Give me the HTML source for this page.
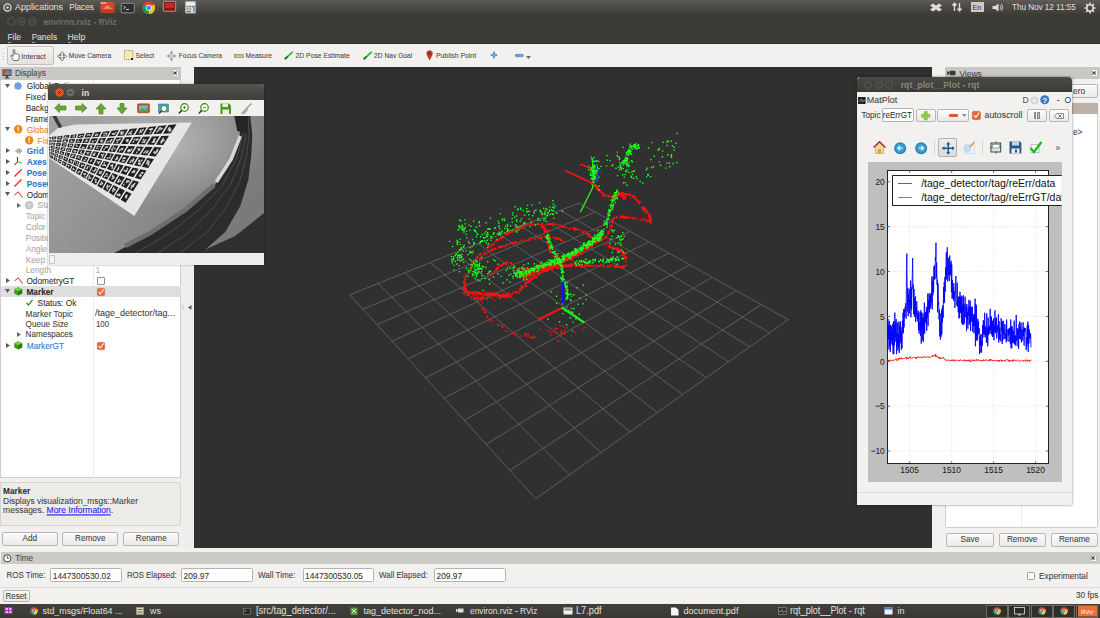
<!DOCTYPE html>
<html><head><meta charset="utf-8">
<style>
*{box-sizing:border-box;margin:0;padding:0}
html,body{width:1100px;height:618px;overflow:hidden;background:#f2f1f0;font-family:"Liberation Sans",sans-serif;color:#3c3c3c;position:relative}
.a{position:absolute}
.t{position:absolute;white-space:nowrap;line-height:1;transform:scaleY(1.1);transform-origin:0 50%;-webkit-text-stroke:0.08px currentColor}
svg{overflow:visible}
.btn{position:absolute;border:1px solid #b9b7b3;border-radius:2px;background:linear-gradient(#fbfbfa,#eceae8)}
</style></head><body>

<div class="a" style="left:0.00px;top:0.00px;width:1100.00px;height:14.00px;background:linear-gradient(#5d5b53,#4a4944 55%,#3e3d39)"></div>
<svg class="a" style="left:2.50px;top:2.50px;" width="9.00" height="9.00" viewBox="0 0 9.00 9.00"><circle cx="4.5" cy="4.5" r="3.6" fill="none" stroke="#dcd9d2" stroke-width="1.3"/><circle cx="4.5" cy="4.5" r="1.3" fill="#dcd9d2"/></svg>
<div class="t" style="left:15.10px;top:3.35px;font-size:8.9px;color:#dfdbd2;">Applications</div>
<div class="t" style="left:69.30px;top:3.72px;font-size:8.16px;color:#dfdbd2;">Places</div>
<svg class="a" style="left:100.00px;top:1.00px;" width="15.00" height="12.00" viewBox="0 0 15.00 12.00"><rect x="0.5" y="1" width="14" height="11" rx="1" fill="#d2482c"/><rect x="0.5" y="1" width="6" height="2" fill="#e8a070"/><path d="M3 8 L7.5 4 L12 8 Z" fill="#f08a5a"/><rect x="1" y="9" width="13" height="2.5" fill="#b83a22"/></svg>
<svg class="a" style="left:121.00px;top:2.50px;" width="13.50" height="10.00" viewBox="0 0 13.50 10.00"><rect x="0.3" y="0.3" width="13" height="9.5" rx="1" fill="#2d2d2d" stroke="#c8c8c8" stroke-width="0.6"/><path d="M2.5 3 L4.5 4.5 L2.5 6" stroke="#eee" stroke-width="0.8" fill="none"/><rect x="5" y="6" width="3" height="0.8" fill="#eee"/></svg>
<svg class="a" style="left:141.50px;top:0.70px;" width="13.50" height="13.50" viewBox="0 0 13.50 13.50"><circle cx="6.75" cy="6.75" r="6.3" fill="#db4437"/><path d="M6.75 6.75 L12.2 3.6 A6.3 6.3 0 0 1 6.75 13.05 Z" fill="#f4c20d"/><path d="M6.75 6.75 L6.75 13.05 A6.3 6.3 0 0 1 1.3 3.6 Z" fill="#0f9d58"/><circle cx="6.75" cy="6.75" r="3" fill="#fff"/><circle cx="6.75" cy="6.75" r="2.3" fill="#4285f4"/></svg>
<svg class="a" style="left:162.50px;top:1.30px;" width="13.00" height="10.50" viewBox="0 0 13.00 10.50"><rect x="0.3" y="0.3" width="12.4" height="10" rx="1" fill="#8a1a1a" stroke="#ddd" stroke-width="0.6"/><rect x="2" y="2" width="9" height="5" fill="#c62828"/></svg>
<svg class="a" style="left:184.50px;top:1.00px;" width="11.00" height="12.50" viewBox="0 0 11.00 12.50"><rect x="0.3" y="0.3" width="10.4" height="12" rx="0.8" fill="#d8d8d8" stroke="#999" stroke-width="0.5"/><rect x="1.5" y="1.5" width="8" height="2.5" fill="#eee"/><g fill="#666"><rect x="1.8" y="5" width="1.5" height="1.2"/><rect x="4.3" y="5" width="1.5" height="1.2"/><rect x="6.8" y="5" width="1.5" height="1.2"/><rect x="1.8" y="7.5" width="1.5" height="1.2"/><rect x="4.3" y="7.5" width="1.5" height="1.2"/><rect x="1.8" y="10" width="4" height="1.2"/></g><rect x="8.3" y="5" width="1.5" height="6" fill="#5a8ac8"/></svg>
<svg class="a" style="left:930.00px;top:2.50px;" width="12.00" height="9.00" viewBox="0 0 12.00 9.00"><path d="M0 2.5 L3 0.5 L6 2.5 L9 0.5 L12 2.5 L9 4.5 L12 6.5 L9 8.5 L6 6.5 L3 8.5 L0 6.5 L3 4.5 Z" fill="#dfdbd2"/></svg>
<svg class="a" style="left:952.00px;top:2.00px;" width="10.00" height="10.00" viewBox="0 0 10.00 10.00"><path d="M2.5 9 V1.5 M0.5 3.5 L2.5 1 L4.5 3.5 M7.5 1 V8.5 M5.5 6.5 L7.5 9 L9.5 6.5" stroke="#dfdbd2" stroke-width="1.4" fill="none"/></svg>
<div class="a" style="left:971.00px;top:2.00px;width:12.60px;height:10.00px;background:#cfcbc3"></div>
<div class="t" style="left:972.50px;top:4.10px;font-size:7.2px;color:#3c3b37;">En</div>
<svg class="a" style="left:992.00px;top:2.50px;" width="12.00" height="9.00" viewBox="0 0 12.00 9.00"><path d="M0.5 3 H3 L6.5 0.5 V8.5 L3 6 H0.5 Z" fill="#dfdbd2"/><path d="M8 2.5 Q9.5 4.5 8 6.5 M9.5 1 Q12 4.5 9.5 8" stroke="#dfdbd2" stroke-width="0.9" fill="none"/></svg>
<div class="t" style="left:1012.00px;top:3.75px;font-size:8.1px;color:#dfdbd2;">Thu Nov 12 11:55</div>
<svg class="a" style="left:1084.00px;top:1.50px;" width="12.00" height="12.00" viewBox="0 0 12.00 12.00"><circle cx="6" cy="6" r="3.2" fill="none" stroke="#dfdbd2" stroke-width="1.6"/><g stroke="#dfdbd2" stroke-width="1.6"><path d="M6 0.5 V2.5 M6 9.5 V11.5 M0.5 6 H2.5 M9.5 6 H11.5 M2.1 2.1 L3.5 3.5 M8.5 8.5 L9.9 9.9 M2.1 9.9 L3.5 8.5 M8.5 3.5 L9.9 2.1"/></g></svg>
<div class="a" style="left:0.00px;top:14.00px;width:1100.00px;height:29.50px;background:#3c3b37"></div>
<div class="a" style="left:0.00px;top:43.00px;width:1100.00px;height:1.00px;background:#2e2d2a"></div>
<svg class="a" style="left:6.80px;top:17.20px;" width="8.60" height="8.60" viewBox="0 0 8.60 8.60"><circle cx="4.3" cy="4.3" r="3.9" fill="#42413c" stroke="#5c5b55" stroke-width="0.7"/></svg>
<svg class="a" style="left:16.90px;top:17.20px;" width="8.60" height="8.60" viewBox="0 0 8.60 8.60"><circle cx="4.3" cy="4.3" r="3.9" fill="#42413c" stroke="#5c5b55" stroke-width="0.7"/></svg>
<svg class="a" style="left:27.70px;top:17.20px;" width="8.60" height="8.60" viewBox="0 0 8.60 8.60"><circle cx="4.3" cy="4.3" r="3.9" fill="#42413c" stroke="#5c5b55" stroke-width="0.7"/></svg>
<svg class="a" style="left:8.60px;top:19.40px;" width="5.00" height="5.00" viewBox="0 0 5.00 5.00"><path d="M1 1 L4 4 M4 1 L1 4" stroke="#2a2a27" stroke-width="0.9"/></svg>
<svg class="a" style="left:19.00px;top:21.20px;" width="4.40" height="1.00" viewBox="0 0 4.40 1.00"><rect x="0" y="0" width="4.4" height="1" fill="#55544e"/></svg>
<svg class="a" style="left:29.70px;top:19.60px;" width="4.60" height="4.60" viewBox="0 0 4.60 4.60"><rect x="0.5" y="0.5" width="3.6" height="3.6" fill="none" stroke="#55544e" stroke-width="0.7"/></svg>
<div class="t" style="left:43.60px;top:17.97px;font-size:8.46px;color:#6f6d67;font-weight:bold;">environ.rviz - RViz</div>
<div class="t" style="left:7.40px;top:32.85px;font-size:8.5px;color:#dfdbd2;">File</div>
<div class="t" style="left:31.70px;top:32.95px;font-size:8.3px;color:#dfdbd2;">Panels</div>
<div class="t" style="left:67.40px;top:32.75px;font-size:8.7px;color:#dfdbd2;">Help</div>
<div class="a" style="left:7.60px;top:41.60px;width:3.00px;height:0.80px;background:#a8a59e"></div>
<div class="a" style="left:32.00px;top:41.60px;width:3.00px;height:0.80px;background:#a8a59e"></div>
<div class="a" style="left:67.60px;top:41.60px;width:3.00px;height:0.80px;background:#a8a59e"></div>
<div class="a" style="left:0.00px;top:44.00px;width:1100.00px;height:23.00px;background:#f2f1f0"></div>
<div class="a" style="left:2.50px;top:52.50px;width:1.00px;height:1.00px;background:#b0aeaa"></div>
<div class="a" style="left:2.50px;top:55.50px;width:1.00px;height:1.00px;background:#b0aeaa"></div>
<div class="a" style="left:2.50px;top:58.50px;width:1.00px;height:1.00px;background:#b0aeaa"></div>
<div class="btn" style="left:7.2px;top:46px;width:46.5px;height:19px;border-color:#c4c2be;background:linear-gradient(#f4f3f2,#e4e2df)"></div>
<svg class="a" style="left:10.00px;top:49.00px;" width="10.00" height="12.00" viewBox="0 0 10.00 12.00"><path d="M3.5 11.5 L1.2 7.5 Q0.6 6.3 1.8 6.2 L3.2 7.4 V1.4 Q3.2 0.5 4 0.5 Q4.8 0.5 4.8 1.4 V5 Q5.6 4.4 6.4 5 Q7.2 4.6 7.9 5.3 Q8.7 5.1 9.2 5.9 V9 L8.2 11.5 Z" fill="#fff" stroke="#333" stroke-width="0.7"/></svg>
<div class="t" style="left:21.30px;top:52.52px;font-size:7.37px;color:#4a4a48;">Interact</div>
<div class="t" style="left:68.80px;top:52.82px;font-size:6.77px;color:#4a4a48;">Move Camera</div>
<div class="t" style="left:135.40px;top:52.82px;font-size:6.76px;color:#4a4a48;">Select</div>
<div class="t" style="left:178.70px;top:52.89px;font-size:6.62px;color:#4a4a48;">Focus Camera</div>
<div class="t" style="left:245.50px;top:52.80px;font-size:6.81px;color:#4a4a48;">Measure</div>
<div class="t" style="left:295.60px;top:52.82px;font-size:6.77px;color:#4a4a48;">2D Pose Estimate</div>
<div class="t" style="left:374.10px;top:52.87px;font-size:6.67px;color:#4a4a48;">2D Nav Goal</div>
<div class="t" style="left:435.90px;top:52.75px;font-size:6.9px;color:#4a4a48;">Publish Point</div>
<svg class="a" style="left:57.00px;top:50.50px;" width="10.00" height="10.50" viewBox="0 0 10.00 10.50"><path d="M5 0.5 L7 3 H6 V4.5 H7.5 V3.5 L9.7 5.25 L7.5 7 V6 H6 V7.5 H7 L5 10 L3 7.5 H4 V6 H2.5 V7 L0.3 5.25 L2.5 3.5 V4.5 H4 V3 H3 Z" fill="#f8f8f8" stroke="#555" stroke-width="0.7" stroke-linejoin="round"/></svg>
<svg class="a" style="left:123.60px;top:50.00px;" width="9.50" height="10.00" viewBox="0 0 9.50 10.00"><rect x="0.5" y="0.5" width="8.5" height="9" fill="#fbe9a6" stroke="#555" stroke-width="0.6" stroke-dasharray="1 0.8"/><rect x="7" y="8" width="2" height="2" fill="#222"/></svg>
<svg class="a" style="left:166.00px;top:49.50px;" width="11.00" height="12.00" viewBox="0 0 11.00 12.00"><path d="M5.5 0.5 L7 3 H4 Z M5.5 11.5 L7 9 H4 Z M0.5 6 L3 4.5 V7.5 Z M10.5 6 L8 4.5 V7.5 Z" fill="#9a9a9a"/><circle cx="5.5" cy="6" r="2.5" fill="none" stroke="#999" stroke-width="0.7"/><path d="M5.5 2 V10 M1.5 6 H9.5" stroke="#999" stroke-width="0.5"/></svg>
<svg class="a" style="left:233.50px;top:53.50px;" width="9.50" height="4.00" viewBox="0 0 9.50 4.00"><rect x="0.3" y="0.3" width="9" height="3.4" fill="#d6c9a0" stroke="#8b7d5a" stroke-width="0.6"/><path d="M2 0.5 V2 M4 0.5 V2 M6 0.5 V2 M8 0.5 V2" stroke="#8b7d5a" stroke-width="0.4"/></svg>
<svg class="a" style="left:283.80px;top:51.00px;" width="9.50" height="9.00" viewBox="0 0 9.50 9.00"><path d="M0.8 8.2 L8.7 0.8" stroke="#1fc41f" stroke-width="1.8"/><path d="M0.8 8.2 L3.5 5.7" stroke="#0e7d0e" stroke-width="1.8"/></svg>
<svg class="a" style="left:362.80px;top:51.00px;" width="9.50" height="9.00" viewBox="0 0 9.50 9.00"><path d="M0.8 8.2 L8.7 0.8" stroke="#1fc41f" stroke-width="1.8"/><path d="M0.8 8.2 L3.5 5.7" stroke="#0e7d0e" stroke-width="1.8"/></svg>
<svg class="a" style="left:425.60px;top:50.00px;" width="7.20" height="11.00" viewBox="0 0 7.20 11.00"><path d="M3.6 10.8 L0.8 5 A3.2 3.2 0 1 1 6.4 5 Z" fill="#c0392b"/><circle cx="3.6" cy="3.6" r="1.2" fill="#7a1e12"/></svg>
<svg class="a" style="left:490.00px;top:51.00px;" width="8.00" height="8.00" viewBox="0 0 8.00 8.00"><path d="M4 0.8 V7.2 M0.8 4 H7.2" stroke="#4a7fc8" stroke-width="2.2"/><path d="M4 0.8 V7.2 M0.8 4 H7.2" stroke="#9ec0ea" stroke-width="0.7"/></svg>
<svg class="a" style="left:515.00px;top:54.00px;" width="8.50" height="3.00" viewBox="0 0 8.50 3.00"><rect x="0.3" y="0.3" width="8" height="2.4" rx="1" fill="#6c9ad6" stroke="#3f6fb0" stroke-width="0.5"/></svg>
<svg class="a" style="left:526.00px;top:56.20px;" width="5.00" height="3.00" viewBox="0 0 5.00 3.00"><path d="M0 0 H5 L2.5 3 Z" fill="#666"/></svg>
<div class="a" style="left:0.00px;top:67.20px;width:180.60px;height:12.40px;background:#c8c7c3"></div>
<svg class="a" style="left:2.00px;top:68.50px;" width="10.00" height="10.00" viewBox="0 0 10.00 10.00"><rect x="0.5" y="0.5" width="9" height="6.5" fill="#333"/><rect x="1.3" y="1.3" width="2.5" height="5" fill="#e05050"/><rect x="3.8" y="1.3" width="2.5" height="5" fill="#50b050"/><rect x="6.3" y="1.3" width="2.5" height="5" fill="#8080e0"/><rect x="4" y="7" width="2" height="1.5" fill="#333"/><rect x="2.5" y="8.5" width="5" height="1" fill="#333"/></svg>
<div class="t" style="left:14.90px;top:69.90px;font-size:8.2px;color:#4a4a48;">Displays</div>
<div class="a" style="left:172.00px;top:69.40px;width:6.80px;height:7.80px;background:#fafafa;border-radius:1.5px;border:0.5px solid #bbb"></div>
<svg class="a" style="left:173.30px;top:71.20px;" width="4.20" height="4.20" viewBox="0 0 4.20 4.20"><path d="M0.5 0.5 L3.7 3.7 M3.7 0.5 L0.5 3.7" stroke="#444" stroke-width="1.1"/></svg>
<div class="a" style="left:0.00px;top:79.60px;width:180.60px;height:398.80px;background:#fff;border:1px solid #cfcecb;border-top:none"></div>
<div class="a" style="left:93.20px;top:79.60px;width:0.80px;height:398.60px;background:#ececec"></div>
<div class="a" style="left:1.00px;top:286.18px;width:179.60px;height:10.80px;background:#dedede"></div>
<svg class="a" style="left:5.40px;top:83.80px;" width="5.00" height="4.00" viewBox="0 0 5.00 4.00"><path d="M0 0 H5 L2.5 4 Z" fill="#5a5a5a"/></svg>
<svg class="a" style="left:14.00px;top:82.00px;" width="8.00" height="8.00" viewBox="0 0 8.00 8.00"><circle cx="4" cy="4" r="3.4" fill="#6fa3e0"/><circle cx="4" cy="4" r="1.2" fill="#9fc3ef"/><g stroke="#6fa3e0" stroke-width="1.4"><path d="M4 0 V8 M0 4 H8 M1.2 1.2 L6.8 6.8 M1.2 6.8 L6.8 1.2"/></g></svg>
<div class="t" style="left:26.70px;top:82.45px;font-size:8.3px;color:#333333;">Global Options</div>
<div class="t" style="left:25.70px;top:93.27px;font-size:8.3px;color:#333333;">Fixed Frame</div>
<div class="t" style="left:25.70px;top:104.09px;font-size:8.3px;color:#333333;">Background Color</div>
<div class="t" style="left:25.70px;top:114.91px;font-size:8.3px;color:#333333;">Frame Rate</div>
<svg class="a" style="left:5.40px;top:127.08px;" width="5.00" height="4.00" viewBox="0 0 5.00 4.00"><path d="M0 0 H5 L2.5 4 Z" fill="#5a5a5a"/></svg>
<svg class="a" style="left:13.80px;top:125.08px;" width="8.40" height="8.40" viewBox="0 0 8.40 8.40"><circle cx="4.2" cy="4.2" r="4.2" fill="#e8891c"/><rect x="3.6" y="1.5" width="1.2" height="3.6" fill="#fff" opacity="0.85"/><rect x="3.6" y="5.8" width="1.2" height="1.1" fill="#fff" opacity="0.85"/></svg>
<div class="t" style="left:26.70px;top:125.73px;font-size:8.3px;color:#e5891c;">Global Status: Warn</div>
<svg class="a" style="left:25.00px;top:135.90px;" width="8.40" height="8.40" viewBox="0 0 8.40 8.40"><circle cx="4.2" cy="4.2" r="4.2" fill="#e8891c"/><rect x="3.6" y="1.5" width="1.2" height="3.6" fill="#fff" opacity="0.85"/><rect x="3.6" y="5.8" width="1.2" height="1.1" fill="#fff" opacity="0.85"/></svg>
<div class="t" style="left:37.60px;top:136.55px;font-size:8.3px;color:#e5891c;">Fixed Frame</div>
<svg class="a" style="left:5.80px;top:148.42px;" width="4.00" height="5.00" viewBox="0 0 4.00 5.00"><path d="M0 0 V5 L4 2.5 Z" fill="#5a5a5a"/></svg>
<svg class="a" style="left:14.50px;top:147.92px;" width="7.50" height="6.00" viewBox="0 0 7.50 6.00"><path d="M0.5 3 L3.75 0.5 L7 3 L3.75 5.5 Z M2.1 1.8 L5.4 4.2 M5.4 1.8 L2.1 4.2" fill="none" stroke="#777" stroke-width="0.8"/></svg>
<div class="t" style="left:26.70px;top:147.37px;font-size:8.3px;color:#2b78cc;font-weight:bold;">Grid</div>
<svg class="a" style="left:5.80px;top:159.24px;" width="4.00" height="5.00" viewBox="0 0 4.00 5.00"><path d="M0 0 V5 L4 2.5 Z" fill="#5a5a5a"/></svg>
<svg class="a" style="left:13.80px;top:157.24px;" width="9.00" height="9.00" viewBox="0 0 9.00 9.00"><path d="M3.5 4.8 V0" stroke="#1a2cf0" stroke-width="1.1"/><path d="M3.5 4.8 L0.5 7.8" stroke="#e81c1c" stroke-width="1.1"/><path d="M3.5 4.8 L8 6" stroke="#1ccc1c" stroke-width="1.1"/></svg>
<div class="t" style="left:26.70px;top:158.19px;font-size:8.3px;color:#2b78cc;font-weight:bold;">Axes</div>
<svg class="a" style="left:5.80px;top:170.06px;" width="4.00" height="5.00" viewBox="0 0 4.00 5.00"><path d="M0 0 V5 L4 2.5 Z" fill="#5a5a5a"/></svg>
<svg class="a" style="left:14.00px;top:168.56px;" width="8.00" height="8.00" viewBox="0 0 8.00 8.00"><path d="M0.5 7.5 L7.5 0.5" stroke="#ee2020" stroke-width="1.2"/></svg>
<div class="t" style="left:26.70px;top:169.01px;font-size:8.3px;color:#2b78cc;font-weight:bold;">Pose</div>
<svg class="a" style="left:5.80px;top:180.88px;" width="4.00" height="5.00" viewBox="0 0 4.00 5.00"><path d="M0 0 V5 L4 2.5 Z" fill="#5a5a5a"/></svg>
<svg class="a" style="left:14.00px;top:179.38px;" width="8.00" height="8.00" viewBox="0 0 8.00 8.00"><path d="M0.5 7.5 L7.5 0.5" stroke="#ee2020" stroke-width="1.2"/></svg>
<div class="t" style="left:26.70px;top:179.83px;font-size:8.3px;color:#2b78cc;font-weight:bold;">PoseGT</div>
<svg class="a" style="left:5.40px;top:192.00px;" width="5.00" height="4.00" viewBox="0 0 5.00 4.00"><path d="M0 0 H5 L2.5 4 Z" fill="#5a5a5a"/></svg>
<svg class="a" style="left:13.50px;top:190.70px;" width="10.00" height="7.00" viewBox="0 0 10.00 7.00"><path d="M0.5 4 L4.3 0.8 L8.5 6.5" fill="none" stroke="#e82020" stroke-width="1"/></svg>
<div class="t" style="left:26.70px;top:190.65px;font-size:8.3px;color:#333333;">Odometry</div>
<svg class="a" style="left:17.20px;top:202.52px;" width="4.00" height="5.00" viewBox="0 0 4.00 5.00"><path d="M0 0 V5 L4 2.5 Z" fill="#6a6a6a"/></svg>
<svg class="a" style="left:25.00px;top:200.82px;" width="8.40" height="8.40" viewBox="0 0 8.40 8.40"><circle cx="4.2" cy="4.2" r="4.2" fill="#c4c4c4"/><rect x="3.7" y="1.8" width="1" height="4.8" fill="#eee"/></svg>
<div class="t" style="left:37.60px;top:201.47px;font-size:8.3px;color:#aaaaaa;">Status: Warn</div>
<div class="t" style="left:25.70px;top:212.29px;font-size:8.3px;color:#aaaaaa;">Topic</div>
<div class="t" style="left:25.70px;top:223.11px;font-size:8.3px;color:#aaaaaa;">Color</div>
<div class="t" style="left:25.70px;top:233.93px;font-size:8.3px;color:#aaaaaa;">Position Tolerance</div>
<div class="t" style="left:25.70px;top:244.75px;font-size:8.3px;color:#aaaaaa;">Angle Tolerance</div>
<div class="t" style="left:25.70px;top:255.57px;font-size:8.3px;color:#aaaaaa;">Keep</div>
<div class="t" style="left:25.70px;top:266.39px;font-size:8.3px;color:#aaaaaa;">Length</div>
<div class="t" style="left:95.50px;top:266.39px;font-size:8.3px;color:#b4b4b4;">1</div>
<svg class="a" style="left:5.80px;top:278.26px;" width="4.00" height="5.00" viewBox="0 0 4.00 5.00"><path d="M0 0 V5 L4 2.5 Z" fill="#5a5a5a"/></svg>
<svg class="a" style="left:13.50px;top:277.26px;" width="10.00" height="7.00" viewBox="0 0 10.00 7.00"><path d="M0.5 4 L4.3 0.8 L8.5 6.5" fill="none" stroke="#e82020" stroke-width="1"/></svg>
<div class="t" style="left:26.40px;top:277.21px;font-size:8.3px;color:#333333;">OdometryGT</div>
<div class="a" style="left:97.00px;top:276.96px;width:7.60px;height:7.60px;background:#fff;border:0.8px solid #8e8e8e;border-radius:1px"></div>
<svg class="a" style="left:5.40px;top:289.38px;" width="5.00" height="4.00" viewBox="0 0 5.00 4.00"><path d="M0 0 H5 L2.5 4 Z" fill="#5a5a5a"/></svg>
<svg class="a" style="left:13.80px;top:287.18px;" width="8.60" height="8.80" viewBox="0 0 8.60 8.80"><path d="M4.2 0.3 L8.2 2.2 V6.6 L4.2 8.6 L0.2 6.6 V2.2 Z" fill="#3e9a1e"/><path d="M4.2 0.3 L8.2 2.2 L4.2 4.2 L0.2 2.2 Z" fill="#7ad04a"/><path d="M4.2 4.2 L8.2 2.2 V6.6 L4.2 8.6 Z" fill="#2d7a12"/></svg>
<div class="t" style="left:26.40px;top:288.03px;font-size:8.3px;color:#2a2a2a;font-weight:bold;">Marker</div>
<svg class="a" style="left:97.00px;top:287.58px;" width="8.00" height="8.00" viewBox="0 0 8.00 8.00"><rect x="0.4" y="0.4" width="7.2" height="7.2" rx="1" fill="#e8653a" stroke="#c85a30" stroke-width="0.6"/><path d="M1.6 3.8 L3.4 5.8 L6.6 1.4" fill="none" stroke="#fff3ee" stroke-width="1.1"/></svg>
<svg class="a" style="left:25.50px;top:298.90px;" width="7.00" height="7.00" viewBox="0 0 7.00 7.00"><path d="M0.5 3.8 L2.5 6 L6.5 0.8" fill="none" stroke="#1e8a1e" stroke-width="1.2"/></svg>
<div class="t" style="left:37.60px;top:298.85px;font-size:8.3px;color:#333333;">Status: Ok</div>
<div class="t" style="left:25.60px;top:309.67px;font-size:8.3px;color:#444;">Marker Topic</div>
<div class="t" style="left:95.00px;top:309.32px;font-size:9.0px;color:#444;">/tage_detector/tag...</div>
<div class="t" style="left:25.60px;top:320.54px;font-size:8.2px;color:#444;">Queue Size</div>
<div class="t" style="left:95.90px;top:320.69px;font-size:7.9px;color:#444;">100</div>
<svg class="a" style="left:17.20px;top:332.36px;" width="4.00" height="5.00" viewBox="0 0 4.00 5.00"><path d="M0 0 V5 L4 2.5 Z" fill="#666"/></svg>
<div class="t" style="left:25.60px;top:331.41px;font-size:8.1px;color:#444;">Namespaces</div>
<svg class="a" style="left:5.80px;top:343.18px;" width="4.00" height="5.00" viewBox="0 0 4.00 5.00"><path d="M0 0 V5 L4 2.5 Z" fill="#5a5a5a"/></svg>
<svg class="a" style="left:13.80px;top:341.28px;" width="8.60" height="8.80" viewBox="0 0 8.60 8.80"><path d="M4.2 0.3 L8.2 2.2 V6.6 L4.2 8.6 L0.2 6.6 V2.2 Z" fill="#3e9a1e"/><path d="M4.2 0.3 L8.2 2.2 L4.2 4.2 L0.2 2.2 Z" fill="#7ad04a"/><path d="M4.2 4.2 L8.2 2.2 V6.6 L4.2 8.6 Z" fill="#2d7a12"/></svg>
<div class="t" style="left:26.80px;top:342.13px;font-size:8.3px;color:#2b78cc;">MarkerGT</div>
<svg class="a" style="left:97.00px;top:341.68px;" width="8.00" height="8.00" viewBox="0 0 8.00 8.00"><rect x="0.4" y="0.4" width="7.2" height="7.2" rx="1" fill="#e8653a" stroke="#c85a30" stroke-width="0.6"/><path d="M1.6 3.8 L3.4 5.8 L6.6 1.4" fill="none" stroke="#fff3ee" stroke-width="1.1"/></svg>
<div class="a" style="left:0.00px;top:482.40px;width:180.60px;height:44.00px;background:#edebe7;border:1px solid #d6d4cf"></div>
<div class="t" style="left:3.10px;top:486.65px;font-size:8.3px;color:#333;font-weight:bold;">Marker</div>
<div class="t" style="left:3.10px;top:496.50px;font-size:8.4px;color:#444;">Displays visualization_msgs::Marker</div>
<div class="t" style="left:3.10px;top:506.25px;font-size:8.5px;color:#444;">messages. <span style="color:#1a1aee;text-decoration:underline">More Information</span>.</div>
<div class="btn" style="left:2px;top:531.6px;width:55.5px;height:14.3px"></div>
<div class="btn" style="left:62.2px;top:531.6px;width:56.2px;height:14.3px"></div>
<div class="btn" style="left:123.3px;top:531.6px;width:56px;height:14.3px"></div>
<div class="t" style="left:22.45px;top:535.10px;font-size:8.2px;color:#444;">Add</div>
<div class="t" style="left:75.03px;top:535.10px;font-size:8.2px;color:#444;">Remove</div>
<div class="t" style="left:135.80px;top:535.10px;font-size:8.2px;color:#444;">Rename</div>
<div class="a" style="left:180.60px;top:79.60px;width:13.40px;height:468.00px;background:#efeeec"></div>
<svg class="a" style="left:187.70px;top:305.40px;" width="3.50" height="4.80" viewBox="0 0 3.50 4.80"><path d="M3.5 0 V4.8 L0 2.4 Z" fill="#555"/></svg>
<div class="a" style="left:181.50px;top:304.50px;width:2.20px;height:0.50px;background:#c8c8c8"></div>
<div class="a" style="left:181.50px;top:306.80px;width:2.20px;height:0.50px;background:#c8c8c8"></div>
<div class="a" style="left:181.50px;top:309.10px;width:2.20px;height:0.50px;background:#c8c8c8"></div>
<div class="a" style="left:194.00px;top:67.20px;width:738.00px;height:481.20px;background:#303030"></div>
<svg class="a" style="left:194.00px;top:67.20px;overflow:hidden" width="738.00" height="481.20" viewBox="0 0 738.00 481.20"><path d="M385.00 136.00L155.80 227.80M385.00 136.00L594.20 252.60M401.15 145.00L168.98 242.25M366.52 143.40L575.51 265.86M418.13 154.47L183.05 257.67M347.23 151.13L555.71 279.91M436.02 164.44L198.09 274.16M327.08 159.20L534.69 294.82M454.90 174.96L214.20 291.82M305.99 167.65L512.36 310.68M474.84 186.07L231.52 310.80M283.91 176.49L488.56 327.56M495.94 197.83L250.17 331.25M260.76 185.76L463.16 345.58M518.30 210.30L270.32 353.34M236.47 195.49L436.00 364.86M542.04 223.53L292.15 377.27M210.94 205.71L406.87 385.53M567.29 237.60L315.89 403.30M184.09 216.47L375.55 407.75M594.20 252.60L341.80 431.70M155.80 227.80L341.80 431.70" stroke="#6c6c6e" stroke-width="0.75" fill="none"/><path d="M264.9 160.7h1.4v1.4h-1.4zM270.5 156.2h1.4v1.4h-1.4zM264.7 158.5h1.4v1.4h-1.4zM269.2 164.3h1.4v1.4h-1.4zM265.0 152.3h1.4v1.4h-1.4zM269.8 161.2h1.4v1.4h-1.4zM271.8 163.7h1.4v1.4h-1.4zM267.7 157.4h1.4v1.4h-1.4zM274.4 157.4h1.4v1.4h-1.4zM266.0 153.1h1.4v1.4h-1.4zM268.2 159.5h1.4v1.4h-1.4zM267.1 158.5h1.4v1.4h-1.4zM268.7 162.3h1.4v1.4h-1.4zM270.7 159.8h1.4v1.4h-1.4zM263.5 162.3h1.4v1.4h-1.4zM264.5 157.9h1.4v1.4h-1.4zM264.3 158.8h1.4v1.4h-1.4zM266.1 159.9h1.4v1.4h-1.4zM276.3 158.6h1.4v1.4h-1.4zM270.1 152.2h1.4v1.4h-1.4zM267.3 162.1h1.4v1.4h-1.4zM267.8 160.7h1.4v1.4h-1.4z" fill="#1cff1c"/><path d="M262.4 172.7h1.4v1.4h-1.4zM264.3 174.7h1.4v1.4h-1.4zM269.5 177.7h1.4v1.4h-1.4zM264.7 182.8h1.4v1.4h-1.4zM265.8 176.8h1.4v1.4h-1.4zM266.0 181.6h1.4v1.4h-1.4zM267.1 189.0h1.4v1.4h-1.4zM262.6 175.0h1.4v1.4h-1.4zM265.1 187.5h1.4v1.4h-1.4zM268.6 179.0h1.4v1.4h-1.4zM264.2 187.9h1.4v1.4h-1.4zM263.1 184.9h1.4v1.4h-1.4zM262.7 176.8h1.4v1.4h-1.4zM257.9 178.8h1.4v1.4h-1.4zM264.4 197.9h1.4v1.4h-1.4zM265.9 193.3h1.4v1.4h-1.4zM265.1 189.8h1.4v1.4h-1.4zM262.7 190.5h1.4v1.4h-1.4zM269.1 179.5h1.4v1.4h-1.4zM259.2 202.4h1.4v1.4h-1.4zM263.0 192.5h1.4v1.4h-1.4zM265.5 171.4h1.4v1.4h-1.4zM271.7 200.6h1.4v1.4h-1.4zM262.7 190.3h1.4v1.4h-1.4zM262.5 174.0h1.4v1.4h-1.4zM261.6 186.5h1.4v1.4h-1.4zM266.5 189.9h1.4v1.4h-1.4zM262.2 196.3h1.4v1.4h-1.4zM259.0 190.7h1.4v1.4h-1.4zM266.4 179.9h1.4v1.4h-1.4zM254.8 173.7h1.4v1.4h-1.4zM262.9 188.1h1.4v1.4h-1.4z" fill="#1cff1c"/><path d="M299.9 160.8h1.4v1.4h-1.4zM286.0 169.0h1.4v1.4h-1.4zM284.6 154.0h1.4v1.4h-1.4zM293.3 177.4h1.4v1.4h-1.4zM295.0 161.2h1.4v1.4h-1.4zM282.3 166.9h1.4v1.4h-1.4zM308.4 168.9h1.4v1.4h-1.4zM287.0 173.6h1.4v1.4h-1.4zM285.3 175.1h1.4v1.4h-1.4zM279.8 163.4h1.4v1.4h-1.4zM292.5 172.9h1.4v1.4h-1.4zM291.9 167.3h1.4v1.4h-1.4zM269.6 162.2h1.4v1.4h-1.4zM280.5 163.1h1.4v1.4h-1.4zM291.3 164.1h1.4v1.4h-1.4zM293.1 166.2h1.4v1.4h-1.4zM283.0 166.4h1.4v1.4h-1.4zM289.9 170.1h1.4v1.4h-1.4zM281.7 164.6h1.4v1.4h-1.4zM273.7 173.8h1.4v1.4h-1.4zM299.1 164.9h1.4v1.4h-1.4zM281.7 159.6h1.4v1.4h-1.4zM287.5 166.8h1.4v1.4h-1.4zM305.6 167.0h1.4v1.4h-1.4zM279.0 153.6h1.4v1.4h-1.4zM298.7 166.7h1.4v1.4h-1.4zM271.5 166.7h1.4v1.4h-1.4zM271.5 183.2h1.4v1.4h-1.4zM296.1 168.7h1.4v1.4h-1.4zM284.4 155.1h1.4v1.4h-1.4zM284.9 158.0h1.4v1.4h-1.4zM291.4 155.1h1.4v1.4h-1.4zM277.8 171.9h1.4v1.4h-1.4zM300.8 159.9h1.4v1.4h-1.4zM272.2 170.2h1.4v1.4h-1.4zM293.7 160.9h1.4v1.4h-1.4zM279.8 162.3h1.4v1.4h-1.4zM275.3 162.4h1.4v1.4h-1.4zM297.3 169.2h1.4v1.4h-1.4zM304.5 165.4h1.4v1.4h-1.4z" fill="#1cff1c"/><path d="M309.8 152.9h1.4v1.4h-1.4zM309.9 151.2h1.4v1.4h-1.4zM295.0 161.3h1.4v1.4h-1.4zM324.0 162.0h1.4v1.4h-1.4zM323.0 159.1h1.4v1.4h-1.4zM304.5 158.2h1.4v1.4h-1.4zM307.6 152.2h1.4v1.4h-1.4zM295.8 150.4h1.4v1.4h-1.4zM311.0 158.6h1.4v1.4h-1.4zM306.7 164.9h1.4v1.4h-1.4zM312.6 160.7h1.4v1.4h-1.4zM322.0 153.7h1.4v1.4h-1.4zM293.3 161.6h1.4v1.4h-1.4zM304.8 164.4h1.4v1.4h-1.4zM314.0 162.8h1.4v1.4h-1.4zM317.9 147.4h1.4v1.4h-1.4zM317.5 154.4h1.4v1.4h-1.4zM304.2 155.6h1.4v1.4h-1.4zM317.9 162.2h1.4v1.4h-1.4zM320.1 149.5h1.4v1.4h-1.4zM305.7 145.9h1.4v1.4h-1.4zM310.1 160.8h1.4v1.4h-1.4zM304.1 159.0h1.4v1.4h-1.4zM313.1 162.8h1.4v1.4h-1.4zM303.6 153.7h1.4v1.4h-1.4zM304.1 166.6h1.4v1.4h-1.4zM320.8 157.2h1.4v1.4h-1.4zM313.0 158.4h1.4v1.4h-1.4zM312.8 156.8h1.4v1.4h-1.4zM308.0 151.5h1.4v1.4h-1.4zM305.2 166.1h1.4v1.4h-1.4zM315.8 158.1h1.4v1.4h-1.4z" fill="#1cff1c"/><path d="M333.9 147.1h1.4v1.4h-1.4zM339.5 143.6h1.4v1.4h-1.4zM338.0 148.0h1.4v1.4h-1.4zM328.5 142.9h1.4v1.4h-1.4zM326.0 141.5h1.4v1.4h-1.4zM344.9 135.0h1.4v1.4h-1.4zM333.3 143.7h1.4v1.4h-1.4zM329.8 147.3h1.4v1.4h-1.4zM347.3 147.2h1.4v1.4h-1.4zM334.6 143.7h1.4v1.4h-1.4zM334.7 151.4h1.4v1.4h-1.4zM332.1 141.1h1.4v1.4h-1.4zM323.4 141.3h1.4v1.4h-1.4zM322.1 152.3h1.4v1.4h-1.4zM339.6 145.6h1.4v1.4h-1.4zM350.6 143.5h1.4v1.4h-1.4zM343.5 150.8h1.4v1.4h-1.4zM320.5 139.0h1.4v1.4h-1.4zM326.7 151.3h1.4v1.4h-1.4zM349.0 140.7h1.4v1.4h-1.4zM346.5 144.9h1.4v1.4h-1.4zM332.1 144.0h1.4v1.4h-1.4zM332.8 137.7h1.4v1.4h-1.4zM326.0 140.6h1.4v1.4h-1.4zM340.9 157.2h1.4v1.4h-1.4z" fill="#1cff1c"/><path d="M367.7 143.5h1.4v1.4h-1.4zM345.4 143.2h1.4v1.4h-1.4zM349.3 152.7h1.4v1.4h-1.4zM356.9 141.9h1.4v1.4h-1.4zM358.7 146.9h1.4v1.4h-1.4zM345.9 142.7h1.4v1.4h-1.4zM352.8 144.9h1.4v1.4h-1.4zM354.7 143.4h1.4v1.4h-1.4zM354.9 142.5h1.4v1.4h-1.4zM349.5 150.9h1.4v1.4h-1.4zM355.8 146.6h1.4v1.4h-1.4zM346.0 144.1h1.4v1.4h-1.4zM358.1 139.6h1.4v1.4h-1.4zM359.5 143.2h1.4v1.4h-1.4z" fill="#1cff1c"/><path d="M358.2 133.0h1.4v1.4h-1.4zM318.2 145.3h1.4v1.4h-1.4zM322.0 148.3h1.4v1.4h-1.4zM341.1 142.5h1.4v1.4h-1.4zM352.4 141.8h1.4v1.4h-1.4zM323.1 142.2h1.4v1.4h-1.4zM352.5 147.5h1.4v1.4h-1.4zM317.5 150.9h1.4v1.4h-1.4zM359.3 140.3h1.4v1.4h-1.4zM337.5 137.4h1.4v1.4h-1.4z" fill="#1cff1c"/><path d="M312.3 163.9h1.4v1.4h-1.4zM302.2 171.7h1.4v1.4h-1.4zM313.3 162.5h1.4v1.4h-1.4zM316.2 163.6h1.4v1.4h-1.4zM275.5 185.3h1.4v1.4h-1.4zM302.8 166.1h1.4v1.4h-1.4zM296.4 172.7h1.4v1.4h-1.4zM264.7 191.9h1.4v1.4h-1.4zM360.3 138.6h1.4v1.4h-1.4zM268.3 191.5h1.4v1.4h-1.4zM357.6 143.0h1.4v1.4h-1.4zM260.6 193.8h1.4v1.4h-1.4zM256.9 191.4h1.4v1.4h-1.4zM291.5 175.0h1.4v1.4h-1.4zM307.4 163.6h1.4v1.4h-1.4zM305.3 161.2h1.4v1.4h-1.4zM330.5 155.3h1.4v1.4h-1.4zM289.8 165.8h1.4v1.4h-1.4zM322.6 162.3h1.4v1.4h-1.4zM321.2 159.3h1.4v1.4h-1.4zM279.3 176.8h1.4v1.4h-1.4zM359.2 150.7h1.4v1.4h-1.4zM325.5 153.5h1.4v1.4h-1.4zM281.8 169.2h1.4v1.4h-1.4zM276.6 193.2h1.4v1.4h-1.4zM362.0 145.6h1.4v1.4h-1.4zM268.3 183.4h1.4v1.4h-1.4zM258.7 191.1h1.4v1.4h-1.4zM313.3 161.8h1.4v1.4h-1.4zM292.9 165.0h1.4v1.4h-1.4zM267.1 192.7h1.4v1.4h-1.4zM358.7 136.5h1.4v1.4h-1.4zM329.1 155.6h1.4v1.4h-1.4zM314.1 165.0h1.4v1.4h-1.4zM350.9 150.3h1.4v1.4h-1.4zM260.6 187.8h1.4v1.4h-1.4zM355.4 139.4h1.4v1.4h-1.4zM275.1 183.7h1.4v1.4h-1.4zM278.4 183.7h1.4v1.4h-1.4zM264.2 187.2h1.4v1.4h-1.4zM325.4 158.4h1.4v1.4h-1.4zM286.1 174.6h1.4v1.4h-1.4zM287.5 173.1h1.4v1.4h-1.4zM257.4 193.3h1.4v1.4h-1.4zM276.6 184.6h1.4v1.4h-1.4zM335.5 158.9h1.4v1.4h-1.4zM321.9 164.3h1.4v1.4h-1.4zM257.4 195.2h1.4v1.4h-1.4zM351.3 141.0h1.4v1.4h-1.4zM327.3 158.2h1.4v1.4h-1.4zM264.9 181.9h1.4v1.4h-1.4zM350.2 146.8h1.4v1.4h-1.4zM267.1 181.3h1.4v1.4h-1.4zM352.4 148.2h1.4v1.4h-1.4zM292.7 168.9h1.4v1.4h-1.4zM343.0 152.7h1.4v1.4h-1.4zM275.3 179.9h1.4v1.4h-1.4zM289.7 173.2h1.4v1.4h-1.4zM353.6 145.3h1.4v1.4h-1.4zM324.8 160.9h1.4v1.4h-1.4zM327.6 160.1h1.4v1.4h-1.4zM293.2 167.4h1.4v1.4h-1.4zM291.4 169.4h1.4v1.4h-1.4zM274.6 175.5h1.4v1.4h-1.4zM321.0 162.8h1.4v1.4h-1.4zM340.7 157.1h1.4v1.4h-1.4zM310.5 165.6h1.4v1.4h-1.4zM296.3 170.4h1.4v1.4h-1.4zM285.9 173.8h1.4v1.4h-1.4zM305.6 166.7h1.4v1.4h-1.4zM358.1 146.5h1.4v1.4h-1.4zM347.9 146.0h1.4v1.4h-1.4zM328.9 156.8h1.4v1.4h-1.4zM264.7 189.7h1.4v1.4h-1.4zM350.2 145.4h1.4v1.4h-1.4zM258.6 192.4h1.4v1.4h-1.4zM279.1 174.8h1.4v1.4h-1.4zM289.0 170.1h1.4v1.4h-1.4zM279.7 175.4h1.4v1.4h-1.4zM336.5 154.3h1.4v1.4h-1.4zM345.4 152.6h1.4v1.4h-1.4zM267.0 186.8h1.4v1.4h-1.4zM265.9 187.9h1.4v1.4h-1.4zM256.8 188.9h1.4v1.4h-1.4zM293.9 176.1h1.4v1.4h-1.4zM299.0 165.8h1.4v1.4h-1.4zM343.1 156.5h1.4v1.4h-1.4zM349.8 145.6h1.4v1.4h-1.4zM351.3 153.7h1.4v1.4h-1.4zM258.8 188.9h1.4v1.4h-1.4zM277.4 178.8h1.4v1.4h-1.4zM273.2 186.8h1.4v1.4h-1.4zM324.5 160.1h1.4v1.4h-1.4zM321.5 157.7h1.4v1.4h-1.4z" fill="#1cff1c"/><path d="M448.7 150.9h1.4v1.4h-1.4zM298.6 176.3h1.4v1.4h-1.4zM320.5 162.4h1.4v1.4h-1.4zM338.1 155.9h1.4v1.4h-1.4zM352.7 157.2h1.4v1.4h-1.4zM430.7 149.3h1.4v1.4h-1.4zM415.6 161.3h1.4v1.4h-1.4zM322.7 161.3h1.4v1.4h-1.4zM311.0 167.1h1.4v1.4h-1.4zM283.2 189.4h1.4v1.4h-1.4zM275.8 200.0h1.4v1.4h-1.4zM397.9 171.3h1.4v1.4h-1.4zM419.5 150.0h1.4v1.4h-1.4zM356.4 156.6h1.4v1.4h-1.4zM347.4 157.1h1.4v1.4h-1.4zM285.5 186.0h1.4v1.4h-1.4zM414.7 163.5h1.4v1.4h-1.4zM374.5 160.7h1.4v1.4h-1.4zM456.7 154.3h1.4v1.4h-1.4zM408.8 171.6h1.4v1.4h-1.4zM439.2 150.0h1.4v1.4h-1.4zM417.7 155.0h1.4v1.4h-1.4zM343.3 156.4h1.4v1.4h-1.4zM400.9 173.5h1.4v1.4h-1.4zM379.7 162.4h1.4v1.4h-1.4zM284.8 187.9h1.4v1.4h-1.4zM411.1 169.7h1.4v1.4h-1.4zM431.5 149.1h1.4v1.4h-1.4zM299.1 176.4h1.4v1.4h-1.4zM344.3 156.5h1.4v1.4h-1.4zM427.3 149.6h1.4v1.4h-1.4zM422.0 148.7h1.4v1.4h-1.4zM455.5 153.6h1.4v1.4h-1.4zM315.8 165.0h1.4v1.4h-1.4zM392.3 166.7h1.4v1.4h-1.4zM355.8 156.6h1.4v1.4h-1.4zM406.5 172.8h1.4v1.4h-1.4zM401.5 174.4h1.4v1.4h-1.4zM301.9 172.8h1.4v1.4h-1.4zM306.9 170.3h1.4v1.4h-1.4zM332.0 157.8h1.4v1.4h-1.4zM281.3 190.1h1.4v1.4h-1.4zM274.7 200.6h1.4v1.4h-1.4zM282.7 188.7h1.4v1.4h-1.4zM399.0 171.3h1.4v1.4h-1.4zM435.7 150.3h1.4v1.4h-1.4zM275.8 199.9h1.4v1.4h-1.4zM438.5 149.7h1.4v1.4h-1.4zM428.7 150.3h1.4v1.4h-1.4zM393.1 167.3h1.4v1.4h-1.4zM349.9 157.7h1.4v1.4h-1.4zM419.3 150.9h1.4v1.4h-1.4zM455.3 152.9h1.4v1.4h-1.4zM278.9 194.2h1.4v1.4h-1.4zM418.4 151.6h1.4v1.4h-1.4zM358.6 155.5h1.4v1.4h-1.4zM397.6 169.7h1.4v1.4h-1.4zM428.3 149.3h1.4v1.4h-1.4zM369.2 159.2h1.4v1.4h-1.4zM303.8 172.1h1.4v1.4h-1.4zM303.8 172.0h1.4v1.4h-1.4zM394.1 168.9h1.4v1.4h-1.4zM281.4 190.0h1.4v1.4h-1.4zM336.1 156.1h1.4v1.4h-1.4zM307.6 169.2h1.4v1.4h-1.4zM273.2 202.6h1.4v1.4h-1.4zM277.7 197.2h1.4v1.4h-1.4zM352.9 156.8h1.4v1.4h-1.4zM429.0 149.6h1.4v1.4h-1.4zM374.5 160.8h1.4v1.4h-1.4zM306.6 169.8h1.4v1.4h-1.4zM413.4 163.4h1.4v1.4h-1.4zM384.2 162.0h1.4v1.4h-1.4zM364.9 157.2h1.4v1.4h-1.4zM399.1 171.4h1.4v1.4h-1.4zM316.6 164.4h1.4v1.4h-1.4zM297.0 176.7h1.4v1.4h-1.4zM394.8 166.3h1.4v1.4h-1.4zM451.8 152.5h1.4v1.4h-1.4zM321.7 161.7h1.4v1.4h-1.4zM356.0 156.6h1.4v1.4h-1.4zM368.6 159.2h1.4v1.4h-1.4zM302.0 172.8h1.4v1.4h-1.4zM455.6 154.0h1.4v1.4h-1.4zM413.4 166.4h1.4v1.4h-1.4zM300.3 174.0h1.4v1.4h-1.4zM313.2 165.2h1.4v1.4h-1.4zM296.0 178.5h1.4v1.4h-1.4zM428.1 149.2h1.4v1.4h-1.4zM422.3 149.3h1.4v1.4h-1.4zM406.5 172.1h1.4v1.4h-1.4zM274.8 202.1h1.4v1.4h-1.4zM421.5 149.7h1.4v1.4h-1.4zM314.3 165.9h1.4v1.4h-1.4zM388.1 164.9h1.4v1.4h-1.4zM338.5 157.1h1.4v1.4h-1.4zM400.1 173.8h1.4v1.4h-1.4zM429.5 149.5h1.4v1.4h-1.4zM298.6 176.6h1.4v1.4h-1.4zM379.5 160.3h1.4v1.4h-1.4zM294.3 179.2h1.4v1.4h-1.4zM357.8 155.9h1.4v1.4h-1.4zM333.9 157.2h1.4v1.4h-1.4zM274.2 204.0h1.4v1.4h-1.4zM430.4 150.3h1.4v1.4h-1.4zM332.7 156.7h1.4v1.4h-1.4zM439.6 151.0h1.4v1.4h-1.4zM360.8 156.7h1.4v1.4h-1.4zM309.3 169.2h1.4v1.4h-1.4zM345.0 156.7h1.4v1.4h-1.4zM381.4 161.3h1.4v1.4h-1.4zM359.2 156.8h1.4v1.4h-1.4zM289.5 184.1h1.4v1.4h-1.4zM307.0 170.2h1.4v1.4h-1.4zM379.8 161.3h1.4v1.4h-1.4zM320.1 163.9h1.4v1.4h-1.4zM372.2 160.2h1.4v1.4h-1.4zM370.8 159.6h1.4v1.4h-1.4zM313.3 164.9h1.4v1.4h-1.4zM358.4 156.9h1.4v1.4h-1.4zM414.4 165.1h1.4v1.4h-1.4zM425.6 150.1h1.4v1.4h-1.4zM322.2 161.0h1.4v1.4h-1.4zM274.7 203.1h1.4v1.4h-1.4zM337.4 156.5h1.4v1.4h-1.4zM358.1 157.1h1.4v1.4h-1.4zM334.9 156.7h1.4v1.4h-1.4zM302.3 173.6h1.4v1.4h-1.4zM334.9 157.0h1.4v1.4h-1.4zM388.0 164.5h1.4v1.4h-1.4zM312.0 166.9h1.4v1.4h-1.4zM428.9 148.1h1.4v1.4h-1.4zM403.8 173.7h1.4v1.4h-1.4zM311.4 166.7h1.4v1.4h-1.4zM382.5 162.0h1.4v1.4h-1.4zM346.2 156.9h1.4v1.4h-1.4zM327.7 159.7h1.4v1.4h-1.4zM433.1 150.7h1.4v1.4h-1.4zM398.2 170.7h1.4v1.4h-1.4zM328.0 160.6h1.4v1.4h-1.4zM346.9 156.1h1.4v1.4h-1.4zM272.3 207.9h1.4v1.4h-1.4zM321.7 161.5h1.4v1.4h-1.4zM304.0 172.5h1.4v1.4h-1.4zM285.0 186.5h1.4v1.4h-1.4zM451.0 152.1h1.4v1.4h-1.4zM418.7 154.3h1.4v1.4h-1.4zM436.0 149.5h1.4v1.4h-1.4zM416.5 158.6h1.4v1.4h-1.4zM311.6 166.8h1.4v1.4h-1.4zM393.9 167.8h1.4v1.4h-1.4zM305.3 170.8h1.4v1.4h-1.4zM321.7 161.7h1.4v1.4h-1.4zM417.0 157.1h1.4v1.4h-1.4zM451.9 153.8h1.4v1.4h-1.4zM410.3 170.6h1.4v1.4h-1.4zM414.8 164.0h1.4v1.4h-1.4zM365.2 157.3h1.4v1.4h-1.4zM380.6 160.5h1.4v1.4h-1.4zM365.7 158.0h1.4v1.4h-1.4zM293.4 180.1h1.4v1.4h-1.4zM393.2 166.8h1.4v1.4h-1.4zM275.6 201.0h1.4v1.4h-1.4zM430.9 149.2h1.4v1.4h-1.4zM356.6 156.0h1.4v1.4h-1.4zM338.0 156.0h1.4v1.4h-1.4zM323.1 162.2h1.4v1.4h-1.4zM390.4 163.6h1.4v1.4h-1.4zM382.6 161.6h1.4v1.4h-1.4zM320.4 162.1h1.4v1.4h-1.4zM321.9 161.1h1.4v1.4h-1.4zM433.9 149.6h1.4v1.4h-1.4zM397.8 171.7h1.4v1.4h-1.4zM316.6 163.7h1.4v1.4h-1.4zM294.6 179.1h1.4v1.4h-1.4zM452.6 153.7h1.4v1.4h-1.4zM404.9 173.5h1.4v1.4h-1.4zM322.2 161.8h1.4v1.4h-1.4zM306.6 171.1h1.4v1.4h-1.4zM394.7 168.0h1.4v1.4h-1.4zM406.9 173.0h1.4v1.4h-1.4zM377.9 160.6h1.4v1.4h-1.4zM389.0 165.1h1.4v1.4h-1.4zM447.9 152.0h1.4v1.4h-1.4zM335.6 156.6h1.4v1.4h-1.4zM282.8 190.9h1.4v1.4h-1.4zM351.9 156.3h1.4v1.4h-1.4zM417.4 158.8h1.4v1.4h-1.4zM311.8 166.4h1.4v1.4h-1.4zM280.3 192.0h1.4v1.4h-1.4zM339.9 156.4h1.4v1.4h-1.4zM368.8 159.1h1.4v1.4h-1.4zM425.5 148.8h1.4v1.4h-1.4zM367.3 159.2h1.4v1.4h-1.4zM338.2 157.4h1.4v1.4h-1.4zM328.6 159.8h1.4v1.4h-1.4zM418.2 152.5h1.4v1.4h-1.4zM454.2 152.6h1.4v1.4h-1.4zM406.3 171.6h1.4v1.4h-1.4zM307.0 169.0h1.4v1.4h-1.4zM416.2 158.1h1.4v1.4h-1.4zM284.9 186.6h1.4v1.4h-1.4zM395.2 167.7h1.4v1.4h-1.4zM407.1 172.7h1.4v1.4h-1.4zM454.5 153.5h1.4v1.4h-1.4zM442.1 151.1h1.4v1.4h-1.4zM433.4 149.7h1.4v1.4h-1.4zM300.8 174.1h1.4v1.4h-1.4zM380.2 160.9h1.4v1.4h-1.4zM273.2 206.3h1.4v1.4h-1.4zM308.2 169.8h1.4v1.4h-1.4zM353.0 157.0h1.4v1.4h-1.4zM276.4 198.1h1.4v1.4h-1.4zM415.4 160.2h1.4v1.4h-1.4zM396.3 169.0h1.4v1.4h-1.4zM304.2 172.2h1.4v1.4h-1.4zM417.6 151.5h1.4v1.4h-1.4zM450.3 151.5h1.4v1.4h-1.4zM325.6 160.4h1.4v1.4h-1.4zM405.7 172.7h1.4v1.4h-1.4zM311.5 166.0h1.4v1.4h-1.4zM403.4 174.1h1.4v1.4h-1.4zM343.8 156.4h1.4v1.4h-1.4zM388.2 163.5h1.4v1.4h-1.4zM430.9 150.6h1.4v1.4h-1.4zM285.2 187.3h1.4v1.4h-1.4zM415.5 158.4h1.4v1.4h-1.4zM320.6 162.4h1.4v1.4h-1.4zM370.6 159.8h1.4v1.4h-1.4zM413.7 164.0h1.4v1.4h-1.4zM445.6 151.2h1.4v1.4h-1.4zM391.2 165.9h1.4v1.4h-1.4zM301.5 172.8h1.4v1.4h-1.4zM409.2 170.7h1.4v1.4h-1.4zM365.1 158.7h1.4v1.4h-1.4zM427.0 149.2h1.4v1.4h-1.4zM386.1 162.6h1.4v1.4h-1.4zM297.3 177.8h1.4v1.4h-1.4zM438.3 150.3h1.4v1.4h-1.4zM365.9 158.1h1.4v1.4h-1.4zM361.2 156.7h1.4v1.4h-1.4zM286.5 186.1h1.4v1.4h-1.4zM429.8 148.5h1.4v1.4h-1.4zM318.8 163.6h1.4v1.4h-1.4zM321.5 162.2h1.4v1.4h-1.4zM318.0 164.0h1.4v1.4h-1.4zM411.9 168.5h1.4v1.4h-1.4zM406.7 172.4h1.4v1.4h-1.4zM347.7 155.8h1.4v1.4h-1.4zM408.3 171.6h1.4v1.4h-1.4zM362.2 156.7h1.4v1.4h-1.4zM358.0 156.2h1.4v1.4h-1.4zM349.8 157.4h1.4v1.4h-1.4zM455.1 154.0h1.4v1.4h-1.4zM314.2 164.5h1.4v1.4h-1.4zM380.2 162.6h1.4v1.4h-1.4zM419.9 149.9h1.4v1.4h-1.4zM397.5 170.0h1.4v1.4h-1.4zM422.2 150.4h1.4v1.4h-1.4zM413.9 165.7h1.4v1.4h-1.4zM326.2 159.9h1.4v1.4h-1.4zM417.5 155.3h1.4v1.4h-1.4zM354.2 156.7h1.4v1.4h-1.4zM447.7 152.7h1.4v1.4h-1.4zM431.2 149.3h1.4v1.4h-1.4zM342.7 155.7h1.4v1.4h-1.4zM358.4 157.6h1.4v1.4h-1.4zM392.4 165.9h1.4v1.4h-1.4zM411.4 168.8h1.4v1.4h-1.4zM300.3 174.1h1.4v1.4h-1.4zM313.4 166.4h1.4v1.4h-1.4zM398.2 170.1h1.4v1.4h-1.4zM399.0 172.6h1.4v1.4h-1.4zM417.5 152.4h1.4v1.4h-1.4zM330.7 158.3h1.4v1.4h-1.4zM296.4 177.7h1.4v1.4h-1.4zM318.4 164.1h1.4v1.4h-1.4zM411.8 168.4h1.4v1.4h-1.4zM275.7 200.1h1.4v1.4h-1.4zM274.1 203.4h1.4v1.4h-1.4zM335.3 157.0h1.4v1.4h-1.4zM315.0 164.7h1.4v1.4h-1.4zM295.6 178.9h1.4v1.4h-1.4zM320.4 162.3h1.4v1.4h-1.4zM452.9 153.5h1.4v1.4h-1.4zM281.0 189.9h1.4v1.4h-1.4zM331.8 158.1h1.4v1.4h-1.4zM302.7 172.6h1.4v1.4h-1.4zM447.0 152.3h1.4v1.4h-1.4zM320.2 162.2h1.4v1.4h-1.4zM369.9 159.0h1.4v1.4h-1.4zM325.3 159.8h1.4v1.4h-1.4zM427.1 148.5h1.4v1.4h-1.4zM293.9 179.8h1.4v1.4h-1.4zM364.7 158.3h1.4v1.4h-1.4zM406.5 173.4h1.4v1.4h-1.4zM324.7 161.0h1.4v1.4h-1.4zM343.6 155.8h1.4v1.4h-1.4zM327.5 158.8h1.4v1.4h-1.4zM415.9 158.2h1.4v1.4h-1.4zM354.8 156.6h1.4v1.4h-1.4zM315.7 164.0h1.4v1.4h-1.4zM412.7 165.4h1.4v1.4h-1.4zM282.9 190.0h1.4v1.4h-1.4zM375.5 161.6h1.4v1.4h-1.4zM278.6 195.3h1.4v1.4h-1.4zM329.2 159.6h1.4v1.4h-1.4zM275.2 202.4h1.4v1.4h-1.4zM318.4 164.0h1.4v1.4h-1.4zM393.8 166.5h1.4v1.4h-1.4zM362.6 156.9h1.4v1.4h-1.4zM417.6 155.6h1.4v1.4h-1.4zM402.0 173.2h1.4v1.4h-1.4zM452.3 153.5h1.4v1.4h-1.4zM274.3 203.6h1.4v1.4h-1.4z" fill="#ff1010"/><path d="M360.0 170.3h1.4v1.4h-1.4zM298.2 181.6h1.4v1.4h-1.4zM351.3 168.2h1.4v1.4h-1.4zM308.9 178.3h1.4v1.4h-1.4zM365.5 171.3h1.4v1.4h-1.4zM354.7 169.9h1.4v1.4h-1.4zM297.2 182.2h1.4v1.4h-1.4zM286.6 190.5h1.4v1.4h-1.4zM360.7 171.5h1.4v1.4h-1.4zM336.6 170.4h1.4v1.4h-1.4zM293.9 183.2h1.4v1.4h-1.4zM332.7 172.3h1.4v1.4h-1.4zM335.4 170.4h1.4v1.4h-1.4zM304.5 178.9h1.4v1.4h-1.4zM362.2 170.2h1.4v1.4h-1.4zM367.4 173.4h1.4v1.4h-1.4zM290.4 185.7h1.4v1.4h-1.4zM362.0 171.1h1.4v1.4h-1.4zM306.5 178.5h1.4v1.4h-1.4zM318.4 174.8h1.4v1.4h-1.4zM355.2 169.4h1.4v1.4h-1.4zM345.9 168.7h1.4v1.4h-1.4zM291.3 186.3h1.4v1.4h-1.4zM304.1 178.9h1.4v1.4h-1.4zM358.5 169.6h1.4v1.4h-1.4zM363.4 170.5h1.4v1.4h-1.4zM297.7 183.0h1.4v1.4h-1.4zM288.8 187.6h1.4v1.4h-1.4zM340.5 170.3h1.4v1.4h-1.4zM285.2 191.5h1.4v1.4h-1.4zM355.1 170.0h1.4v1.4h-1.4zM350.9 169.6h1.4v1.4h-1.4zM344.4 170.7h1.4v1.4h-1.4zM340.5 171.9h1.4v1.4h-1.4zM327.0 173.6h1.4v1.4h-1.4zM305.2 178.9h1.4v1.4h-1.4zM293.0 184.7h1.4v1.4h-1.4zM343.0 170.0h1.4v1.4h-1.4zM321.3 175.1h1.4v1.4h-1.4zM332.4 172.9h1.4v1.4h-1.4zM343.2 170.4h1.4v1.4h-1.4zM367.0 172.8h1.4v1.4h-1.4zM296.4 182.9h1.4v1.4h-1.4zM299.6 181.5h1.4v1.4h-1.4zM281.3 193.8h1.4v1.4h-1.4zM320.5 174.5h1.4v1.4h-1.4zM350.1 168.7h1.4v1.4h-1.4zM307.4 179.1h1.4v1.4h-1.4zM304.9 179.5h1.4v1.4h-1.4zM364.6 171.4h1.4v1.4h-1.4zM294.3 183.0h1.4v1.4h-1.4zM306.0 179.6h1.4v1.4h-1.4zM311.6 177.7h1.4v1.4h-1.4zM300.4 181.4h1.4v1.4h-1.4zM366.7 172.6h1.4v1.4h-1.4zM364.1 171.5h1.4v1.4h-1.4zM339.8 169.7h1.4v1.4h-1.4zM369.4 173.8h1.4v1.4h-1.4zM321.8 174.0h1.4v1.4h-1.4zM352.6 169.5h1.4v1.4h-1.4zM301.5 181.3h1.4v1.4h-1.4zM334.7 170.4h1.4v1.4h-1.4zM317.1 174.9h1.4v1.4h-1.4zM310.6 178.8h1.4v1.4h-1.4zM311.8 176.6h1.4v1.4h-1.4zM300.2 180.5h1.4v1.4h-1.4zM365.9 172.3h1.4v1.4h-1.4zM299.5 181.7h1.4v1.4h-1.4zM291.9 185.5h1.4v1.4h-1.4zM282.1 194.2h1.4v1.4h-1.4zM323.3 175.4h1.4v1.4h-1.4zM367.5 173.9h1.4v1.4h-1.4zM313.1 177.3h1.4v1.4h-1.4zM346.5 169.9h1.4v1.4h-1.4zM299.9 180.7h1.4v1.4h-1.4zM296.3 182.5h1.4v1.4h-1.4zM320.7 174.7h1.4v1.4h-1.4zM296.8 181.7h1.4v1.4h-1.4zM280.8 195.8h1.4v1.4h-1.4zM319.0 175.1h1.4v1.4h-1.4zM349.6 168.5h1.4v1.4h-1.4zM361.4 169.9h1.4v1.4h-1.4zM344.4 170.0h1.4v1.4h-1.4zM364.8 171.0h1.4v1.4h-1.4zM355.7 169.7h1.4v1.4h-1.4zM335.0 172.5h1.4v1.4h-1.4zM346.2 170.5h1.4v1.4h-1.4zM338.1 170.3h1.4v1.4h-1.4zM347.6 169.8h1.4v1.4h-1.4zM313.2 177.4h1.4v1.4h-1.4zM305.0 178.7h1.4v1.4h-1.4zM363.8 171.7h1.4v1.4h-1.4zM284.7 191.1h1.4v1.4h-1.4zM333.6 172.1h1.4v1.4h-1.4zM355.3 169.0h1.4v1.4h-1.4zM289.9 186.2h1.4v1.4h-1.4zM306.8 179.7h1.4v1.4h-1.4zM361.5 171.2h1.4v1.4h-1.4zM314.9 176.2h1.4v1.4h-1.4zM324.9 174.3h1.4v1.4h-1.4zM354.3 169.7h1.4v1.4h-1.4zM326.5 172.6h1.4v1.4h-1.4zM304.0 180.2h1.4v1.4h-1.4zM284.8 190.2h1.4v1.4h-1.4zM285.5 190.2h1.4v1.4h-1.4zM317.9 176.1h1.4v1.4h-1.4zM315.7 176.0h1.4v1.4h-1.4zM308.8 178.4h1.4v1.4h-1.4zM321.1 175.1h1.4v1.4h-1.4zM330.2 172.4h1.4v1.4h-1.4z" fill="#ff1010"/><path d="M315.5 195.5h1.4v1.4h-1.4zM313.1 194.6h1.4v1.4h-1.4zM335.2 201.4h1.4v1.4h-1.4zM327.9 199.7h1.4v1.4h-1.4zM316.3 195.3h1.4v1.4h-1.4zM307.9 197.7h1.4v1.4h-1.4zM299.1 204.4h1.4v1.4h-1.4zM330.5 201.0h1.4v1.4h-1.4zM315.4 195.5h1.4v1.4h-1.4zM316.0 195.0h1.4v1.4h-1.4zM326.5 200.5h1.4v1.4h-1.4zM301.5 200.6h1.4v1.4h-1.4zM338.2 200.9h1.4v1.4h-1.4zM307.7 196.9h1.4v1.4h-1.4zM339.2 201.2h1.4v1.4h-1.4zM324.2 201.4h1.4v1.4h-1.4zM302.5 199.7h1.4v1.4h-1.4zM344.9 198.6h1.4v1.4h-1.4zM317.4 196.5h1.4v1.4h-1.4zM339.1 201.0h1.4v1.4h-1.4zM321.2 200.9h1.4v1.4h-1.4zM320.0 198.4h1.4v1.4h-1.4zM319.5 199.3h1.4v1.4h-1.4zM305.8 197.2h1.4v1.4h-1.4zM304.9 198.4h1.4v1.4h-1.4zM317.0 196.1h1.4v1.4h-1.4zM335.0 201.5h1.4v1.4h-1.4zM332.3 201.3h1.4v1.4h-1.4zM296.9 205.4h1.4v1.4h-1.4zM301.5 201.8h1.4v1.4h-1.4zM326.0 201.2h1.4v1.4h-1.4zM302.7 201.9h1.4v1.4h-1.4zM336.5 201.1h1.4v1.4h-1.4zM306.2 197.9h1.4v1.4h-1.4zM343.5 197.5h1.4v1.4h-1.4zM316.3 196.0h1.4v1.4h-1.4zM347.4 197.2h1.4v1.4h-1.4zM338.0 201.6h1.4v1.4h-1.4zM296.0 208.2h1.4v1.4h-1.4zM319.0 197.4h1.4v1.4h-1.4zM345.5 197.7h1.4v1.4h-1.4zM345.0 198.9h1.4v1.4h-1.4zM334.7 200.9h1.4v1.4h-1.4zM298.0 205.9h1.4v1.4h-1.4zM306.0 197.6h1.4v1.4h-1.4zM307.6 197.4h1.4v1.4h-1.4zM303.1 199.7h1.4v1.4h-1.4zM332.1 200.9h1.4v1.4h-1.4zM336.6 200.9h1.4v1.4h-1.4zM343.1 199.3h1.4v1.4h-1.4zM308.9 196.1h1.4v1.4h-1.4zM310.9 196.5h1.4v1.4h-1.4zM311.8 195.9h1.4v1.4h-1.4zM306.6 197.5h1.4v1.4h-1.4zM310.4 195.4h1.4v1.4h-1.4zM335.1 202.0h1.4v1.4h-1.4zM297.1 205.6h1.4v1.4h-1.4zM298.8 204.2h1.4v1.4h-1.4zM316.8 196.2h1.4v1.4h-1.4zM339.2 200.9h1.4v1.4h-1.4zM308.0 196.0h1.4v1.4h-1.4zM304.0 199.4h1.4v1.4h-1.4zM320.7 199.8h1.4v1.4h-1.4zM345.0 198.5h1.4v1.4h-1.4zM329.3 201.4h1.4v1.4h-1.4zM301.2 202.9h1.4v1.4h-1.4zM327.6 201.5h1.4v1.4h-1.4zM304.8 198.6h1.4v1.4h-1.4zM332.4 201.5h1.4v1.4h-1.4zM346.5 196.8h1.4v1.4h-1.4zM306.2 198.5h1.4v1.4h-1.4zM319.0 199.4h1.4v1.4h-1.4zM334.0 201.0h1.4v1.4h-1.4zM300.1 203.4h1.4v1.4h-1.4zM331.3 201.5h1.4v1.4h-1.4zM318.9 198.3h1.4v1.4h-1.4zM339.5 199.5h1.4v1.4h-1.4zM303.4 200.8h1.4v1.4h-1.4zM302.9 200.4h1.4v1.4h-1.4zM319.6 199.5h1.4v1.4h-1.4zM310.6 194.8h1.4v1.4h-1.4zM301.2 202.7h1.4v1.4h-1.4zM336.3 200.3h1.4v1.4h-1.4zM330.4 201.3h1.4v1.4h-1.4zM316.8 195.9h1.4v1.4h-1.4zM344.9 198.4h1.4v1.4h-1.4zM302.6 201.1h1.4v1.4h-1.4zM308.2 196.9h1.4v1.4h-1.4zM341.4 198.9h1.4v1.4h-1.4zM302.9 199.7h1.4v1.4h-1.4zM332.0 200.7h1.4v1.4h-1.4zM305.8 197.2h1.4v1.4h-1.4zM306.8 197.4h1.4v1.4h-1.4zM339.0 200.6h1.4v1.4h-1.4zM307.4 197.6h1.4v1.4h-1.4zM339.0 200.7h1.4v1.4h-1.4zM334.9 202.4h1.4v1.4h-1.4zM346.3 197.1h1.4v1.4h-1.4zM335.2 201.0h1.4v1.4h-1.4zM311.8 194.9h1.4v1.4h-1.4zM296.2 206.8h1.4v1.4h-1.4zM330.6 202.3h1.4v1.4h-1.4z" fill="#ff1010"/><path d="M361.3 190.3h1.4v1.4h-1.4zM369.5 191.0h1.4v1.4h-1.4zM349.8 163.8h1.4v1.4h-1.4zM354.8 173.5h1.4v1.4h-1.4zM359.3 189.4h1.4v1.4h-1.4zM359.0 186.6h1.4v1.4h-1.4zM369.1 189.9h1.4v1.4h-1.4zM364.1 191.8h1.4v1.4h-1.4zM347.0 159.5h1.4v1.4h-1.4zM354.9 184.3h1.4v1.4h-1.4zM354.6 168.9h1.4v1.4h-1.4zM361.1 190.9h1.4v1.4h-1.4zM348.5 159.0h1.4v1.4h-1.4zM351.8 163.9h1.4v1.4h-1.4zM350.2 164.5h1.4v1.4h-1.4zM354.0 174.3h1.4v1.4h-1.4zM369.1 192.5h1.4v1.4h-1.4zM356.0 183.7h1.4v1.4h-1.4zM352.6 163.1h1.4v1.4h-1.4zM353.5 174.9h1.4v1.4h-1.4zM367.7 189.9h1.4v1.4h-1.4zM372.8 188.8h1.4v1.4h-1.4zM350.8 162.3h1.4v1.4h-1.4zM356.9 183.6h1.4v1.4h-1.4zM354.2 171.4h1.4v1.4h-1.4zM355.0 182.2h1.4v1.4h-1.4zM368.1 191.6h1.4v1.4h-1.4zM354.6 177.9h1.4v1.4h-1.4zM372.0 191.0h1.4v1.4h-1.4zM368.6 189.7h1.4v1.4h-1.4zM360.5 188.0h1.4v1.4h-1.4zM359.7 188.7h1.4v1.4h-1.4zM366.4 191.6h1.4v1.4h-1.4zM352.9 168.0h1.4v1.4h-1.4zM353.6 172.3h1.4v1.4h-1.4zM355.0 184.2h1.4v1.4h-1.4zM355.0 168.3h1.4v1.4h-1.4zM358.4 185.7h1.4v1.4h-1.4zM349.3 160.6h1.4v1.4h-1.4zM357.5 185.7h1.4v1.4h-1.4zM353.2 177.1h1.4v1.4h-1.4zM349.9 159.6h1.4v1.4h-1.4zM353.0 163.7h1.4v1.4h-1.4zM364.2 189.3h1.4v1.4h-1.4zM354.8 183.4h1.4v1.4h-1.4zM362.0 190.4h1.4v1.4h-1.4zM352.5 173.5h1.4v1.4h-1.4zM363.6 190.3h1.4v1.4h-1.4zM354.2 166.1h1.4v1.4h-1.4zM358.3 184.8h1.4v1.4h-1.4zM350.4 161.7h1.4v1.4h-1.4zM354.1 174.1h1.4v1.4h-1.4zM354.2 163.5h1.4v1.4h-1.4zM353.4 162.4h1.4v1.4h-1.4zM346.0 157.6h1.4v1.4h-1.4zM360.5 188.9h1.4v1.4h-1.4zM354.4 172.5h1.4v1.4h-1.4zM356.6 185.1h1.4v1.4h-1.4zM351.8 162.9h1.4v1.4h-1.4zM347.0 159.0h1.4v1.4h-1.4zM352.8 164.3h1.4v1.4h-1.4zM357.7 185.2h1.4v1.4h-1.4zM349.9 160.9h1.4v1.4h-1.4zM368.4 191.4h1.4v1.4h-1.4zM353.5 168.2h1.4v1.4h-1.4zM352.5 175.3h1.4v1.4h-1.4zM354.1 169.4h1.4v1.4h-1.4zM355.6 183.1h1.4v1.4h-1.4zM353.3 174.8h1.4v1.4h-1.4zM354.0 178.7h1.4v1.4h-1.4zM353.7 169.5h1.4v1.4h-1.4zM354.4 174.5h1.4v1.4h-1.4zM358.7 188.6h1.4v1.4h-1.4zM354.1 169.2h1.4v1.4h-1.4zM354.2 172.9h1.4v1.4h-1.4zM353.9 172.9h1.4v1.4h-1.4zM348.0 158.1h1.4v1.4h-1.4zM349.2 160.0h1.4v1.4h-1.4zM354.2 180.4h1.4v1.4h-1.4zM351.2 163.7h1.4v1.4h-1.4zM350.1 160.5h1.4v1.4h-1.4zM350.7 163.7h1.4v1.4h-1.4zM353.4 169.0h1.4v1.4h-1.4zM354.6 175.5h1.4v1.4h-1.4zM367.0 191.2h1.4v1.4h-1.4zM347.0 158.2h1.4v1.4h-1.4zM348.6 160.5h1.4v1.4h-1.4zM349.5 161.9h1.4v1.4h-1.4zM354.7 167.1h1.4v1.4h-1.4zM352.5 164.1h1.4v1.4h-1.4zM348.2 159.8h1.4v1.4h-1.4zM361.8 191.0h1.4v1.4h-1.4zM360.5 189.5h1.4v1.4h-1.4zM351.5 162.3h1.4v1.4h-1.4zM350.6 160.5h1.4v1.4h-1.4zM362.3 189.7h1.4v1.4h-1.4z" fill="#ff1010"/><path d="M418.1 128.6h1.4v1.4h-1.4zM443.4 134.4h1.4v1.4h-1.4zM444.6 135.4h1.4v1.4h-1.4zM454.7 148.0h1.4v1.4h-1.4zM431.6 130.1h1.4v1.4h-1.4zM455.2 150.3h1.4v1.4h-1.4zM428.0 129.1h1.4v1.4h-1.4zM440.7 128.8h1.4v1.4h-1.4zM436.1 130.5h1.4v1.4h-1.4zM440.6 131.5h1.4v1.4h-1.4zM439.1 129.5h1.4v1.4h-1.4zM449.4 141.7h1.4v1.4h-1.4zM416.9 129.3h1.4v1.4h-1.4zM422.2 127.9h1.4v1.4h-1.4zM433.6 126.1h1.4v1.4h-1.4zM454.8 147.8h1.4v1.4h-1.4zM427.6 128.3h1.4v1.4h-1.4zM403.2 122.6h1.4v1.4h-1.4zM447.2 139.7h1.4v1.4h-1.4zM452.5 144.5h1.4v1.4h-1.4zM414.7 128.3h1.4v1.4h-1.4zM431.5 127.1h1.4v1.4h-1.4zM425.8 126.8h1.4v1.4h-1.4zM423.8 126.1h1.4v1.4h-1.4zM455.3 148.8h1.4v1.4h-1.4zM429.1 126.3h1.4v1.4h-1.4zM429.9 131.4h1.4v1.4h-1.4zM415.6 128.5h1.4v1.4h-1.4zM454.5 147.0h1.4v1.4h-1.4zM426.3 127.9h1.4v1.4h-1.4zM442.8 132.9h1.4v1.4h-1.4zM454.5 148.5h1.4v1.4h-1.4zM449.2 139.7h1.4v1.4h-1.4zM406.0 123.6h1.4v1.4h-1.4zM440.6 130.8h1.4v1.4h-1.4zM402.6 120.6h1.4v1.4h-1.4zM407.6 125.9h1.4v1.4h-1.4zM450.2 140.4h1.4v1.4h-1.4zM426.9 126.4h1.4v1.4h-1.4zM408.9 127.6h1.4v1.4h-1.4zM405.8 124.7h1.4v1.4h-1.4zM428.7 129.3h1.4v1.4h-1.4zM442.0 133.0h1.4v1.4h-1.4zM422.3 127.1h1.4v1.4h-1.4zM431.1 129.0h1.4v1.4h-1.4zM455.9 152.3h1.4v1.4h-1.4zM428.7 125.5h1.4v1.4h-1.4zM418.7 129.5h1.4v1.4h-1.4zM456.6 155.7h1.4v1.4h-1.4zM403.4 119.2h1.4v1.4h-1.4zM439.2 128.6h1.4v1.4h-1.4zM431.2 125.9h1.4v1.4h-1.4zM406.4 123.9h1.4v1.4h-1.4zM428.4 125.3h1.4v1.4h-1.4zM430.0 131.3h1.4v1.4h-1.4zM427.9 125.4h1.4v1.4h-1.4zM412.3 127.4h1.4v1.4h-1.4zM435.5 126.4h1.4v1.4h-1.4zM399.4 116.8h1.4v1.4h-1.4zM454.1 146.1h1.4v1.4h-1.4zM456.5 154.3h1.4v1.4h-1.4zM414.3 129.1h1.4v1.4h-1.4zM423.6 125.9h1.4v1.4h-1.4zM456.5 152.6h1.4v1.4h-1.4zM438.4 129.6h1.4v1.4h-1.4zM454.0 148.2h1.4v1.4h-1.4zM408.9 128.6h1.4v1.4h-1.4zM402.3 121.5h1.4v1.4h-1.4zM452.0 145.3h1.4v1.4h-1.4zM405.0 123.6h1.4v1.4h-1.4zM444.5 134.6h1.4v1.4h-1.4zM409.3 126.0h1.4v1.4h-1.4zM439.4 129.0h1.4v1.4h-1.4zM429.2 128.8h1.4v1.4h-1.4zM424.3 126.7h1.4v1.4h-1.4zM428.0 128.8h1.4v1.4h-1.4zM445.5 134.0h1.4v1.4h-1.4zM444.7 136.3h1.4v1.4h-1.4zM425.0 125.2h1.4v1.4h-1.4zM407.8 125.9h1.4v1.4h-1.4zM455.0 151.6h1.4v1.4h-1.4zM454.6 146.3h1.4v1.4h-1.4zM425.5 125.2h1.4v1.4h-1.4zM401.4 118.7h1.4v1.4h-1.4zM404.9 122.8h1.4v1.4h-1.4zM428.2 125.4h1.4v1.4h-1.4zM429.2 131.5h1.4v1.4h-1.4zM403.7 120.7h1.4v1.4h-1.4zM436.0 126.9h1.4v1.4h-1.4zM421.4 128.2h1.4v1.4h-1.4zM405.2 123.1h1.4v1.4h-1.4zM437.8 128.2h1.4v1.4h-1.4zM413.1 128.4h1.4v1.4h-1.4zM424.5 126.7h1.4v1.4h-1.4zM456.2 150.2h1.4v1.4h-1.4zM407.8 125.6h1.4v1.4h-1.4zM404.6 122.8h1.4v1.4h-1.4zM429.0 126.4h1.4v1.4h-1.4zM438.2 128.9h1.4v1.4h-1.4zM425.8 125.5h1.4v1.4h-1.4zM451.0 140.7h1.4v1.4h-1.4zM454.1 146.8h1.4v1.4h-1.4zM423.6 126.7h1.4v1.4h-1.4zM448.4 141.2h1.4v1.4h-1.4zM419.9 129.8h1.4v1.4h-1.4zM456.4 154.2h1.4v1.4h-1.4zM454.3 148.8h1.4v1.4h-1.4zM429.8 130.7h1.4v1.4h-1.4zM429.5 129.3h1.4v1.4h-1.4zM438.8 129.2h1.4v1.4h-1.4zM453.8 149.2h1.4v1.4h-1.4zM430.5 126.2h1.4v1.4h-1.4zM423.6 128.3h1.4v1.4h-1.4zM450.2 142.0h1.4v1.4h-1.4zM434.9 127.9h1.4v1.4h-1.4zM450.9 142.0h1.4v1.4h-1.4zM426.3 128.0h1.4v1.4h-1.4zM431.9 127.3h1.4v1.4h-1.4zM408.0 126.0h1.4v1.4h-1.4zM429.3 127.9h1.4v1.4h-1.4zM435.6 127.6h1.4v1.4h-1.4zM422.9 127.2h1.4v1.4h-1.4zM451.3 142.1h1.4v1.4h-1.4zM427.4 127.7h1.4v1.4h-1.4zM426.0 126.7h1.4v1.4h-1.4zM429.3 125.9h1.4v1.4h-1.4zM413.2 127.8h1.4v1.4h-1.4zM443.6 133.2h1.4v1.4h-1.4zM447.4 141.5h1.4v1.4h-1.4zM429.1 130.5h1.4v1.4h-1.4zM441.2 131.3h1.4v1.4h-1.4zM432.7 126.5h1.4v1.4h-1.4zM403.8 122.5h1.4v1.4h-1.4zM433.6 126.7h1.4v1.4h-1.4zM425.8 127.3h1.4v1.4h-1.4zM401.2 119.3h1.4v1.4h-1.4zM455.6 151.9h1.4v1.4h-1.4zM456.2 153.9h1.4v1.4h-1.4zM444.8 136.3h1.4v1.4h-1.4zM429.6 125.9h1.4v1.4h-1.4zM429.1 129.4h1.4v1.4h-1.4zM451.6 144.3h1.4v1.4h-1.4zM412.3 127.6h1.4v1.4h-1.4zM402.7 119.3h1.4v1.4h-1.4zM441.9 131.7h1.4v1.4h-1.4zM455.7 147.7h1.4v1.4h-1.4zM421.6 127.5h1.4v1.4h-1.4zM428.3 131.2h1.4v1.4h-1.4zM423.2 126.9h1.4v1.4h-1.4zM401.8 120.7h1.4v1.4h-1.4zM448.2 140.8h1.4v1.4h-1.4zM425.8 127.3h1.4v1.4h-1.4zM451.8 145.5h1.4v1.4h-1.4zM427.3 126.8h1.4v1.4h-1.4zM418.4 127.7h1.4v1.4h-1.4zM455.7 149.5h1.4v1.4h-1.4zM450.9 142.7h1.4v1.4h-1.4zM429.7 129.9h1.4v1.4h-1.4zM426.7 126.4h1.4v1.4h-1.4zM456.4 149.7h1.4v1.4h-1.4zM406.1 122.9h1.4v1.4h-1.4zM450.2 141.6h1.4v1.4h-1.4zM449.0 143.8h1.4v1.4h-1.4zM450.1 142.7h1.4v1.4h-1.4zM408.3 128.0h1.4v1.4h-1.4zM452.2 144.7h1.4v1.4h-1.4zM455.8 149.8h1.4v1.4h-1.4zM404.4 122.8h1.4v1.4h-1.4zM448.3 139.2h1.4v1.4h-1.4zM400.9 118.1h1.4v1.4h-1.4zM427.6 125.5h1.4v1.4h-1.4zM431.9 126.4h1.4v1.4h-1.4zM410.7 128.0h1.4v1.4h-1.4zM455.0 150.3h1.4v1.4h-1.4zM452.8 144.2h1.4v1.4h-1.4zM455.9 154.6h1.4v1.4h-1.4zM428.5 126.6h1.4v1.4h-1.4zM434.7 127.4h1.4v1.4h-1.4zM423.3 128.0h1.4v1.4h-1.4zM430.6 126.5h1.4v1.4h-1.4zM451.4 144.8h1.4v1.4h-1.4zM427.3 125.1h1.4v1.4h-1.4zM455.2 151.3h1.4v1.4h-1.4zM437.8 128.7h1.4v1.4h-1.4z" fill="#ff1010"/><path d="M432.2 189.4h1.4v1.4h-1.4zM350.5 202.1h1.4v1.4h-1.4zM422.3 183.2h1.4v1.4h-1.4zM397.7 198.7h1.4v1.4h-1.4zM414.7 177.5h1.4v1.4h-1.4zM348.1 205.2h1.4v1.4h-1.4zM412.2 176.3h1.4v1.4h-1.4zM372.8 197.8h1.4v1.4h-1.4zM397.2 198.1h1.4v1.4h-1.4zM390.0 197.0h1.4v1.4h-1.4zM391.3 197.8h1.4v1.4h-1.4zM371.0 197.6h1.4v1.4h-1.4zM431.1 189.3h1.4v1.4h-1.4zM362.0 200.1h1.4v1.4h-1.4zM383.2 197.7h1.4v1.4h-1.4zM372.3 197.6h1.4v1.4h-1.4zM417.9 180.0h1.4v1.4h-1.4zM429.0 185.2h1.4v1.4h-1.4zM421.4 180.6h1.4v1.4h-1.4zM429.3 185.5h1.4v1.4h-1.4zM368.8 199.0h1.4v1.4h-1.4zM372.3 197.7h1.4v1.4h-1.4zM428.7 187.0h1.4v1.4h-1.4zM352.1 201.6h1.4v1.4h-1.4zM427.9 197.9h1.4v1.4h-1.4zM371.0 199.1h1.4v1.4h-1.4zM386.8 197.9h1.4v1.4h-1.4zM355.5 200.4h1.4v1.4h-1.4zM360.6 199.0h1.4v1.4h-1.4zM381.4 198.6h1.4v1.4h-1.4zM414.2 178.7h1.4v1.4h-1.4zM350.3 202.7h1.4v1.4h-1.4zM431.4 193.9h1.4v1.4h-1.4zM431.8 197.7h1.4v1.4h-1.4zM424.1 181.6h1.4v1.4h-1.4zM383.3 196.3h1.4v1.4h-1.4zM427.6 199.3h1.4v1.4h-1.4zM406.1 198.3h1.4v1.4h-1.4zM431.4 193.5h1.4v1.4h-1.4zM386.7 198.3h1.4v1.4h-1.4zM426.7 182.9h1.4v1.4h-1.4zM387.4 198.6h1.4v1.4h-1.4zM405.0 197.7h1.4v1.4h-1.4zM383.9 198.3h1.4v1.4h-1.4zM373.0 198.3h1.4v1.4h-1.4zM414.2 178.5h1.4v1.4h-1.4zM431.0 189.7h1.4v1.4h-1.4zM370.5 198.8h1.4v1.4h-1.4zM356.1 201.4h1.4v1.4h-1.4zM425.6 184.2h1.4v1.4h-1.4zM353.7 201.9h1.4v1.4h-1.4zM420.6 199.7h1.4v1.4h-1.4zM425.6 182.0h1.4v1.4h-1.4zM350.5 201.5h1.4v1.4h-1.4zM430.5 191.3h1.4v1.4h-1.4zM422.0 181.4h1.4v1.4h-1.4zM402.6 198.8h1.4v1.4h-1.4zM400.1 197.7h1.4v1.4h-1.4zM419.7 198.5h1.4v1.4h-1.4zM419.5 198.7h1.4v1.4h-1.4zM387.0 198.1h1.4v1.4h-1.4zM349.6 203.4h1.4v1.4h-1.4zM391.0 197.5h1.4v1.4h-1.4zM431.4 197.6h1.4v1.4h-1.4zM419.9 197.4h1.4v1.4h-1.4zM349.0 201.3h1.4v1.4h-1.4zM414.5 178.9h1.4v1.4h-1.4zM431.0 191.4h1.4v1.4h-1.4zM374.5 196.9h1.4v1.4h-1.4zM382.8 198.7h1.4v1.4h-1.4zM368.0 199.4h1.4v1.4h-1.4zM423.0 180.3h1.4v1.4h-1.4zM421.6 198.5h1.4v1.4h-1.4zM393.5 197.5h1.4v1.4h-1.4zM353.2 201.9h1.4v1.4h-1.4zM406.2 197.1h1.4v1.4h-1.4zM425.4 183.9h1.4v1.4h-1.4zM420.7 181.1h1.4v1.4h-1.4zM415.8 179.3h1.4v1.4h-1.4zM429.5 189.8h1.4v1.4h-1.4zM429.0 188.0h1.4v1.4h-1.4zM357.1 200.6h1.4v1.4h-1.4zM421.0 199.0h1.4v1.4h-1.4zM399.5 198.0h1.4v1.4h-1.4zM395.5 197.5h1.4v1.4h-1.4zM422.7 181.5h1.4v1.4h-1.4zM426.0 198.8h1.4v1.4h-1.4zM404.4 198.3h1.4v1.4h-1.4zM374.1 197.4h1.4v1.4h-1.4zM427.9 184.1h1.4v1.4h-1.4zM347.8 202.8h1.4v1.4h-1.4zM395.2 198.6h1.4v1.4h-1.4zM370.7 197.3h1.4v1.4h-1.4zM385.8 198.8h1.4v1.4h-1.4zM430.2 188.5h1.4v1.4h-1.4zM377.0 198.0h1.4v1.4h-1.4zM428.0 185.7h1.4v1.4h-1.4zM376.8 196.2h1.4v1.4h-1.4zM415.1 180.0h1.4v1.4h-1.4zM423.8 183.1h1.4v1.4h-1.4zM376.3 198.6h1.4v1.4h-1.4zM358.9 200.3h1.4v1.4h-1.4zM381.1 197.2h1.4v1.4h-1.4zM421.3 180.7h1.4v1.4h-1.4zM417.4 179.7h1.4v1.4h-1.4zM418.8 179.4h1.4v1.4h-1.4zM425.2 198.9h1.4v1.4h-1.4zM380.3 196.4h1.4v1.4h-1.4zM396.8 197.9h1.4v1.4h-1.4zM415.0 177.0h1.4v1.4h-1.4zM430.5 197.9h1.4v1.4h-1.4zM414.4 198.5h1.4v1.4h-1.4zM408.8 197.9h1.4v1.4h-1.4zM350.2 202.1h1.4v1.4h-1.4zM416.0 178.8h1.4v1.4h-1.4zM421.1 197.1h1.4v1.4h-1.4zM364.8 198.7h1.4v1.4h-1.4zM385.8 197.8h1.4v1.4h-1.4zM419.5 198.4h1.4v1.4h-1.4zM348.3 203.4h1.4v1.4h-1.4zM423.4 199.3h1.4v1.4h-1.4zM374.4 198.1h1.4v1.4h-1.4zM377.9 197.6h1.4v1.4h-1.4zM393.4 198.6h1.4v1.4h-1.4zM368.6 199.3h1.4v1.4h-1.4zM428.0 200.3h1.4v1.4h-1.4zM430.0 189.2h1.4v1.4h-1.4zM427.3 184.9h1.4v1.4h-1.4zM425.8 183.5h1.4v1.4h-1.4zM372.3 198.5h1.4v1.4h-1.4zM429.8 189.7h1.4v1.4h-1.4zM415.8 178.9h1.4v1.4h-1.4zM375.0 198.9h1.4v1.4h-1.4zM420.0 180.5h1.4v1.4h-1.4zM424.6 199.6h1.4v1.4h-1.4zM364.9 197.6h1.4v1.4h-1.4zM350.0 201.8h1.4v1.4h-1.4zM429.7 199.6h1.4v1.4h-1.4zM366.5 198.4h1.4v1.4h-1.4zM349.9 203.4h1.4v1.4h-1.4zM427.9 186.8h1.4v1.4h-1.4zM353.2 201.2h1.4v1.4h-1.4zM361.1 199.5h1.4v1.4h-1.4zM397.6 198.2h1.4v1.4h-1.4zM431.2 198.2h1.4v1.4h-1.4zM428.5 198.7h1.4v1.4h-1.4zM431.4 194.0h1.4v1.4h-1.4zM416.2 197.3h1.4v1.4h-1.4zM430.1 190.6h1.4v1.4h-1.4zM420.5 180.9h1.4v1.4h-1.4zM414.0 198.5h1.4v1.4h-1.4zM422.1 199.3h1.4v1.4h-1.4zM431.4 190.3h1.4v1.4h-1.4zM424.6 182.6h1.4v1.4h-1.4zM402.0 197.7h1.4v1.4h-1.4zM387.4 196.7h1.4v1.4h-1.4zM412.7 199.1h1.4v1.4h-1.4zM422.0 198.3h1.4v1.4h-1.4zM423.1 181.4h1.4v1.4h-1.4zM423.0 199.0h1.4v1.4h-1.4zM375.3 196.7h1.4v1.4h-1.4zM419.3 198.5h1.4v1.4h-1.4zM419.3 199.0h1.4v1.4h-1.4zM364.6 200.5h1.4v1.4h-1.4zM389.6 198.2h1.4v1.4h-1.4zM426.3 182.9h1.4v1.4h-1.4zM383.7 198.1h1.4v1.4h-1.4zM368.1 198.4h1.4v1.4h-1.4zM417.0 179.9h1.4v1.4h-1.4zM430.0 186.3h1.4v1.4h-1.4zM362.7 200.4h1.4v1.4h-1.4zM413.6 178.8h1.4v1.4h-1.4zM366.0 199.1h1.4v1.4h-1.4zM422.8 181.9h1.4v1.4h-1.4zM369.6 198.2h1.4v1.4h-1.4zM410.0 198.7h1.4v1.4h-1.4zM428.5 199.5h1.4v1.4h-1.4zM423.5 199.6h1.4v1.4h-1.4zM385.7 197.2h1.4v1.4h-1.4zM393.3 198.5h1.4v1.4h-1.4zM384.0 198.3h1.4v1.4h-1.4zM420.0 180.4h1.4v1.4h-1.4zM387.0 199.7h1.4v1.4h-1.4zM392.6 198.6h1.4v1.4h-1.4zM418.8 178.7h1.4v1.4h-1.4zM408.7 199.0h1.4v1.4h-1.4zM423.6 182.5h1.4v1.4h-1.4zM416.6 197.4h1.4v1.4h-1.4zM352.0 200.8h1.4v1.4h-1.4zM365.4 198.1h1.4v1.4h-1.4zM361.6 199.7h1.4v1.4h-1.4zM428.2 184.0h1.4v1.4h-1.4zM422.0 181.8h1.4v1.4h-1.4zM394.1 197.7h1.4v1.4h-1.4zM385.7 199.0h1.4v1.4h-1.4zM362.7 199.6h1.4v1.4h-1.4zM421.7 199.6h1.4v1.4h-1.4zM416.9 180.1h1.4v1.4h-1.4zM377.7 197.3h1.4v1.4h-1.4zM415.7 199.4h1.4v1.4h-1.4zM413.5 198.6h1.4v1.4h-1.4zM376.8 198.0h1.4v1.4h-1.4zM389.5 198.8h1.4v1.4h-1.4zM390.3 198.2h1.4v1.4h-1.4zM430.4 188.7h1.4v1.4h-1.4zM425.7 184.2h1.4v1.4h-1.4zM413.1 199.6h1.4v1.4h-1.4zM360.6 199.6h1.4v1.4h-1.4zM381.4 198.1h1.4v1.4h-1.4zM431.0 191.2h1.4v1.4h-1.4zM410.0 177.0h1.4v1.4h-1.4zM424.0 199.5h1.4v1.4h-1.4zM358.0 199.0h1.4v1.4h-1.4zM413.2 198.5h1.4v1.4h-1.4zM366.2 199.2h1.4v1.4h-1.4z" fill="#ff1010"/><path d="M334.5 214.3h1.4v1.4h-1.4zM292.2 231.7h1.4v1.4h-1.4zM339.9 208.9h1.4v1.4h-1.4zM355.1 200.4h1.4v1.4h-1.4zM338.0 210.8h1.4v1.4h-1.4zM342.4 209.1h1.4v1.4h-1.4zM268.7 220.8h1.4v1.4h-1.4zM344.3 206.5h1.4v1.4h-1.4zM336.9 212.4h1.4v1.4h-1.4zM314.0 229.3h1.4v1.4h-1.4zM273.5 227.2h1.4v1.4h-1.4zM367.7 196.4h1.4v1.4h-1.4zM330.5 218.8h1.4v1.4h-1.4zM272.5 227.6h1.4v1.4h-1.4zM321.8 224.7h1.4v1.4h-1.4zM326.3 217.9h1.4v1.4h-1.4zM276.8 230.8h1.4v1.4h-1.4zM304.9 229.5h1.4v1.4h-1.4zM363.4 199.6h1.4v1.4h-1.4zM332.3 218.0h1.4v1.4h-1.4zM270.6 216.1h1.4v1.4h-1.4zM327.6 219.6h1.4v1.4h-1.4zM270.8 224.1h1.4v1.4h-1.4zM270.6 224.6h1.4v1.4h-1.4zM334.1 212.6h1.4v1.4h-1.4zM269.6 220.8h1.4v1.4h-1.4zM326.2 221.3h1.4v1.4h-1.4zM326.1 221.7h1.4v1.4h-1.4zM269.2 219.7h1.4v1.4h-1.4zM344.7 207.3h1.4v1.4h-1.4zM270.2 209.7h1.4v1.4h-1.4zM280.1 231.6h1.4v1.4h-1.4zM270.1 212.1h1.4v1.4h-1.4zM269.3 209.3h1.4v1.4h-1.4zM269.1 213.8h1.4v1.4h-1.4zM376.4 198.0h1.4v1.4h-1.4zM321.3 223.9h1.4v1.4h-1.4zM287.3 230.2h1.4v1.4h-1.4zM270.8 218.4h1.4v1.4h-1.4zM269.4 219.3h1.4v1.4h-1.4zM271.0 208.7h1.4v1.4h-1.4zM324.1 225.3h1.4v1.4h-1.4zM375.4 198.4h1.4v1.4h-1.4zM357.6 200.5h1.4v1.4h-1.4zM344.8 205.3h1.4v1.4h-1.4zM325.0 223.1h1.4v1.4h-1.4zM364.9 198.0h1.4v1.4h-1.4zM273.4 225.4h1.4v1.4h-1.4zM335.5 213.7h1.4v1.4h-1.4zM345.1 205.8h1.4v1.4h-1.4zM361.6 200.2h1.4v1.4h-1.4zM378.5 197.9h1.4v1.4h-1.4zM350.9 202.3h1.4v1.4h-1.4zM283.5 229.5h1.4v1.4h-1.4zM311.9 227.3h1.4v1.4h-1.4zM370.9 197.1h1.4v1.4h-1.4zM327.5 220.3h1.4v1.4h-1.4zM277.4 226.4h1.4v1.4h-1.4zM269.5 217.3h1.4v1.4h-1.4zM281.4 228.0h1.4v1.4h-1.4zM320.5 224.5h1.4v1.4h-1.4zM326.4 222.5h1.4v1.4h-1.4zM368.8 198.7h1.4v1.4h-1.4zM379.9 194.7h1.4v1.4h-1.4zM332.6 214.4h1.4v1.4h-1.4zM320.9 225.2h1.4v1.4h-1.4zM311.5 227.6h1.4v1.4h-1.4zM271.5 216.0h1.4v1.4h-1.4zM333.9 213.0h1.4v1.4h-1.4zM270.6 221.9h1.4v1.4h-1.4zM374.9 198.0h1.4v1.4h-1.4zM361.1 198.8h1.4v1.4h-1.4zM331.1 215.4h1.4v1.4h-1.4zM271.1 222.4h1.4v1.4h-1.4zM350.0 203.2h1.4v1.4h-1.4zM360.5 199.6h1.4v1.4h-1.4zM280.2 231.9h1.4v1.4h-1.4zM317.5 226.0h1.4v1.4h-1.4zM353.7 200.8h1.4v1.4h-1.4zM285.3 230.7h1.4v1.4h-1.4zM296.6 229.8h1.4v1.4h-1.4zM339.1 210.7h1.4v1.4h-1.4zM336.5 210.6h1.4v1.4h-1.4zM269.2 218.9h1.4v1.4h-1.4zM273.5 224.0h1.4v1.4h-1.4zM364.8 198.4h1.4v1.4h-1.4zM297.1 230.2h1.4v1.4h-1.4zM341.5 209.1h1.4v1.4h-1.4zM330.3 213.2h1.4v1.4h-1.4zM304.8 228.5h1.4v1.4h-1.4zM304.9 229.7h1.4v1.4h-1.4zM348.4 202.7h1.4v1.4h-1.4zM338.3 211.1h1.4v1.4h-1.4zM330.9 218.1h1.4v1.4h-1.4zM274.2 227.6h1.4v1.4h-1.4zM283.6 231.0h1.4v1.4h-1.4zM338.6 208.8h1.4v1.4h-1.4zM302.5 229.6h1.4v1.4h-1.4zM333.5 215.0h1.4v1.4h-1.4zM326.2 222.2h1.4v1.4h-1.4zM322.0 223.5h1.4v1.4h-1.4zM350.7 203.4h1.4v1.4h-1.4zM286.5 229.6h1.4v1.4h-1.4zM269.6 221.6h1.4v1.4h-1.4zM277.3 225.8h1.4v1.4h-1.4zM292.6 231.0h1.4v1.4h-1.4zM358.3 199.6h1.4v1.4h-1.4zM330.1 216.9h1.4v1.4h-1.4zM358.9 200.0h1.4v1.4h-1.4zM270.0 213.5h1.4v1.4h-1.4zM328.1 219.0h1.4v1.4h-1.4zM308.7 227.8h1.4v1.4h-1.4zM320.0 225.2h1.4v1.4h-1.4zM270.8 224.9h1.4v1.4h-1.4zM283.4 232.0h1.4v1.4h-1.4zM270.8 206.9h1.4v1.4h-1.4zM377.4 196.5h1.4v1.4h-1.4zM361.1 198.9h1.4v1.4h-1.4zM271.9 207.7h1.4v1.4h-1.4zM280.2 230.5h1.4v1.4h-1.4zM352.3 203.5h1.4v1.4h-1.4zM282.1 231.1h1.4v1.4h-1.4zM325.4 221.9h1.4v1.4h-1.4zM326.6 221.5h1.4v1.4h-1.4zM341.2 210.4h1.4v1.4h-1.4zM278.2 228.4h1.4v1.4h-1.4zM374.2 197.8h1.4v1.4h-1.4zM269.6 218.8h1.4v1.4h-1.4zM347.5 204.7h1.4v1.4h-1.4zM314.0 227.6h1.4v1.4h-1.4zM270.6 215.5h1.4v1.4h-1.4zM351.0 204.0h1.4v1.4h-1.4zM330.6 217.5h1.4v1.4h-1.4zM357.0 200.7h1.4v1.4h-1.4zM269.9 220.1h1.4v1.4h-1.4zM331.6 213.5h1.4v1.4h-1.4zM304.9 230.3h1.4v1.4h-1.4zM378.7 196.2h1.4v1.4h-1.4zM376.5 197.8h1.4v1.4h-1.4zM309.4 229.2h1.4v1.4h-1.4zM272.0 217.7h1.4v1.4h-1.4zM273.4 226.0h1.4v1.4h-1.4zM357.4 202.3h1.4v1.4h-1.4zM312.5 228.8h1.4v1.4h-1.4zM270.4 221.3h1.4v1.4h-1.4zM321.0 225.0h1.4v1.4h-1.4zM348.0 203.7h1.4v1.4h-1.4zM341.5 206.4h1.4v1.4h-1.4zM287.6 230.5h1.4v1.4h-1.4zM305.1 231.3h1.4v1.4h-1.4zM310.5 228.1h1.4v1.4h-1.4zM335.7 211.7h1.4v1.4h-1.4zM282.8 230.6h1.4v1.4h-1.4zM365.7 197.7h1.4v1.4h-1.4zM315.2 228.7h1.4v1.4h-1.4zM307.2 229.3h1.4v1.4h-1.4zM369.7 198.9h1.4v1.4h-1.4zM367.3 199.1h1.4v1.4h-1.4zM270.6 211.3h1.4v1.4h-1.4zM318.6 224.1h1.4v1.4h-1.4zM285.7 230.4h1.4v1.4h-1.4zM349.0 203.7h1.4v1.4h-1.4zM292.2 229.7h1.4v1.4h-1.4zM374.8 197.1h1.4v1.4h-1.4zM376.4 195.9h1.4v1.4h-1.4zM308.4 229.4h1.4v1.4h-1.4zM360.3 198.3h1.4v1.4h-1.4zM285.8 232.0h1.4v1.4h-1.4zM327.3 218.4h1.4v1.4h-1.4zM323.2 224.9h1.4v1.4h-1.4zM377.8 196.4h1.4v1.4h-1.4zM268.7 225.3h1.4v1.4h-1.4zM352.9 201.9h1.4v1.4h-1.4zM274.2 225.7h1.4v1.4h-1.4zM359.9 197.4h1.4v1.4h-1.4zM281.1 229.8h1.4v1.4h-1.4zM288.3 229.8h1.4v1.4h-1.4zM286.9 231.3h1.4v1.4h-1.4zM355.8 201.3h1.4v1.4h-1.4zM270.7 223.9h1.4v1.4h-1.4zM293.9 229.4h1.4v1.4h-1.4zM270.7 219.3h1.4v1.4h-1.4zM277.1 226.3h1.4v1.4h-1.4zM271.0 223.7h1.4v1.4h-1.4zM334.0 212.8h1.4v1.4h-1.4zM305.2 229.6h1.4v1.4h-1.4zM353.9 202.7h1.4v1.4h-1.4zM349.8 203.6h1.4v1.4h-1.4zM335.6 213.2h1.4v1.4h-1.4zM325.0 221.2h1.4v1.4h-1.4zM321.5 224.0h1.4v1.4h-1.4zM308.3 228.5h1.4v1.4h-1.4zM269.9 215.3h1.4v1.4h-1.4zM330.1 215.8h1.4v1.4h-1.4zM317.8 226.7h1.4v1.4h-1.4zM288.7 230.5h1.4v1.4h-1.4zM299.5 232.2h1.4v1.4h-1.4zM294.9 229.7h1.4v1.4h-1.4zM312.5 227.2h1.4v1.4h-1.4zM343.4 205.7h1.4v1.4h-1.4zM348.2 203.4h1.4v1.4h-1.4zM311.1 227.5h1.4v1.4h-1.4zM279.2 230.8h1.4v1.4h-1.4zM326.6 219.6h1.4v1.4h-1.4zM269.2 215.2h1.4v1.4h-1.4zM314.1 228.6h1.4v1.4h-1.4zM332.4 215.7h1.4v1.4h-1.4zM328.6 220.3h1.4v1.4h-1.4z" fill="#ff1010"/><path d="M292.2 226.9h1.4v1.4h-1.4zM304.2 227.4h1.4v1.4h-1.4zM284.7 225.7h1.4v1.4h-1.4zM307.2 227.7h1.4v1.4h-1.4zM277.6 224.6h1.4v1.4h-1.4zM313.0 226.8h1.4v1.4h-1.4zM304.3 227.9h1.4v1.4h-1.4zM298.5 226.1h1.4v1.4h-1.4zM311.8 228.7h1.4v1.4h-1.4zM285.2 225.0h1.4v1.4h-1.4zM312.7 228.4h1.4v1.4h-1.4zM310.5 228.2h1.4v1.4h-1.4zM308.6 227.1h1.4v1.4h-1.4zM278.3 225.0h1.4v1.4h-1.4zM287.5 225.3h1.4v1.4h-1.4zM274.7 225.2h1.4v1.4h-1.4zM311.2 226.1h1.4v1.4h-1.4zM313.7 224.5h1.4v1.4h-1.4zM295.6 225.7h1.4v1.4h-1.4zM298.8 228.3h1.4v1.4h-1.4zM285.5 226.6h1.4v1.4h-1.4zM309.8 227.7h1.4v1.4h-1.4zM309.3 227.5h1.4v1.4h-1.4zM297.4 226.1h1.4v1.4h-1.4zM271.8 222.5h1.4v1.4h-1.4zM309.7 228.5h1.4v1.4h-1.4zM281.9 225.6h1.4v1.4h-1.4zM297.0 226.5h1.4v1.4h-1.4zM295.8 227.2h1.4v1.4h-1.4zM278.6 224.5h1.4v1.4h-1.4zM285.5 225.5h1.4v1.4h-1.4zM301.5 226.6h1.4v1.4h-1.4zM271.0 220.6h1.4v1.4h-1.4zM288.5 228.7h1.4v1.4h-1.4zM307.3 228.5h1.4v1.4h-1.4zM303.6 227.3h1.4v1.4h-1.4zM296.1 227.6h1.4v1.4h-1.4zM293.9 227.5h1.4v1.4h-1.4zM291.6 228.0h1.4v1.4h-1.4zM294.4 225.7h1.4v1.4h-1.4zM314.4 227.3h1.4v1.4h-1.4zM305.2 226.9h1.4v1.4h-1.4zM287.1 226.8h1.4v1.4h-1.4zM290.1 226.4h1.4v1.4h-1.4zM303.6 226.4h1.4v1.4h-1.4zM292.9 227.0h1.4v1.4h-1.4zM275.9 225.0h1.4v1.4h-1.4zM300.6 227.4h1.4v1.4h-1.4zM282.2 227.0h1.4v1.4h-1.4zM268.9 221.8h1.4v1.4h-1.4zM286.4 225.5h1.4v1.4h-1.4zM298.0 227.3h1.4v1.4h-1.4zM277.7 226.6h1.4v1.4h-1.4zM290.7 227.3h1.4v1.4h-1.4zM302.4 225.4h1.4v1.4h-1.4zM302.5 227.1h1.4v1.4h-1.4zM302.7 227.9h1.4v1.4h-1.4zM296.0 225.5h1.4v1.4h-1.4zM292.2 226.4h1.4v1.4h-1.4zM296.8 225.4h1.4v1.4h-1.4zM281.5 225.4h1.4v1.4h-1.4zM283.2 225.9h1.4v1.4h-1.4zM290.9 225.5h1.4v1.4h-1.4zM308.6 226.9h1.4v1.4h-1.4zM270.0 226.1h1.4v1.4h-1.4zM295.2 227.8h1.4v1.4h-1.4zM284.5 226.4h1.4v1.4h-1.4zM275.2 224.4h1.4v1.4h-1.4zM271.3 223.3h1.4v1.4h-1.4zM284.1 224.4h1.4v1.4h-1.4zM288.3 227.2h1.4v1.4h-1.4zM299.3 226.0h1.4v1.4h-1.4zM299.8 228.3h1.4v1.4h-1.4zM293.4 225.6h1.4v1.4h-1.4zM313.7 225.7h1.4v1.4h-1.4zM273.1 224.4h1.4v1.4h-1.4zM300.5 226.9h1.4v1.4h-1.4zM288.2 226.9h1.4v1.4h-1.4zM305.4 227.7h1.4v1.4h-1.4zM297.9 226.5h1.4v1.4h-1.4zM290.3 224.3h1.4v1.4h-1.4zM307.6 227.5h1.4v1.4h-1.4zM315.8 228.5h1.4v1.4h-1.4zM311.4 228.9h1.4v1.4h-1.4zM285.6 225.8h1.4v1.4h-1.4zM308.1 226.3h1.4v1.4h-1.4zM271.1 223.9h1.4v1.4h-1.4zM293.0 225.1h1.4v1.4h-1.4zM298.6 225.5h1.4v1.4h-1.4zM273.6 224.9h1.4v1.4h-1.4zM310.8 229.8h1.4v1.4h-1.4zM297.0 227.0h1.4v1.4h-1.4zM301.0 226.5h1.4v1.4h-1.4zM282.4 224.2h1.4v1.4h-1.4zM278.9 223.7h1.4v1.4h-1.4zM289.7 224.4h1.4v1.4h-1.4zM297.0 226.4h1.4v1.4h-1.4zM311.4 227.7h1.4v1.4h-1.4zM271.4 220.8h1.4v1.4h-1.4zM281.7 225.6h1.4v1.4h-1.4zM300.0 226.1h1.4v1.4h-1.4zM279.6 227.1h1.4v1.4h-1.4zM283.8 225.6h1.4v1.4h-1.4zM293.5 227.2h1.4v1.4h-1.4zM301.2 226.1h1.4v1.4h-1.4zM316.9 226.9h1.4v1.4h-1.4zM282.0 225.3h1.4v1.4h-1.4zM314.2 226.2h1.4v1.4h-1.4zM298.8 227.2h1.4v1.4h-1.4zM305.8 228.5h1.4v1.4h-1.4zM276.2 224.8h1.4v1.4h-1.4zM293.3 226.0h1.4v1.4h-1.4zM308.8 227.3h1.4v1.4h-1.4zM294.8 227.5h1.4v1.4h-1.4zM290.9 225.4h1.4v1.4h-1.4zM271.3 220.7h1.4v1.4h-1.4zM308.6 226.8h1.4v1.4h-1.4zM305.7 227.7h1.4v1.4h-1.4zM287.2 226.7h1.4v1.4h-1.4zM280.8 225.2h1.4v1.4h-1.4zM289.1 227.9h1.4v1.4h-1.4zM303.3 227.5h1.4v1.4h-1.4zM279.7 226.6h1.4v1.4h-1.4zM273.5 223.5h1.4v1.4h-1.4zM270.8 222.0h1.4v1.4h-1.4zM285.3 227.1h1.4v1.4h-1.4zM299.2 225.0h1.4v1.4h-1.4zM280.6 224.1h1.4v1.4h-1.4zM310.6 228.3h1.4v1.4h-1.4zM315.0 226.2h1.4v1.4h-1.4z" fill="#ff1010"/><path d="M292.4 250.0h1.4v1.4h-1.4zM338.6 268.6h1.4v1.4h-1.4zM338.8 270.3h1.4v1.4h-1.4zM287.5 242.1h1.4v1.4h-1.4zM295.9 252.4h1.4v1.4h-1.4zM287.2 241.2h1.4v1.4h-1.4zM331.3 268.0h1.4v1.4h-1.4zM326.6 268.5h1.4v1.4h-1.4zM331.1 266.8h1.4v1.4h-1.4zM336.1 269.7h1.4v1.4h-1.4zM302.8 256.7h1.4v1.4h-1.4zM338.4 269.9h1.4v1.4h-1.4zM298.1 253.2h1.4v1.4h-1.4zM331.8 268.4h1.4v1.4h-1.4zM292.5 248.5h1.4v1.4h-1.4zM306.8 257.5h1.4v1.4h-1.4zM304.2 257.5h1.4v1.4h-1.4zM319.8 266.9h1.4v1.4h-1.4zM294.5 251.3h1.4v1.4h-1.4zM303.5 257.4h1.4v1.4h-1.4zM296.0 252.2h1.4v1.4h-1.4zM308.4 259.3h1.4v1.4h-1.4zM294.9 253.3h1.4v1.4h-1.4zM290.5 244.7h1.4v1.4h-1.4zM318.4 265.1h1.4v1.4h-1.4zM340.7 269.6h1.4v1.4h-1.4zM337.6 270.0h1.4v1.4h-1.4zM287.6 235.2h1.4v1.4h-1.4zM323.0 266.1h1.4v1.4h-1.4zM288.0 240.6h1.4v1.4h-1.4zM310.9 263.1h1.4v1.4h-1.4zM319.3 265.3h1.4v1.4h-1.4zM303.8 257.4h1.4v1.4h-1.4zM311.9 263.5h1.4v1.4h-1.4zM333.8 267.0h1.4v1.4h-1.4zM290.1 243.0h1.4v1.4h-1.4zM330.0 266.3h1.4v1.4h-1.4zM289.4 244.3h1.4v1.4h-1.4zM316.6 265.7h1.4v1.4h-1.4zM307.5 259.0h1.4v1.4h-1.4zM333.1 266.2h1.4v1.4h-1.4zM291.3 245.0h1.4v1.4h-1.4zM334.5 268.9h1.4v1.4h-1.4z" fill="#ff1010"/><path d="M362.9 273.2h1.4v1.4h-1.4zM355.8 264.6h1.4v1.4h-1.4zM366.3 265.6h1.4v1.4h-1.4zM372.3 260.3h1.4v1.4h-1.4zM370.2 262.7h1.4v1.4h-1.4zM356.7 267.4h1.4v1.4h-1.4zM370.2 266.4h1.4v1.4h-1.4zM389.7 260.1h1.4v1.4h-1.4zM380.5 264.8h1.4v1.4h-1.4zM366.5 258.1h1.4v1.4h-1.4zM361.9 265.2h1.4v1.4h-1.4zM361.2 260.6h1.4v1.4h-1.4zM366.7 263.5h1.4v1.4h-1.4zM366.7 267.2h1.4v1.4h-1.4zM368.9 259.1h1.4v1.4h-1.4zM364.1 273.3h1.4v1.4h-1.4zM359.8 264.3h1.4v1.4h-1.4zM367.5 265.0h1.4v1.4h-1.4zM370.5 265.3h1.4v1.4h-1.4zM387.9 262.4h1.4v1.4h-1.4zM345.1 261.5h1.4v1.4h-1.4zM353.3 262.9h1.4v1.4h-1.4zM376.5 268.1h1.4v1.4h-1.4zM360.1 261.5h1.4v1.4h-1.4zM362.7 261.0h1.4v1.4h-1.4z" fill="#ff1010"/><path d="M326.0 209.8 L326.3 209.7 L326.5 209.6 L326.9 209.5 L327.2 209.4 L327.5 209.3 L327.9 209.1 L328.3 209.0 L328.7 208.9 L329.1 208.7 L329.6 208.5 L330.0 208.4 L330.5 208.2 L331.0 208.1 L331.5 207.9 L332.0 207.7 L332.5 207.5 L333.1 207.3 L333.6 207.1 L334.2 206.9 L334.7 206.8 L335.3 206.6 L335.9 206.4 L336.4 206.2 L337.0 206.0 L337.6 205.7 L338.2 205.5 L338.8 205.3 L339.3 205.1 L339.9 204.9 L340.5 204.7 L341.1 204.5 L341.7 204.3 L342.2 204.1 L342.8 203.9 L343.3 203.7 L343.9 203.5 L344.4 203.3 L345.0 203.2 L345.5 203.0 L346.0 202.8 L346.5 202.6 L347.0 202.4 L347.5 202.3 L348.0 202.1 L348.5 201.9 L349.0 201.8 L349.5 201.6 L350.1 201.4 L350.6 201.3 L351.1 201.1 L351.6 201.0 L352.1 200.8 L352.6 200.6 L353.1 200.5 L353.6 200.3 L354.1 200.1 L354.6 200.0 L355.2 199.8 L355.7 199.7 L356.2 199.5 L356.7 199.3 L357.2 199.2 L357.7 199.0 L358.2 198.8 L358.7 198.6 L359.2 198.5 L359.8 198.3 L360.3 198.1 L360.8 197.9 L361.3 197.7 L361.8 197.5 L362.3 197.3 L362.8 197.1 L363.3 196.9 L363.8 196.7 L364.4 196.5 L364.9 196.3 L365.4 196.1 L365.9 195.8 L366.4 195.6 L366.9 195.4 L367.4 195.1 L367.9 194.9 L368.5 194.6 L369.0 194.4 L369.5 194.1 L370.0 193.8 L370.6 193.5 L371.1 193.3 L371.6 193.0 L372.2 192.7 L372.7 192.4 L373.2 192.1 L373.8 191.8 L374.3 191.5 L374.8 191.2 L375.4 190.9 L375.9 190.6 L376.4 190.3 L377.0 190.0 L377.5 189.7 L378.0 189.4 L378.5 189.1 L379.1 188.8 L379.6 188.4 L380.1 188.1 L380.6 187.8 L381.1 187.5 L381.6 187.2 L382.1 186.9 L382.6 186.6 L383.1 186.3 L383.6 186.0 L384.1 185.7 L384.5 185.4 L385.0 185.1 L385.5 184.8 L385.9 184.6 L386.4 184.3 L386.8 184.0 L387.2 183.7 L387.7 183.5 L388.1 183.2 L388.5 182.9 L389.0 182.6 L389.4 182.4 L389.8 182.1 L390.2 181.8 L390.6 181.6 L391.0 181.3 L391.4 181.0 L391.9 180.7 L392.3 180.5 L392.7 180.2 L393.0 179.9 L393.4 179.7 L393.8 179.4 L394.2 179.2 L394.6 178.9 L395.0 178.6 L395.3 178.4 L395.7 178.1 L396.0 177.9 L396.4 177.6 L396.8 177.4 L397.1 177.1 L397.4 176.9 L397.8 176.6 L398.1 176.4 L398.4 176.1 L398.7 175.9 L399.0 175.6 L399.3 175.4 L399.6 175.2 L399.9 174.9 L400.2 174.7 L400.5 174.5 L400.8 174.2 L401.0 174.0 L401.3 173.8 L401.6 173.6 L401.8 173.4 L402.0 173.1 L402.3 172.9 L402.5 172.7 L402.7 172.5 L402.9 172.3 L403.1 172.0 L403.3 171.8 L403.5 171.6 L403.7 171.4 L403.9 171.2 L404.1 171.0 L404.2 170.7 L404.4 170.5 L404.6 170.3 L404.7 170.1 L404.9 169.9 L405.0 169.7 L405.2 169.5 L405.3 169.3 L405.4 169.1 L405.6 168.9 L405.7 168.8 L405.8 168.6 L405.9 168.4 L406.0 168.2 L406.1 168.1 L406.2 167.9 L406.3 167.7 L406.4 167.6 L406.5 167.4 L406.6 167.3 L406.7 167.2 L406.8 167.0 L406.9 166.9 L407.0 166.8 L407.0 166.7 L407.1 166.6 L407.2 166.5" stroke="#ee1414" stroke-width="2.0" fill="none" stroke-linejoin="round"/><path d="M399.0 173.3h1.4v1.4h-1.4zM381.8 186.9h1.4v1.4h-1.4zM331.9 206.0h1.4v1.4h-1.4zM397.6 178.2h1.4v1.4h-1.4zM395.3 179.0h1.4v1.4h-1.4zM386.3 184.7h1.4v1.4h-1.4zM373.6 190.8h1.4v1.4h-1.4zM402.1 172.5h1.4v1.4h-1.4zM390.3 181.1h1.4v1.4h-1.4zM334.3 206.3h1.4v1.4h-1.4zM335.7 206.3h1.4v1.4h-1.4zM396.5 176.9h1.4v1.4h-1.4zM330.8 208.3h1.4v1.4h-1.4zM349.7 201.3h1.4v1.4h-1.4zM330.8 207.1h1.4v1.4h-1.4zM372.5 191.8h1.4v1.4h-1.4zM338.7 206.6h1.4v1.4h-1.4zM379.5 189.7h1.4v1.4h-1.4zM383.7 186.7h1.4v1.4h-1.4zM330.6 208.1h1.4v1.4h-1.4zM350.7 203.7h1.4v1.4h-1.4zM376.6 190.3h1.4v1.4h-1.4zM338.7 204.2h1.4v1.4h-1.4zM406.2 165.3h1.4v1.4h-1.4zM333.9 207.4h1.4v1.4h-1.4zM402.2 172.3h1.4v1.4h-1.4zM406.5 167.7h1.4v1.4h-1.4zM401.2 171.9h1.4v1.4h-1.4zM336.7 206.5h1.4v1.4h-1.4zM391.5 181.3h1.4v1.4h-1.4zM376.1 192.2h1.4v1.4h-1.4zM403.8 171.7h1.4v1.4h-1.4zM372.3 191.8h1.4v1.4h-1.4zM405.2 166.9h1.4v1.4h-1.4zM366.4 196.2h1.4v1.4h-1.4zM407.2 169.1h1.4v1.4h-1.4zM377.5 190.1h1.4v1.4h-1.4zM337.6 206.1h1.4v1.4h-1.4zM391.8 179.9h1.4v1.4h-1.4zM405.7 165.5h1.4v1.4h-1.4zM375.5 189.2h1.4v1.4h-1.4zM379.0 188.8h1.4v1.4h-1.4zM364.5 194.3h1.4v1.4h-1.4zM357.3 199.2h1.4v1.4h-1.4zM368.2 194.0h1.4v1.4h-1.4zM377.7 186.7h1.4v1.4h-1.4zM391.6 181.2h1.4v1.4h-1.4zM352.5 202.2h1.4v1.4h-1.4zM379.4 189.2h1.4v1.4h-1.4zM370.9 193.3h1.4v1.4h-1.4zM335.7 206.7h1.4v1.4h-1.4zM401.0 172.2h1.4v1.4h-1.4zM331.9 205.2h1.4v1.4h-1.4zM328.0 210.7h1.4v1.4h-1.4zM349.1 200.9h1.4v1.4h-1.4zM377.4 190.0h1.4v1.4h-1.4zM394.6 177.4h1.4v1.4h-1.4zM333.5 206.9h1.4v1.4h-1.4zM336.0 206.9h1.4v1.4h-1.4zM342.3 203.5h1.4v1.4h-1.4zM380.2 186.5h1.4v1.4h-1.4zM359.3 199.6h1.4v1.4h-1.4zM371.4 192.4h1.4v1.4h-1.4zM393.5 178.9h1.4v1.4h-1.4zM395.5 176.3h1.4v1.4h-1.4zM362.2 196.5h1.4v1.4h-1.4zM357.6 199.4h1.4v1.4h-1.4zM347.5 202.0h1.4v1.4h-1.4zM373.0 191.1h1.4v1.4h-1.4zM387.0 183.3h1.4v1.4h-1.4zM331.9 208.7h1.4v1.4h-1.4zM365.0 196.3h1.4v1.4h-1.4zM361.7 198.2h1.4v1.4h-1.4zM379.8 187.3h1.4v1.4h-1.4zM360.5 197.7h1.4v1.4h-1.4zM331.5 208.0h1.4v1.4h-1.4zM336.8 205.6h1.4v1.4h-1.4zM335.4 205.4h1.4v1.4h-1.4zM347.2 202.3h1.4v1.4h-1.4zM387.0 184.2h1.4v1.4h-1.4zM338.0 204.9h1.4v1.4h-1.4zM396.0 176.7h1.4v1.4h-1.4zM394.7 179.3h1.4v1.4h-1.4zM375.5 191.0h1.4v1.4h-1.4zM397.9 178.2h1.4v1.4h-1.4zM340.4 205.6h1.4v1.4h-1.4zM376.0 192.0h1.4v1.4h-1.4zM393.4 180.3h1.4v1.4h-1.4zM339.0 203.6h1.4v1.4h-1.4zM325.8 208.2h1.4v1.4h-1.4zM336.3 207.3h1.4v1.4h-1.4zM333.6 207.0h1.4v1.4h-1.4zM348.3 202.2h1.4v1.4h-1.4zM405.5 168.4h1.4v1.4h-1.4zM340.0 205.4h1.4v1.4h-1.4zM393.6 181.1h1.4v1.4h-1.4zM361.8 198.2h1.4v1.4h-1.4zM382.5 186.1h1.4v1.4h-1.4zM343.6 204.4h1.4v1.4h-1.4zM331.7 209.7h1.4v1.4h-1.4zM350.9 198.6h1.4v1.4h-1.4zM395.9 176.9h1.4v1.4h-1.4zM345.0 202.6h1.4v1.4h-1.4zM356.0 199.0h1.4v1.4h-1.4zM352.4 200.9h1.4v1.4h-1.4zM396.3 179.0h1.4v1.4h-1.4zM363.2 195.4h1.4v1.4h-1.4zM351.1 199.8h1.4v1.4h-1.4zM389.9 180.4h1.4v1.4h-1.4zM391.0 181.6h1.4v1.4h-1.4zM382.7 186.9h1.4v1.4h-1.4zM391.5 180.3h1.4v1.4h-1.4zM342.6 204.0h1.4v1.4h-1.4zM384.3 185.4h1.4v1.4h-1.4zM372.0 192.8h1.4v1.4h-1.4zM334.6 206.0h1.4v1.4h-1.4zM325.4 210.0h1.4v1.4h-1.4zM353.2 199.3h1.4v1.4h-1.4zM347.4 201.7h1.4v1.4h-1.4zM370.0 193.8h1.4v1.4h-1.4zM338.0 206.6h1.4v1.4h-1.4zM369.3 192.8h1.4v1.4h-1.4zM377.6 191.3h1.4v1.4h-1.4zM354.1 199.8h1.4v1.4h-1.4zM328.6 207.0h1.4v1.4h-1.4zM404.6 170.0h1.4v1.4h-1.4zM326.0 207.4h1.4v1.4h-1.4zM395.3 176.9h1.4v1.4h-1.4zM376.6 188.3h1.4v1.4h-1.4zM362.0 197.8h1.4v1.4h-1.4zM391.9 181.8h1.4v1.4h-1.4zM397.1 176.5h1.4v1.4h-1.4zM345.4 202.1h1.4v1.4h-1.4zM402.1 172.0h1.4v1.4h-1.4zM402.2 172.9h1.4v1.4h-1.4zM387.8 181.8h1.4v1.4h-1.4zM396.7 179.1h1.4v1.4h-1.4zM359.4 199.0h1.4v1.4h-1.4zM377.0 191.8h1.4v1.4h-1.4zM381.6 184.6h1.4v1.4h-1.4zM334.8 206.8h1.4v1.4h-1.4zM372.8 190.8h1.4v1.4h-1.4zM350.5 199.5h1.4v1.4h-1.4zM343.8 202.2h1.4v1.4h-1.4zM400.6 174.5h1.4v1.4h-1.4zM332.0 208.9h1.4v1.4h-1.4zM405.9 166.8h1.4v1.4h-1.4zM364.5 196.1h1.4v1.4h-1.4zM387.8 184.9h1.4v1.4h-1.4zM406.2 168.9h1.4v1.4h-1.4zM358.6 200.7h1.4v1.4h-1.4zM360.4 199.3h1.4v1.4h-1.4zM364.8 196.5h1.4v1.4h-1.4zM371.8 190.8h1.4v1.4h-1.4zM339.9 204.8h1.4v1.4h-1.4zM357.6 199.7h1.4v1.4h-1.4zM338.3 206.5h1.4v1.4h-1.4zM395.1 177.5h1.4v1.4h-1.4zM383.9 185.8h1.4v1.4h-1.4zM386.1 185.9h1.4v1.4h-1.4zM339.3 203.2h1.4v1.4h-1.4zM330.2 207.2h1.4v1.4h-1.4zM398.9 174.4h1.4v1.4h-1.4zM334.1 205.7h1.4v1.4h-1.4zM336.9 205.8h1.4v1.4h-1.4zM345.9 203.0h1.4v1.4h-1.4zM345.0 203.0h1.4v1.4h-1.4zM335.3 206.6h1.4v1.4h-1.4zM338.6 204.7h1.4v1.4h-1.4zM348.5 201.1h1.4v1.4h-1.4zM396.6 177.2h1.4v1.4h-1.4zM402.7 174.0h1.4v1.4h-1.4zM338.4 206.2h1.4v1.4h-1.4zM327.0 208.5h1.4v1.4h-1.4zM325.3 210.3h1.4v1.4h-1.4zM338.8 206.5h1.4v1.4h-1.4zM333.6 208.6h1.4v1.4h-1.4zM340.4 205.1h1.4v1.4h-1.4zM334.7 206.5h1.4v1.4h-1.4zM360.9 197.5h1.4v1.4h-1.4zM376.9 187.4h1.4v1.4h-1.4zM366.6 194.3h1.4v1.4h-1.4zM354.2 199.1h1.4v1.4h-1.4zM351.6 201.4h1.4v1.4h-1.4zM382.5 186.1h1.4v1.4h-1.4zM350.5 201.1h1.4v1.4h-1.4zM356.9 198.5h1.4v1.4h-1.4zM356.8 200.2h1.4v1.4h-1.4zM356.0 199.7h1.4v1.4h-1.4zM329.4 210.0h1.4v1.4h-1.4zM330.7 210.2h1.4v1.4h-1.4zM402.8 174.9h1.4v1.4h-1.4zM402.7 172.6h1.4v1.4h-1.4zM330.2 209.2h1.4v1.4h-1.4zM384.9 185.4h1.4v1.4h-1.4zM335.3 206.6h1.4v1.4h-1.4zM367.4 196.1h1.4v1.4h-1.4zM364.7 196.6h1.4v1.4h-1.4zM391.9 181.7h1.4v1.4h-1.4zM345.0 202.4h1.4v1.4h-1.4zM361.3 197.7h1.4v1.4h-1.4zM355.7 200.1h1.4v1.4h-1.4zM364.4 195.5h1.4v1.4h-1.4zM392.4 179.5h1.4v1.4h-1.4zM330.9 208.2h1.4v1.4h-1.4zM361.7 195.7h1.4v1.4h-1.4zM387.2 186.7h1.4v1.4h-1.4zM397.7 179.1h1.4v1.4h-1.4zM401.9 174.2h1.4v1.4h-1.4zM405.9 169.2h1.4v1.4h-1.4zM401.8 174.6h1.4v1.4h-1.4zM388.4 182.7h1.4v1.4h-1.4zM404.9 169.7h1.4v1.4h-1.4zM355.7 200.6h1.4v1.4h-1.4zM364.8 194.5h1.4v1.4h-1.4zM400.6 176.5h1.4v1.4h-1.4zM383.3 189.3h1.4v1.4h-1.4zM362.3 197.0h1.4v1.4h-1.4zM392.1 179.2h1.4v1.4h-1.4zM389.6 183.2h1.4v1.4h-1.4zM378.3 189.6h1.4v1.4h-1.4zM405.3 166.4h1.4v1.4h-1.4zM356.8 198.9h1.4v1.4h-1.4zM394.1 179.2h1.4v1.4h-1.4zM402.2 173.6h1.4v1.4h-1.4zM378.0 188.0h1.4v1.4h-1.4zM372.5 191.4h1.4v1.4h-1.4zM371.2 191.1h1.4v1.4h-1.4zM334.5 207.0h1.4v1.4h-1.4zM363.5 197.1h1.4v1.4h-1.4zM362.3 195.9h1.4v1.4h-1.4z" fill="#ff1010"/><path d="M355.7 192.8h1.4v1.4h-1.4zM408.3 166.6h1.4v1.4h-1.4zM397.3 174.2h1.4v1.4h-1.4zM355.3 192.7h1.4v1.4h-1.4zM343.6 200.2h1.4v1.4h-1.4zM389.3 177.6h1.4v1.4h-1.4zM387.5 180.3h1.4v1.4h-1.4zM357.7 192.4h1.4v1.4h-1.4zM332.0 203.4h1.4v1.4h-1.4zM405.8 171.2h1.4v1.4h-1.4zM366.4 194.8h1.4v1.4h-1.4zM324.4 205.2h1.4v1.4h-1.4zM328.9 203.2h1.4v1.4h-1.4zM339.0 201.7h1.4v1.4h-1.4zM357.9 193.3h1.4v1.4h-1.4zM378.0 187.2h1.4v1.4h-1.4zM386.6 181.9h1.4v1.4h-1.4zM407.0 162.4h1.4v1.4h-1.4zM329.8 204.8h1.4v1.4h-1.4zM404.6 167.5h1.4v1.4h-1.4zM326.5 203.9h1.4v1.4h-1.4zM401.1 173.6h1.4v1.4h-1.4zM381.2 185.6h1.4v1.4h-1.4zM381.7 184.5h1.4v1.4h-1.4zM394.4 177.7h1.4v1.4h-1.4zM353.3 195.0h1.4v1.4h-1.4zM348.5 198.1h1.4v1.4h-1.4zM388.9 177.4h1.4v1.4h-1.4zM352.1 194.2h1.4v1.4h-1.4zM398.0 174.8h1.4v1.4h-1.4zM367.9 191.3h1.4v1.4h-1.4zM392.7 175.9h1.4v1.4h-1.4zM360.8 195.5h1.4v1.4h-1.4zM392.6 177.5h1.4v1.4h-1.4zM394.5 176.6h1.4v1.4h-1.4zM333.6 204.5h1.4v1.4h-1.4zM402.3 167.3h1.4v1.4h-1.4zM342.9 199.9h1.4v1.4h-1.4zM355.0 197.5h1.4v1.4h-1.4zM395.9 176.9h1.4v1.4h-1.4zM325.9 205.8h1.4v1.4h-1.4zM350.8 195.6h1.4v1.4h-1.4zM399.6 174.7h1.4v1.4h-1.4zM362.7 193.7h1.4v1.4h-1.4zM357.2 194.5h1.4v1.4h-1.4zM359.5 195.1h1.4v1.4h-1.4zM373.3 186.0h1.4v1.4h-1.4zM386.0 178.2h1.4v1.4h-1.4zM344.6 198.9h1.4v1.4h-1.4zM406.0 164.8h1.4v1.4h-1.4zM334.5 203.3h1.4v1.4h-1.4zM400.2 171.0h1.4v1.4h-1.4zM330.2 204.5h1.4v1.4h-1.4zM350.3 198.2h1.4v1.4h-1.4zM337.0 202.4h1.4v1.4h-1.4zM350.3 197.7h1.4v1.4h-1.4zM390.8 178.6h1.4v1.4h-1.4zM380.5 183.8h1.4v1.4h-1.4zM400.0 170.3h1.4v1.4h-1.4zM327.1 205.4h1.4v1.4h-1.4zM405.4 165.6h1.4v1.4h-1.4zM399.8 167.5h1.4v1.4h-1.4zM385.9 182.3h1.4v1.4h-1.4zM394.7 175.1h1.4v1.4h-1.4zM373.8 187.5h1.4v1.4h-1.4zM347.1 194.6h1.4v1.4h-1.4zM320.8 206.9h1.4v1.4h-1.4zM332.2 203.7h1.4v1.4h-1.4zM356.8 194.3h1.4v1.4h-1.4zM389.0 176.1h1.4v1.4h-1.4zM395.3 177.5h1.4v1.4h-1.4zM405.8 166.8h1.4v1.4h-1.4zM405.9 163.9h1.4v1.4h-1.4zM331.4 203.1h1.4v1.4h-1.4zM403.0 167.3h1.4v1.4h-1.4zM397.6 169.9h1.4v1.4h-1.4zM360.4 194.5h1.4v1.4h-1.4zM399.3 171.2h1.4v1.4h-1.4zM344.1 198.0h1.4v1.4h-1.4zM339.6 196.0h1.4v1.4h-1.4zM363.0 192.3h1.4v1.4h-1.4zM343.5 198.9h1.4v1.4h-1.4zM324.9 208.0h1.4v1.4h-1.4zM381.9 183.6h1.4v1.4h-1.4zM391.0 178.1h1.4v1.4h-1.4zM332.5 206.6h1.4v1.4h-1.4zM324.7 205.4h1.4v1.4h-1.4zM353.8 192.2h1.4v1.4h-1.4zM356.1 196.3h1.4v1.4h-1.4zM326.7 204.3h1.4v1.4h-1.4zM407.3 163.4h1.4v1.4h-1.4zM340.4 201.4h1.4v1.4h-1.4zM340.4 201.3h1.4v1.4h-1.4zM365.8 194.2h1.4v1.4h-1.4zM336.1 202.1h1.4v1.4h-1.4zM400.6 169.4h1.4v1.4h-1.4zM369.6 189.6h1.4v1.4h-1.4zM372.5 186.3h1.4v1.4h-1.4zM348.9 196.3h1.4v1.4h-1.4zM368.4 191.4h1.4v1.4h-1.4zM327.4 204.1h1.4v1.4h-1.4zM338.6 202.4h1.4v1.4h-1.4zM363.9 191.1h1.4v1.4h-1.4zM372.0 187.4h1.4v1.4h-1.4zM400.4 171.4h1.4v1.4h-1.4zM381.8 182.4h1.4v1.4h-1.4zM398.8 171.7h1.4v1.4h-1.4zM385.0 184.1h1.4v1.4h-1.4zM386.1 180.3h1.4v1.4h-1.4zM365.3 193.5h1.4v1.4h-1.4zM376.2 188.2h1.4v1.4h-1.4zM405.5 167.3h1.4v1.4h-1.4zM355.6 197.2h1.4v1.4h-1.4zM330.7 204.2h1.4v1.4h-1.4zM400.2 168.0h1.4v1.4h-1.4zM382.1 185.1h1.4v1.4h-1.4zM398.8 170.4h1.4v1.4h-1.4zM369.3 188.2h1.4v1.4h-1.4zM377.1 184.0h1.4v1.4h-1.4zM326.9 207.4h1.4v1.4h-1.4zM387.7 183.2h1.4v1.4h-1.4zM383.9 183.5h1.4v1.4h-1.4zM388.5 180.1h1.4v1.4h-1.4zM386.5 179.9h1.4v1.4h-1.4zM364.4 192.7h1.4v1.4h-1.4zM322.3 205.3h1.4v1.4h-1.4zM387.0 182.0h1.4v1.4h-1.4zM357.2 194.7h1.4v1.4h-1.4zM384.0 181.5h1.4v1.4h-1.4zM320.9 208.3h1.4v1.4h-1.4zM381.4 181.3h1.4v1.4h-1.4zM345.9 199.9h1.4v1.4h-1.4zM402.3 170.5h1.4v1.4h-1.4zM364.3 190.8h1.4v1.4h-1.4zM355.0 195.7h1.4v1.4h-1.4zM359.4 193.1h1.4v1.4h-1.4zM407.6 164.2h1.4v1.4h-1.4zM381.8 183.7h1.4v1.4h-1.4zM404.6 172.2h1.4v1.4h-1.4zM394.1 174.8h1.4v1.4h-1.4zM348.2 198.5h1.4v1.4h-1.4zM376.4 185.6h1.4v1.4h-1.4zM357.6 194.4h1.4v1.4h-1.4zM367.9 193.4h1.4v1.4h-1.4zM334.2 204.9h1.4v1.4h-1.4zM352.6 196.8h1.4v1.4h-1.4zM382.5 184.3h1.4v1.4h-1.4zM350.6 197.2h1.4v1.4h-1.4zM362.2 191.1h1.4v1.4h-1.4zM404.5 169.9h1.4v1.4h-1.4zM404.8 165.4h1.4v1.4h-1.4zM402.8 168.8h1.4v1.4h-1.4zM405.0 171.9h1.4v1.4h-1.4zM346.0 196.2h1.4v1.4h-1.4zM370.2 190.6h1.4v1.4h-1.4zM388.3 178.8h1.4v1.4h-1.4zM379.2 187.3h1.4v1.4h-1.4zM398.8 173.0h1.4v1.4h-1.4zM375.4 186.6h1.4v1.4h-1.4zM333.9 203.3h1.4v1.4h-1.4zM326.3 204.3h1.4v1.4h-1.4zM388.6 181.2h1.4v1.4h-1.4zM372.7 188.2h1.4v1.4h-1.4zM361.0 196.2h1.4v1.4h-1.4zM363.3 194.9h1.4v1.4h-1.4zM393.7 175.8h1.4v1.4h-1.4zM348.6 196.5h1.4v1.4h-1.4zM399.5 171.6h1.4v1.4h-1.4zM380.9 185.4h1.4v1.4h-1.4zM369.0 187.7h1.4v1.4h-1.4zM346.7 198.1h1.4v1.4h-1.4zM347.5 199.0h1.4v1.4h-1.4zM362.1 190.4h1.4v1.4h-1.4zM344.0 201.0h1.4v1.4h-1.4zM375.6 188.4h1.4v1.4h-1.4zM333.5 202.0h1.4v1.4h-1.4zM402.6 170.7h1.4v1.4h-1.4zM393.2 176.9h1.4v1.4h-1.4zM357.4 192.6h1.4v1.4h-1.4zM342.0 203.8h1.4v1.4h-1.4zM356.3 195.6h1.4v1.4h-1.4zM337.7 203.0h1.4v1.4h-1.4zM380.2 182.8h1.4v1.4h-1.4zM335.3 203.0h1.4v1.4h-1.4zM349.3 199.6h1.4v1.4h-1.4zM376.3 188.1h1.4v1.4h-1.4zM377.0 187.0h1.4v1.4h-1.4zM321.2 206.0h1.4v1.4h-1.4zM404.2 169.1h1.4v1.4h-1.4zM397.0 173.5h1.4v1.4h-1.4zM373.5 186.5h1.4v1.4h-1.4zM348.4 200.0h1.4v1.4h-1.4zM350.6 196.9h1.4v1.4h-1.4zM379.5 185.1h1.4v1.4h-1.4zM331.1 204.6h1.4v1.4h-1.4zM393.8 174.8h1.4v1.4h-1.4zM373.5 189.8h1.4v1.4h-1.4zM369.0 191.4h1.4v1.4h-1.4zM382.1 184.1h1.4v1.4h-1.4zM352.8 197.6h1.4v1.4h-1.4zM389.4 177.4h1.4v1.4h-1.4zM371.1 188.1h1.4v1.4h-1.4zM337.5 202.5h1.4v1.4h-1.4zM335.5 203.9h1.4v1.4h-1.4zM404.1 171.0h1.4v1.4h-1.4zM361.7 194.9h1.4v1.4h-1.4zM384.7 180.6h1.4v1.4h-1.4zM392.2 179.8h1.4v1.4h-1.4zM388.0 178.6h1.4v1.4h-1.4zM396.6 176.7h1.4v1.4h-1.4zM321.4 205.5h1.4v1.4h-1.4zM403.0 171.8h1.4v1.4h-1.4zM393.4 179.2h1.4v1.4h-1.4zM322.2 206.2h1.4v1.4h-1.4zM322.4 202.9h1.4v1.4h-1.4zM344.0 198.3h1.4v1.4h-1.4zM367.4 194.1h1.4v1.4h-1.4zM374.2 185.3h1.4v1.4h-1.4zM374.6 187.0h1.4v1.4h-1.4zM377.7 185.6h1.4v1.4h-1.4zM407.1 166.8h1.4v1.4h-1.4zM331.7 208.0h1.4v1.4h-1.4zM320.4 205.9h1.4v1.4h-1.4zM357.2 194.5h1.4v1.4h-1.4zM348.2 198.5h1.4v1.4h-1.4zM381.1 185.3h1.4v1.4h-1.4zM324.5 204.7h1.4v1.4h-1.4zM362.5 193.3h1.4v1.4h-1.4zM373.4 187.9h1.4v1.4h-1.4zM351.3 197.3h1.4v1.4h-1.4zM392.8 177.4h1.4v1.4h-1.4zM354.8 197.0h1.4v1.4h-1.4zM382.6 182.0h1.4v1.4h-1.4zM323.2 209.3h1.4v1.4h-1.4zM325.6 208.6h1.4v1.4h-1.4zM342.0 199.0h1.4v1.4h-1.4zM392.3 175.6h1.4v1.4h-1.4zM335.0 205.0h1.4v1.4h-1.4zM393.1 177.5h1.4v1.4h-1.4zM380.6 182.5h1.4v1.4h-1.4zM326.3 205.0h1.4v1.4h-1.4zM378.7 185.6h1.4v1.4h-1.4zM379.6 183.1h1.4v1.4h-1.4zM405.7 165.1h1.4v1.4h-1.4zM403.6 166.7h1.4v1.4h-1.4zM363.3 186.0h1.4v1.4h-1.4zM343.3 198.0h1.4v1.4h-1.4zM404.6 166.7h1.4v1.4h-1.4zM359.7 197.3h1.4v1.4h-1.4zM369.1 189.5h1.4v1.4h-1.4zM336.0 201.0h1.4v1.4h-1.4zM402.9 168.8h1.4v1.4h-1.4zM381.1 187.3h1.4v1.4h-1.4zM358.1 194.8h1.4v1.4h-1.4zM368.8 191.7h1.4v1.4h-1.4zM386.4 180.6h1.4v1.4h-1.4zM319.4 205.6h1.4v1.4h-1.4zM342.2 197.5h1.4v1.4h-1.4zM386.1 181.8h1.4v1.4h-1.4zM396.4 173.6h1.4v1.4h-1.4zM365.0 191.6h1.4v1.4h-1.4zM337.3 200.5h1.4v1.4h-1.4zM378.4 184.4h1.4v1.4h-1.4zM375.9 189.3h1.4v1.4h-1.4zM371.0 188.6h1.4v1.4h-1.4zM333.7 205.0h1.4v1.4h-1.4zM327.9 205.9h1.4v1.4h-1.4zM405.6 164.8h1.4v1.4h-1.4zM395.3 177.6h1.4v1.4h-1.4zM373.5 189.3h1.4v1.4h-1.4zM386.1 181.7h1.4v1.4h-1.4zM401.5 170.3h1.4v1.4h-1.4zM356.3 193.8h1.4v1.4h-1.4zM406.1 164.8h1.4v1.4h-1.4zM352.4 197.1h1.4v1.4h-1.4zM342.9 200.6h1.4v1.4h-1.4zM366.7 193.4h1.4v1.4h-1.4zM407.9 163.8h1.4v1.4h-1.4zM326.6 206.1h1.4v1.4h-1.4zM386.6 181.8h1.4v1.4h-1.4zM397.8 176.5h1.4v1.4h-1.4zM400.0 170.9h1.4v1.4h-1.4zM373.1 187.2h1.4v1.4h-1.4zM380.2 181.1h1.4v1.4h-1.4zM402.3 170.2h1.4v1.4h-1.4zM368.9 193.1h1.4v1.4h-1.4zM354.4 194.5h1.4v1.4h-1.4zM360.1 194.5h1.4v1.4h-1.4zM402.8 168.0h1.4v1.4h-1.4zM334.2 203.4h1.4v1.4h-1.4zM398.7 173.9h1.4v1.4h-1.4zM326.0 204.7h1.4v1.4h-1.4zM367.3 191.8h1.4v1.4h-1.4zM398.3 173.6h1.4v1.4h-1.4zM357.2 195.0h1.4v1.4h-1.4zM377.9 186.1h1.4v1.4h-1.4zM375.4 190.0h1.4v1.4h-1.4zM358.9 193.8h1.4v1.4h-1.4zM360.5 192.5h1.4v1.4h-1.4zM393.7 177.2h1.4v1.4h-1.4zM369.3 186.6h1.4v1.4h-1.4zM323.5 203.6h1.4v1.4h-1.4zM398.0 175.6h1.4v1.4h-1.4zM343.6 203.0h1.4v1.4h-1.4zM324.5 202.8h1.4v1.4h-1.4zM390.7 177.0h1.4v1.4h-1.4zM330.1 206.5h1.4v1.4h-1.4zM395.7 174.0h1.4v1.4h-1.4zM329.6 205.3h1.4v1.4h-1.4zM353.7 196.6h1.4v1.4h-1.4zM365.8 192.0h1.4v1.4h-1.4zM367.9 188.6h1.4v1.4h-1.4zM325.3 204.0h1.4v1.4h-1.4zM400.3 170.6h1.4v1.4h-1.4zM366.7 194.5h1.4v1.4h-1.4zM359.8 191.6h1.4v1.4h-1.4zM392.9 180.2h1.4v1.4h-1.4zM339.4 200.4h1.4v1.4h-1.4zM328.1 205.7h1.4v1.4h-1.4zM359.5 195.8h1.4v1.4h-1.4zM353.7 196.2h1.4v1.4h-1.4zM347.6 198.7h1.4v1.4h-1.4zM402.8 172.7h1.4v1.4h-1.4zM321.9 208.8h1.4v1.4h-1.4zM356.2 192.6h1.4v1.4h-1.4zM337.3 202.2h1.4v1.4h-1.4zM366.9 188.5h1.4v1.4h-1.4zM363.2 195.5h1.4v1.4h-1.4zM404.2 169.3h1.4v1.4h-1.4zM398.3 171.6h1.4v1.4h-1.4zM394.2 173.1h1.4v1.4h-1.4zM381.4 183.1h1.4v1.4h-1.4zM385.7 181.9h1.4v1.4h-1.4zM386.2 182.5h1.4v1.4h-1.4zM382.2 182.6h1.4v1.4h-1.4zM342.1 199.3h1.4v1.4h-1.4zM380.7 184.5h1.4v1.4h-1.4zM407.1 167.3h1.4v1.4h-1.4zM386.1 182.7h1.4v1.4h-1.4zM355.0 196.4h1.4v1.4h-1.4zM363.9 194.9h1.4v1.4h-1.4zM360.1 194.9h1.4v1.4h-1.4zM395.0 174.3h1.4v1.4h-1.4zM371.1 188.0h1.4v1.4h-1.4zM328.0 207.7h1.4v1.4h-1.4zM346.6 194.7h1.4v1.4h-1.4zM338.5 200.6h1.4v1.4h-1.4zM399.4 173.9h1.4v1.4h-1.4zM402.9 166.8h1.4v1.4h-1.4zM396.2 175.8h1.4v1.4h-1.4zM400.0 173.8h1.4v1.4h-1.4zM341.0 201.1h1.4v1.4h-1.4zM387.9 180.5h1.4v1.4h-1.4zM350.2 197.2h1.4v1.4h-1.4zM325.7 206.2h1.4v1.4h-1.4zM334.2 204.7h1.4v1.4h-1.4zM339.5 203.4h1.4v1.4h-1.4zM348.0 197.6h1.4v1.4h-1.4zM340.6 198.9h1.4v1.4h-1.4zM398.0 170.8h1.4v1.4h-1.4zM383.0 183.5h1.4v1.4h-1.4zM348.9 197.2h1.4v1.4h-1.4zM391.8 180.3h1.4v1.4h-1.4zM370.2 191.3h1.4v1.4h-1.4zM403.4 162.6h1.4v1.4h-1.4zM344.1 200.7h1.4v1.4h-1.4zM331.3 204.2h1.4v1.4h-1.4zM402.0 170.8h1.4v1.4h-1.4zM391.5 178.0h1.4v1.4h-1.4zM406.9 166.7h1.4v1.4h-1.4zM363.7 193.9h1.4v1.4h-1.4zM375.3 186.2h1.4v1.4h-1.4zM394.7 176.0h1.4v1.4h-1.4zM398.3 172.4h1.4v1.4h-1.4zM369.3 190.5h1.4v1.4h-1.4zM406.9 166.6h1.4v1.4h-1.4zM392.1 176.9h1.4v1.4h-1.4zM323.1 204.9h1.4v1.4h-1.4zM373.1 187.6h1.4v1.4h-1.4zM343.0 200.9h1.4v1.4h-1.4zM393.4 174.8h1.4v1.4h-1.4zM351.1 198.0h1.4v1.4h-1.4zM338.9 201.0h1.4v1.4h-1.4zM366.2 194.0h1.4v1.4h-1.4zM342.2 199.5h1.4v1.4h-1.4zM368.3 190.0h1.4v1.4h-1.4zM322.3 207.0h1.4v1.4h-1.4zM346.8 199.0h1.4v1.4h-1.4zM380.2 184.3h1.4v1.4h-1.4zM386.1 182.3h1.4v1.4h-1.4zM337.2 202.9h1.4v1.4h-1.4zM398.1 173.7h1.4v1.4h-1.4zM405.7 166.8h1.4v1.4h-1.4zM380.8 183.7h1.4v1.4h-1.4zM401.0 170.6h1.4v1.4h-1.4zM321.2 205.6h1.4v1.4h-1.4zM345.4 198.2h1.4v1.4h-1.4zM368.1 191.3h1.4v1.4h-1.4zM393.9 174.2h1.4v1.4h-1.4zM330.8 203.1h1.4v1.4h-1.4zM405.9 169.7h1.4v1.4h-1.4zM397.4 177.3h1.4v1.4h-1.4zM390.0 177.9h1.4v1.4h-1.4zM385.8 180.4h1.4v1.4h-1.4zM342.4 199.6h1.4v1.4h-1.4zM404.6 172.4h1.4v1.4h-1.4zM319.9 204.7h1.4v1.4h-1.4zM348.8 196.8h1.4v1.4h-1.4zM401.1 169.6h1.4v1.4h-1.4zM392.8 177.1h1.4v1.4h-1.4zM357.0 197.3h1.4v1.4h-1.4zM389.5 175.0h1.4v1.4h-1.4zM339.5 202.3h1.4v1.4h-1.4zM350.4 195.6h1.4v1.4h-1.4zM337.9 203.0h1.4v1.4h-1.4zM375.0 191.1h1.4v1.4h-1.4z" fill="#1cff1c"/><path d="M298.8 209.3h1.4v1.4h-1.4zM303.4 206.1h1.4v1.4h-1.4zM298.9 192.1h1.4v1.4h-1.4zM292.8 179.9h1.4v1.4h-1.4zM300.5 193.0h1.4v1.4h-1.4zM294.6 203.6h1.4v1.4h-1.4zM294.9 216.1h1.4v1.4h-1.4zM312.3 212.1h1.4v1.4h-1.4zM278.1 185.4h1.4v1.4h-1.4zM287.1 210.9h1.4v1.4h-1.4zM293.0 206.2h1.4v1.4h-1.4zM280.5 210.8h1.4v1.4h-1.4zM268.9 194.7h1.4v1.4h-1.4zM290.3 210.9h1.4v1.4h-1.4zM308.1 215.3h1.4v1.4h-1.4zM259.4 197.4h1.4v1.4h-1.4zM288.1 222.7h1.4v1.4h-1.4zM264.9 204.1h1.4v1.4h-1.4zM281.5 207.3h1.4v1.4h-1.4zM287.5 201.2h1.4v1.4h-1.4zM295.6 203.5h1.4v1.4h-1.4zM294.5 211.3h1.4v1.4h-1.4zM278.0 208.0h1.4v1.4h-1.4zM277.6 206.2h1.4v1.4h-1.4zM288.9 199.0h1.4v1.4h-1.4zM276.0 202.8h1.4v1.4h-1.4zM287.6 208.0h1.4v1.4h-1.4zM287.7 198.8h1.4v1.4h-1.4zM280.0 196.5h1.4v1.4h-1.4zM294.4 205.0h1.4v1.4h-1.4zM279.3 203.7h1.4v1.4h-1.4zM295.1 203.4h1.4v1.4h-1.4zM276.5 197.1h1.4v1.4h-1.4zM281.9 208.8h1.4v1.4h-1.4zM273.2 208.7h1.4v1.4h-1.4zM285.2 213.1h1.4v1.4h-1.4zM286.9 203.7h1.4v1.4h-1.4zM303.4 196.6h1.4v1.4h-1.4zM283.4 199.3h1.4v1.4h-1.4zM293.0 193.9h1.4v1.4h-1.4z" fill="#1cff1c"/><path d="M278.0 197.6h1.4v1.4h-1.4zM279.0 195.5h1.4v1.4h-1.4zM275.1 191.5h1.4v1.4h-1.4zM281.0 197.4h1.4v1.4h-1.4zM286.4 200.7h1.4v1.4h-1.4zM286.4 205.4h1.4v1.4h-1.4zM284.4 200.9h1.4v1.4h-1.4zM282.2 194.6h1.4v1.4h-1.4zM280.1 201.2h1.4v1.4h-1.4zM280.9 192.9h1.4v1.4h-1.4zM280.6 203.2h1.4v1.4h-1.4zM282.8 212.3h1.4v1.4h-1.4zM283.5 200.7h1.4v1.4h-1.4zM281.9 202.4h1.4v1.4h-1.4zM287.0 189.5h1.4v1.4h-1.4zM291.2 199.8h1.4v1.4h-1.4zM281.8 198.6h1.4v1.4h-1.4zM282.7 201.4h1.4v1.4h-1.4zM283.0 201.4h1.4v1.4h-1.4zM280.1 204.8h1.4v1.4h-1.4zM278.7 193.5h1.4v1.4h-1.4zM273.9 203.1h1.4v1.4h-1.4zM286.8 201.3h1.4v1.4h-1.4zM282.6 197.1h1.4v1.4h-1.4zM284.1 203.8h1.4v1.4h-1.4zM278.4 203.8h1.4v1.4h-1.4zM273.9 202.8h1.4v1.4h-1.4zM284.9 198.6h1.4v1.4h-1.4zM283.3 205.3h1.4v1.4h-1.4zM274.3 204.8h1.4v1.4h-1.4zM281.2 193.1h1.4v1.4h-1.4zM283.8 204.6h1.4v1.4h-1.4zM285.0 195.6h1.4v1.4h-1.4zM279.9 198.9h1.4v1.4h-1.4zM284.5 197.1h1.4v1.4h-1.4zM281.5 205.6h1.4v1.4h-1.4zM276.8 200.1h1.4v1.4h-1.4zM281.3 192.3h1.4v1.4h-1.4zM282.5 206.2h1.4v1.4h-1.4zM284.7 201.5h1.4v1.4h-1.4zM279.1 206.8h1.4v1.4h-1.4zM284.9 200.8h1.4v1.4h-1.4zM283.1 197.4h1.4v1.4h-1.4zM285.1 200.9h1.4v1.4h-1.4zM281.0 205.0h1.4v1.4h-1.4z" fill="#1cff1c"/><path d="M327.6 199.7h1.4v1.4h-1.4zM318.8 203.2h1.4v1.4h-1.4zM325.3 209.9h1.4v1.4h-1.4zM321.2 205.8h1.4v1.4h-1.4zM324.4 200.4h1.4v1.4h-1.4zM329.3 197.2h1.4v1.4h-1.4zM316.1 206.4h1.4v1.4h-1.4zM327.6 201.4h1.4v1.4h-1.4zM331.5 205.1h1.4v1.4h-1.4zM333.5 195.8h1.4v1.4h-1.4zM312.6 201.4h1.4v1.4h-1.4zM338.0 201.6h1.4v1.4h-1.4zM324.8 208.1h1.4v1.4h-1.4zM332.0 211.5h1.4v1.4h-1.4zM332.9 200.2h1.4v1.4h-1.4zM311.3 202.9h1.4v1.4h-1.4zM335.0 206.9h1.4v1.4h-1.4zM327.2 199.7h1.4v1.4h-1.4zM328.8 211.8h1.4v1.4h-1.4zM325.2 206.3h1.4v1.4h-1.4zM328.2 208.3h1.4v1.4h-1.4zM318.6 200.0h1.4v1.4h-1.4zM318.4 208.6h1.4v1.4h-1.4zM314.3 207.5h1.4v1.4h-1.4zM329.2 209.0h1.4v1.4h-1.4zM315.3 214.5h1.4v1.4h-1.4zM326.6 204.7h1.4v1.4h-1.4zM323.2 201.7h1.4v1.4h-1.4zM329.4 201.3h1.4v1.4h-1.4zM329.3 200.6h1.4v1.4h-1.4zM315.0 200.7h1.4v1.4h-1.4zM318.5 200.3h1.4v1.4h-1.4zM319.7 199.0h1.4v1.4h-1.4zM318.5 210.4h1.4v1.4h-1.4zM306.4 208.7h1.4v1.4h-1.4z" fill="#1cff1c"/><path d="M413.4 149.8h1.4v1.4h-1.4zM409.6 156.0h1.4v1.4h-1.4zM412.1 152.1h1.4v1.4h-1.4zM422.3 127.5h1.4v1.4h-1.4zM412.7 151.8h1.4v1.4h-1.4zM422.6 131.1h1.4v1.4h-1.4zM412.5 154.6h1.4v1.4h-1.4zM404.6 173.0h1.4v1.4h-1.4zM406.2 169.3h1.4v1.4h-1.4zM415.0 147.6h1.4v1.4h-1.4zM404.6 170.9h1.4v1.4h-1.4zM419.0 136.8h1.4v1.4h-1.4zM406.6 165.4h1.4v1.4h-1.4zM406.6 169.1h1.4v1.4h-1.4zM408.0 166.2h1.4v1.4h-1.4zM411.7 153.8h1.4v1.4h-1.4zM409.3 161.8h1.4v1.4h-1.4zM413.9 145.8h1.4v1.4h-1.4zM420.2 131.7h1.4v1.4h-1.4zM409.7 153.6h1.4v1.4h-1.4zM413.2 145.8h1.4v1.4h-1.4zM407.0 166.1h1.4v1.4h-1.4zM414.0 151.4h1.4v1.4h-1.4zM412.3 159.6h1.4v1.4h-1.4zM418.3 139.5h1.4v1.4h-1.4zM411.2 156.2h1.4v1.4h-1.4zM417.7 141.8h1.4v1.4h-1.4zM421.8 129.8h1.4v1.4h-1.4zM406.9 163.4h1.4v1.4h-1.4zM404.0 172.6h1.4v1.4h-1.4zM405.9 171.8h1.4v1.4h-1.4zM414.1 147.3h1.4v1.4h-1.4zM413.0 152.0h1.4v1.4h-1.4zM421.4 130.0h1.4v1.4h-1.4zM418.8 136.4h1.4v1.4h-1.4zM409.4 157.3h1.4v1.4h-1.4zM417.6 138.1h1.4v1.4h-1.4zM414.4 146.2h1.4v1.4h-1.4zM413.5 148.2h1.4v1.4h-1.4zM407.4 166.3h1.4v1.4h-1.4zM415.7 143.8h1.4v1.4h-1.4zM422.4 129.7h1.4v1.4h-1.4zM422.4 129.9h1.4v1.4h-1.4zM406.2 169.5h1.4v1.4h-1.4zM419.7 132.4h1.4v1.4h-1.4zM417.5 140.8h1.4v1.4h-1.4zM408.9 164.4h1.4v1.4h-1.4zM406.8 167.9h1.4v1.4h-1.4zM420.8 134.8h1.4v1.4h-1.4zM415.8 142.6h1.4v1.4h-1.4zM410.9 155.3h1.4v1.4h-1.4zM412.2 155.1h1.4v1.4h-1.4zM418.4 137.9h1.4v1.4h-1.4zM408.7 164.1h1.4v1.4h-1.4zM411.5 156.0h1.4v1.4h-1.4zM413.7 146.3h1.4v1.4h-1.4zM412.6 157.3h1.4v1.4h-1.4zM411.7 156.6h1.4v1.4h-1.4zM416.1 142.3h1.4v1.4h-1.4z" fill="#1cff1c"/><path d="M362.7 190.5h1.4v1.4h-1.4zM355.4 180.9h1.4v1.4h-1.4zM372.8 226.5h1.4v1.4h-1.4zM364.5 192.8h1.4v1.4h-1.4zM368.4 209.0h1.4v1.4h-1.4zM366.8 214.1h1.4v1.4h-1.4zM369.3 211.9h1.4v1.4h-1.4zM372.8 221.5h1.4v1.4h-1.4zM352.6 170.3h1.4v1.4h-1.4zM370.3 214.6h1.4v1.4h-1.4zM369.6 214.1h1.4v1.4h-1.4zM353.3 171.7h1.4v1.4h-1.4zM368.6 211.1h1.4v1.4h-1.4zM366.3 210.2h1.4v1.4h-1.4zM372.9 222.8h1.4v1.4h-1.4zM351.8 170.1h1.4v1.4h-1.4zM353.3 174.0h1.4v1.4h-1.4zM356.1 174.9h1.4v1.4h-1.4zM367.6 213.1h1.4v1.4h-1.4zM371.0 216.1h1.4v1.4h-1.4zM351.6 169.4h1.4v1.4h-1.4zM372.2 225.1h1.4v1.4h-1.4zM367.0 202.1h1.4v1.4h-1.4zM371.6 220.4h1.4v1.4h-1.4zM353.3 167.0h1.4v1.4h-1.4zM359.4 185.0h1.4v1.4h-1.4zM370.6 216.8h1.4v1.4h-1.4zM357.7 179.6h1.4v1.4h-1.4zM370.5 217.9h1.4v1.4h-1.4zM371.5 222.1h1.4v1.4h-1.4zM357.8 184.5h1.4v1.4h-1.4zM357.0 178.7h1.4v1.4h-1.4zM361.8 191.9h1.4v1.4h-1.4zM353.4 167.7h1.4v1.4h-1.4zM363.7 192.0h1.4v1.4h-1.4zM353.1 167.4h1.4v1.4h-1.4zM367.6 211.5h1.4v1.4h-1.4zM365.7 197.6h1.4v1.4h-1.4zM368.9 204.5h1.4v1.4h-1.4zM366.8 202.0h1.4v1.4h-1.4zM356.7 179.7h1.4v1.4h-1.4zM355.1 173.3h1.4v1.4h-1.4zM373.8 226.8h1.4v1.4h-1.4zM361.9 188.2h1.4v1.4h-1.4zM367.8 200.5h1.4v1.4h-1.4zM366.5 210.0h1.4v1.4h-1.4zM370.5 218.2h1.4v1.4h-1.4zM363.9 195.9h1.4v1.4h-1.4zM357.5 181.1h1.4v1.4h-1.4zM353.7 169.3h1.4v1.4h-1.4zM364.5 190.8h1.4v1.4h-1.4zM371.9 224.7h1.4v1.4h-1.4zM366.4 199.0h1.4v1.4h-1.4zM352.4 168.7h1.4v1.4h-1.4zM352.9 170.7h1.4v1.4h-1.4zM364.0 191.8h1.4v1.4h-1.4zM366.8 198.3h1.4v1.4h-1.4zM353.5 174.2h1.4v1.4h-1.4zM366.4 198.1h1.4v1.4h-1.4zM360.1 185.4h1.4v1.4h-1.4zM364.9 196.6h1.4v1.4h-1.4zM371.2 226.4h1.4v1.4h-1.4zM372.3 231.2h1.4v1.4h-1.4zM372.3 226.7h1.4v1.4h-1.4zM353.3 174.2h1.4v1.4h-1.4zM353.4 170.8h1.4v1.4h-1.4zM372.4 219.4h1.4v1.4h-1.4zM369.8 215.3h1.4v1.4h-1.4zM369.4 214.3h1.4v1.4h-1.4zM370.5 215.2h1.4v1.4h-1.4zM372.7 225.9h1.4v1.4h-1.4zM368.9 216.7h1.4v1.4h-1.4zM352.1 167.6h1.4v1.4h-1.4zM365.5 194.0h1.4v1.4h-1.4zM366.3 201.4h1.4v1.4h-1.4zM371.9 222.0h1.4v1.4h-1.4zM371.9 230.5h1.4v1.4h-1.4zM372.7 228.6h1.4v1.4h-1.4zM368.0 207.5h1.4v1.4h-1.4zM368.1 203.0h1.4v1.4h-1.4zM359.1 184.1h1.4v1.4h-1.4zM354.0 173.2h1.4v1.4h-1.4zM354.6 173.5h1.4v1.4h-1.4zM360.4 183.7h1.4v1.4h-1.4zM367.2 204.1h1.4v1.4h-1.4zM366.6 211.2h1.4v1.4h-1.4zM354.1 174.7h1.4v1.4h-1.4zM360.6 186.9h1.4v1.4h-1.4zM360.6 189.1h1.4v1.4h-1.4zM372.9 227.3h1.4v1.4h-1.4zM368.6 212.0h1.4v1.4h-1.4zM372.7 215.1h1.4v1.4h-1.4zM372.8 224.5h1.4v1.4h-1.4zM366.9 211.2h1.4v1.4h-1.4zM356.3 176.8h1.4v1.4h-1.4zM371.2 219.3h1.4v1.4h-1.4zM367.1 202.1h1.4v1.4h-1.4zM362.6 188.3h1.4v1.4h-1.4zM355.4 179.7h1.4v1.4h-1.4zM367.9 197.8h1.4v1.4h-1.4zM361.0 186.5h1.4v1.4h-1.4zM373.2 230.0h1.4v1.4h-1.4zM352.2 168.0h1.4v1.4h-1.4zM367.8 212.5h1.4v1.4h-1.4zM371.5 218.7h1.4v1.4h-1.4zM366.4 197.6h1.4v1.4h-1.4zM372.7 218.0h1.4v1.4h-1.4zM367.9 207.4h1.4v1.4h-1.4zM355.3 171.3h1.4v1.4h-1.4zM357.2 177.5h1.4v1.4h-1.4zM358.0 181.7h1.4v1.4h-1.4zM361.3 186.3h1.4v1.4h-1.4zM372.4 231.2h1.4v1.4h-1.4zM366.7 201.2h1.4v1.4h-1.4zM366.7 205.1h1.4v1.4h-1.4zM373.2 227.0h1.4v1.4h-1.4zM356.4 178.3h1.4v1.4h-1.4zM355.1 179.3h1.4v1.4h-1.4zM365.7 195.1h1.4v1.4h-1.4zM367.9 204.8h1.4v1.4h-1.4zM367.9 209.4h1.4v1.4h-1.4zM369.6 215.7h1.4v1.4h-1.4zM371.2 224.6h1.4v1.4h-1.4zM367.2 202.3h1.4v1.4h-1.4zM354.0 174.3h1.4v1.4h-1.4zM370.6 219.0h1.4v1.4h-1.4zM352.0 170.9h1.4v1.4h-1.4zM353.0 171.7h1.4v1.4h-1.4zM371.8 219.2h1.4v1.4h-1.4zM373.1 227.3h1.4v1.4h-1.4zM367.2 204.0h1.4v1.4h-1.4zM374.3 226.5h1.4v1.4h-1.4zM368.1 203.6h1.4v1.4h-1.4zM352.6 170.1h1.4v1.4h-1.4zM367.2 204.9h1.4v1.4h-1.4z" fill="#1cff1c"/><path d="M393.5 195.7h1.4v1.4h-1.4zM400.6 192.3h1.4v1.4h-1.4zM398.3 194.9h1.4v1.4h-1.4zM387.2 193.2h1.4v1.4h-1.4zM392.2 194.5h1.4v1.4h-1.4zM427.2 190.5h1.4v1.4h-1.4zM404.1 193.4h1.4v1.4h-1.4zM386.8 194.6h1.4v1.4h-1.4zM386.8 192.8h1.4v1.4h-1.4zM387.1 197.0h1.4v1.4h-1.4zM390.9 191.4h1.4v1.4h-1.4zM414.2 192.0h1.4v1.4h-1.4zM417.3 192.5h1.4v1.4h-1.4zM389.7 194.9h1.4v1.4h-1.4zM385.3 194.0h1.4v1.4h-1.4zM395.0 194.1h1.4v1.4h-1.4zM400.6 191.4h1.4v1.4h-1.4zM411.7 194.5h1.4v1.4h-1.4zM398.4 191.8h1.4v1.4h-1.4zM400.5 193.0h1.4v1.4h-1.4zM412.7 191.8h1.4v1.4h-1.4zM416.4 191.1h1.4v1.4h-1.4zM411.5 194.4h1.4v1.4h-1.4zM427.8 191.0h1.4v1.4h-1.4zM394.2 193.6h1.4v1.4h-1.4zM398.4 191.8h1.4v1.4h-1.4zM420.7 191.0h1.4v1.4h-1.4zM415.0 192.1h1.4v1.4h-1.4zM382.1 193.2h1.4v1.4h-1.4zM421.6 192.1h1.4v1.4h-1.4zM415.8 191.9h1.4v1.4h-1.4zM416.7 192.4h1.4v1.4h-1.4zM398.3 192.8h1.4v1.4h-1.4zM395.7 192.9h1.4v1.4h-1.4zM417.8 191.2h1.4v1.4h-1.4zM400.2 192.9h1.4v1.4h-1.4zM420.7 193.2h1.4v1.4h-1.4zM414.7 194.2h1.4v1.4h-1.4zM397.6 195.1h1.4v1.4h-1.4zM388.8 193.5h1.4v1.4h-1.4zM422.5 189.3h1.4v1.4h-1.4zM394.1 194.3h1.4v1.4h-1.4zM423.8 191.3h1.4v1.4h-1.4zM413.5 192.8h1.4v1.4h-1.4zM418.5 189.7h1.4v1.4h-1.4zM418.3 189.6h1.4v1.4h-1.4zM416.7 191.8h1.4v1.4h-1.4zM383.5 195.6h1.4v1.4h-1.4zM384.3 197.0h1.4v1.4h-1.4zM408.2 192.6h1.4v1.4h-1.4zM412.0 193.5h1.4v1.4h-1.4zM381.1 196.2h1.4v1.4h-1.4zM408.6 191.4h1.4v1.4h-1.4zM420.5 192.3h1.4v1.4h-1.4zM403.9 193.8h1.4v1.4h-1.4zM414.1 192.2h1.4v1.4h-1.4zM414.5 194.4h1.4v1.4h-1.4zM428.6 191.0h1.4v1.4h-1.4zM414.5 194.5h1.4v1.4h-1.4zM422.6 196.4h1.4v1.4h-1.4zM405.8 192.0h1.4v1.4h-1.4zM415.7 192.0h1.4v1.4h-1.4zM408.8 194.2h1.4v1.4h-1.4zM384.8 192.9h1.4v1.4h-1.4zM395.2 195.1h1.4v1.4h-1.4zM423.6 190.9h1.4v1.4h-1.4zM415.3 192.2h1.4v1.4h-1.4zM380.4 195.1h1.4v1.4h-1.4zM424.2 192.7h1.4v1.4h-1.4zM416.1 190.5h1.4v1.4h-1.4zM408.1 193.3h1.4v1.4h-1.4zM391.1 195.6h1.4v1.4h-1.4zM389.2 193.4h1.4v1.4h-1.4zM404.5 194.1h1.4v1.4h-1.4zM421.9 192.6h1.4v1.4h-1.4zM392.6 196.2h1.4v1.4h-1.4zM406.2 192.8h1.4v1.4h-1.4zM390.3 194.3h1.4v1.4h-1.4zM424.4 192.8h1.4v1.4h-1.4zM391.4 191.7h1.4v1.4h-1.4zM417.5 191.0h1.4v1.4h-1.4zM411.8 193.6h1.4v1.4h-1.4zM381.6 197.6h1.4v1.4h-1.4zM417.7 192.3h1.4v1.4h-1.4z" fill="#1cff1c"/><path d="M415.3 175.3h1.4v1.4h-1.4zM423.5 168.0h1.4v1.4h-1.4zM418.5 181.4h1.4v1.4h-1.4zM426.0 175.4h1.4v1.4h-1.4zM423.6 169.1h1.4v1.4h-1.4zM426.6 168.6h1.4v1.4h-1.4zM420.7 176.6h1.4v1.4h-1.4zM425.0 171.2h1.4v1.4h-1.4zM427.0 182.6h1.4v1.4h-1.4zM425.0 169.4h1.4v1.4h-1.4zM427.3 171.7h1.4v1.4h-1.4zM417.2 162.0h1.4v1.4h-1.4zM419.8 162.5h1.4v1.4h-1.4zM426.3 177.3h1.4v1.4h-1.4zM423.4 184.6h1.4v1.4h-1.4zM425.6 172.5h1.4v1.4h-1.4zM417.9 162.9h1.4v1.4h-1.4zM424.4 184.2h1.4v1.4h-1.4zM430.9 185.4h1.4v1.4h-1.4zM418.2 164.1h1.4v1.4h-1.4zM416.2 171.3h1.4v1.4h-1.4zM423.8 175.2h1.4v1.4h-1.4zM417.5 168.6h1.4v1.4h-1.4zM428.1 165.1h1.4v1.4h-1.4zM428.3 171.0h1.4v1.4h-1.4zM417.5 184.8h1.4v1.4h-1.4zM428.6 184.3h1.4v1.4h-1.4zM429.5 168.6h1.4v1.4h-1.4zM422.6 170.1h1.4v1.4h-1.4zM426.9 172.2h1.4v1.4h-1.4z" fill="#1cff1c"/><path d="M420.2 128.0h1.4v1.4h-1.4zM421.0 127.9h1.4v1.4h-1.4zM417.8 129.6h1.4v1.4h-1.4zM418.6 132.8h1.4v1.4h-1.4zM422.0 123.2h1.4v1.4h-1.4zM414.7 141.7h1.4v1.4h-1.4zM420.5 128.3h1.4v1.4h-1.4zM416.7 137.7h1.4v1.4h-1.4zM414.2 143.9h1.4v1.4h-1.4zM422.9 124.2h1.4v1.4h-1.4zM417.0 135.5h1.4v1.4h-1.4zM415.3 144.6h1.4v1.4h-1.4zM414.5 143.0h1.4v1.4h-1.4zM419.7 127.5h1.4v1.4h-1.4zM415.9 139.4h1.4v1.4h-1.4zM416.3 137.2h1.4v1.4h-1.4zM418.6 128.6h1.4v1.4h-1.4zM417.6 132.1h1.4v1.4h-1.4zM421.4 125.5h1.4v1.4h-1.4zM420.2 126.4h1.4v1.4h-1.4zM420.1 125.1h1.4v1.4h-1.4zM416.4 132.4h1.4v1.4h-1.4zM419.6 128.0h1.4v1.4h-1.4zM420.7 130.5h1.4v1.4h-1.4zM420.7 125.0h1.4v1.4h-1.4zM415.4 137.5h1.4v1.4h-1.4zM416.5 138.5h1.4v1.4h-1.4zM414.1 142.4h1.4v1.4h-1.4zM422.1 124.4h1.4v1.4h-1.4zM422.6 123.9h1.4v1.4h-1.4zM418.7 128.6h1.4v1.4h-1.4zM417.5 133.4h1.4v1.4h-1.4zM423.9 125.8h1.4v1.4h-1.4zM418.0 133.9h1.4v1.4h-1.4zM422.7 122.2h1.4v1.4h-1.4zM418.8 130.8h1.4v1.4h-1.4z" fill="#1cff1c"/><path d="M353.1 251.5h1.4v1.4h-1.4zM364.9 254.0h1.4v1.4h-1.4zM385.4 230.3h1.4v1.4h-1.4zM367.8 236.1h1.4v1.4h-1.4zM388.3 236.1h1.4v1.4h-1.4zM381.3 251.0h1.4v1.4h-1.4zM376.9 240.9h1.4v1.4h-1.4zM391.4 231.9h1.4v1.4h-1.4zM379.2 240.8h1.4v1.4h-1.4zM378.5 254.4h1.4v1.4h-1.4zM379.1 227.0h1.4v1.4h-1.4zM372.2 239.4h1.4v1.4h-1.4zM381.4 249.2h1.4v1.4h-1.4zM373.9 243.0h1.4v1.4h-1.4zM391.6 227.2h1.4v1.4h-1.4zM375.9 226.6h1.4v1.4h-1.4zM371.8 229.4h1.4v1.4h-1.4zM376.6 233.2h1.4v1.4h-1.4zM361.9 228.5h1.4v1.4h-1.4zM376.5 244.3h1.4v1.4h-1.4zM378.1 244.7h1.4v1.4h-1.4zM368.2 230.7h1.4v1.4h-1.4zM388.7 217.5h1.4v1.4h-1.4zM376.9 228.4h1.4v1.4h-1.4zM384.6 246.6h1.4v1.4h-1.4zM361.9 235.6h1.4v1.4h-1.4zM356.4 224.0h1.4v1.4h-1.4zM382.5 220.1h1.4v1.4h-1.4zM373.2 227.0h1.4v1.4h-1.4zM372.5 230.2h1.4v1.4h-1.4zM371.6 231.5h1.4v1.4h-1.4zM383.4 236.6h1.4v1.4h-1.4zM368.3 235.1h1.4v1.4h-1.4zM371.9 257.0h1.4v1.4h-1.4zM370.9 243.1h1.4v1.4h-1.4zM375.5 250.0h1.4v1.4h-1.4zM377.8 263.2h1.4v1.4h-1.4zM367.3 231.5h1.4v1.4h-1.4zM368.4 246.1h1.4v1.4h-1.4zM375.8 232.1h1.4v1.4h-1.4z" fill="#1cff1c"/><path d="M344.8 252.5 L344.9 252.5 L344.9 252.4 L345.0 252.4 L345.0 252.4 L345.1 252.3 L345.2 252.3 L345.2 252.3 L345.3 252.2 L345.4 252.2 L345.5 252.2 L345.5 252.1 L345.6 252.1 L345.7 252.0 L345.8 252.0 L345.9 252.0 L345.9 251.9 L346.0 251.9 L346.1 251.8 L346.2 251.8 L346.3 251.8 L346.4 251.7 L346.5 251.7 L346.6 251.6 L346.7 251.6 L346.8 251.5 L346.9 251.5 L347.0 251.4 L347.1 251.4 L347.2 251.3 L347.3 251.3 L347.4 251.2 L347.5 251.2 L347.6 251.1 L347.7 251.1 L347.8 251.0 L347.9 250.9 L348.0 250.9 L348.1 250.8 L348.2 250.8 L348.3 250.7 L348.5 250.7 L348.6 250.6 L348.7 250.5 L348.8 250.5 L348.9 250.4 L349.0 250.4 L349.2 250.3 L349.3 250.2 L349.4 250.2 L349.5 250.1 L349.7 250.1 L349.8 250.0 L349.9 249.9 L350.0 249.9 L350.2 249.8 L350.3 249.7 L350.4 249.7 L350.5 249.6 L350.7 249.5 L350.8 249.5 L350.9 249.4 L351.1 249.3 L351.2 249.3 L351.3 249.2 L351.5 249.1 L351.6 249.1 L351.7 249.0 L351.9 248.9 L352.0 248.9 L352.2 248.8 L352.3 248.7 L352.4 248.7 L352.6 248.6 L352.7 248.5 L352.9 248.5 L353.0 248.4 L353.1 248.3 L353.3 248.2 L353.4 248.2 L353.6 248.1 L353.7 248.0 L353.8 248.0 L354.0 247.9 L354.1 247.8 L354.3 247.7 L354.4 247.7 L354.6 247.6 L354.7 247.5 L354.9 247.5 L355.0 247.4 L355.1 247.3 L355.3 247.2 L355.4 247.2 L355.6 247.1 L355.7 247.0 L355.9 246.9 L356.0 246.9 L356.2 246.8 L356.3 246.7 L356.4 246.6 L356.6 246.6 L356.7 246.5 L356.9 246.4 L357.0 246.4 L357.2 246.3 L357.3 246.2 L357.5 246.1 L357.6 246.1 L357.8 246.0 L357.9 245.9 L358.0 245.8 L358.2 245.8 L358.3 245.7 L358.5 245.6 L358.6 245.6 L358.8 245.5 L358.9 245.4 L359.1 245.3 L359.2 245.3 L359.3 245.2 L359.5 245.1 L359.6 245.1 L359.8 245.0 L359.9 244.9 L360.0 244.8 L360.2 244.8 L360.3 244.7 L360.5 244.6 L360.6 244.6 L360.7 244.5 L360.9 244.4 L361.0 244.4 L361.2 244.3 L361.3 244.2 L361.4 244.2 L361.6 244.1 L361.7 244.0 L361.8 244.0 L362.0 243.9 L362.1 243.8 L362.2 243.8 L362.4 243.7 L362.5 243.6 L362.6 243.6 L362.7 243.5 L362.9 243.4 L363.0 243.4 L363.1 243.3 L363.2 243.2 L363.4 243.2 L363.5 243.1 L363.6 243.1 L363.7 243.0 L363.9 242.9 L364.0 242.9 L364.1 242.8 L364.2 242.8 L364.3 242.7 L364.4 242.6 L364.6 242.6 L364.7 242.5 L364.8 242.5 L364.9 242.4 L365.0 242.4 L365.1 242.3 L365.2 242.2 L365.3 242.2 L365.4 242.1 L365.5 242.1 L365.6 242.0 L365.7 242.0 L365.8 241.9 L365.9 241.9 L366.0 241.8 L366.1 241.8 L366.2 241.7 L366.3 241.7 L366.4 241.6 L366.5 241.6 L366.6 241.5 L366.7 241.5 L366.8 241.5 L366.9 241.4 L367.0 241.4 L367.0 241.3 L367.1 241.3 L367.2 241.3 L367.3 241.2 L367.4 241.2 L367.4 241.1 L367.5 241.1 L367.6 241.1 L367.7 241.0 L367.7 241.0 L367.8 241.0 L367.9 240.9 L367.9 240.9 L368.0 240.9 L368.0 240.8 L368.1 240.8" stroke="#ff1010" stroke-width="2.2" fill="none" stroke-linejoin="round"/><path d="M368.1 240.8 L368.2 240.8 L368.2 240.9 L368.3 240.9 L368.3 241.0 L368.4 241.0 L368.5 241.0 L368.5 241.1 L368.6 241.1 L368.7 241.2 L368.7 241.2 L368.8 241.3 L368.9 241.3 L368.9 241.4 L369.0 241.4 L369.1 241.5 L369.2 241.5 L369.3 241.6 L369.3 241.6 L369.4 241.7 L369.5 241.7 L369.6 241.8 L369.7 241.8 L369.8 241.9 L369.8 242.0 L369.9 242.0 L370.0 242.1 L370.1 242.1 L370.2 242.2 L370.3 242.3 L370.4 242.3 L370.5 242.4 L370.6 242.5 L370.7 242.5 L370.8 242.6 L370.9 242.7 L371.0 242.7 L371.1 242.8 L371.2 242.9 L371.3 242.9 L371.4 243.0 L371.5 243.1 L371.6 243.2 L371.8 243.2 L371.9 243.3 L372.0 243.4 L372.1 243.5 L372.2 243.5 L372.3 243.6 L372.4 243.7 L372.5 243.8 L372.7 243.8 L372.8 243.9 L372.9 244.0 L373.0 244.1 L373.1 244.2 L373.3 244.2 L373.4 244.3 L373.5 244.4 L373.6 244.5 L373.8 244.6 L373.9 244.6 L374.0 244.7 L374.1 244.8 L374.3 244.9 L374.4 245.0 L374.5 245.1 L374.6 245.2 L374.8 245.2 L374.9 245.3 L375.0 245.4 L375.1 245.5 L375.3 245.6 L375.4 245.7 L375.5 245.8 L375.7 245.8 L375.8 245.9 L375.9 246.0 L376.1 246.1 L376.2 246.2 L376.3 246.3 L376.5 246.4 L376.6 246.5 L376.7 246.6 L376.9 246.6 L377.0 246.7 L377.1 246.8 L377.3 246.9 L377.4 247.0 L377.5 247.1 L377.7 247.2 L377.8 247.3 L378.0 247.4 L378.1 247.5 L378.2 247.6 L378.4 247.6 L378.5 247.7 L378.6 247.8 L378.8 247.9 L378.9 248.0 L379.1 248.1 L379.2 248.2 L379.3 248.3 L379.5 248.4 L379.6 248.5 L379.7 248.6 L379.9 248.6 L380.0 248.7 L380.1 248.8 L380.3 248.9 L380.4 249.0 L380.6 249.1 L380.7 249.2 L380.8 249.3 L381.0 249.4 L381.1 249.5 L381.2 249.6 L381.4 249.6 L381.5 249.7 L381.6 249.8 L381.8 249.9 L381.9 250.0 L382.0 250.1 L382.2 250.2 L382.3 250.3 L382.4 250.4 L382.6 250.4 L382.7 250.5 L382.8 250.6 L383.0 250.7 L383.1 250.8 L383.2 250.9 L383.3 251.0 L383.5 251.0 L383.6 251.1 L383.7 251.2 L383.8 251.3 L384.0 251.4 L384.1 251.5 L384.2 251.6 L384.3 251.6 L384.5 251.7 L384.6 251.8 L384.7 251.9 L384.8 252.0 L385.0 252.0 L385.1 252.1 L385.2 252.2 L385.3 252.3 L385.4 252.4 L385.6 252.4 L385.7 252.5 L385.8 252.6 L385.9 252.7 L386.0 252.7 L386.1 252.8 L386.2 252.9 L386.3 253.0 L386.5 253.0 L386.6 253.1 L386.7 253.2 L386.8 253.3 L386.9 253.3 L387.0 253.4 L387.1 253.5 L387.2 253.5 L387.3 253.6 L387.4 253.7 L387.5 253.7 L387.6 253.8 L387.7 253.9 L387.8 253.9 L387.9 254.0 L388.0 254.1 L388.1 254.1 L388.2 254.2 L388.3 254.2 L388.3 254.3 L388.4 254.4 L388.5 254.4 L388.6 254.5 L388.7 254.5 L388.8 254.6 L388.8 254.6 L388.9 254.7 L389.0 254.7 L389.1 254.8 L389.2 254.8 L389.2 254.9 L389.3 254.9 L389.4 255.0 L389.4 255.0 L389.5 255.1 L389.6 255.1 L389.6 255.2 L389.7 255.2 L389.8 255.2 L389.8 255.3 L389.9 255.3 L389.9 255.4 L390.0 255.4" stroke="#22ee22" stroke-width="2.2" fill="none" stroke-linejoin="round"/><path d="M368.8 214.6 L368.8 214.7 L368.8 214.7 L368.8 214.8 L368.8 214.8 L368.8 214.9 L368.8 215.0 L368.8 215.0 L368.8 215.1 L368.8 215.2 L368.8 215.2 L368.8 215.3 L368.8 215.4 L368.8 215.4 L368.8 215.5 L368.8 215.6 L368.8 215.7 L368.8 215.8 L368.8 215.8 L368.8 215.9 L368.8 216.0 L368.8 216.1 L368.8 216.2 L368.8 216.3 L368.8 216.3 L368.8 216.4 L368.8 216.5 L368.8 216.6 L368.8 216.7 L368.8 216.8 L368.8 216.9 L368.8 217.0 L368.8 217.1 L368.8 217.2 L368.8 217.3 L368.8 217.4 L368.8 217.5 L368.8 217.6 L368.8 217.7 L368.8 217.8 L368.8 217.9 L368.8 218.0 L368.8 218.1 L368.8 218.3 L368.8 218.4 L368.8 218.5 L368.8 218.6 L368.8 218.7 L368.8 218.8 L368.8 218.9 L368.8 219.0 L368.8 219.2 L368.8 219.3 L368.8 219.4 L368.8 219.5 L368.8 219.6 L368.8 219.8 L368.8 219.9 L368.8 220.0 L368.8 220.1 L368.8 220.3 L368.8 220.4 L368.8 220.5 L368.8 220.6 L368.8 220.8 L368.8 220.9 L368.8 221.0 L368.8 221.1 L368.8 221.3 L368.8 221.4 L368.8 221.5 L368.8 221.6 L368.8 221.8 L368.8 221.9 L368.8 222.0 L368.8 222.2 L368.8 222.3 L368.8 222.4 L368.8 222.6 L368.8 222.7 L368.8 222.8 L368.8 223.0 L368.8 223.1 L368.8 223.2 L368.8 223.4 L368.8 223.5 L368.8 223.6 L368.8 223.8 L368.8 223.9 L368.8 224.0 L368.8 224.2 L368.8 224.3 L368.8 224.5 L368.8 224.6 L368.8 224.7 L368.8 224.9 L368.8 225.0 L368.8 225.1 L368.8 225.3 L368.8 225.4 L368.8 225.5 L368.9 225.7 L368.9 225.8 L368.9 226.0 L368.9 226.1 L368.9 226.2 L368.9 226.4 L368.9 226.5 L368.9 226.6 L368.9 226.8 L368.9 226.9 L368.9 227.1 L368.9 227.2 L368.9 227.3 L368.9 227.5 L368.9 227.6 L368.9 227.7 L368.9 227.9 L368.9 228.0 L368.9 228.1 L368.9 228.3 L368.9 228.4 L368.9 228.5 L368.9 228.7 L368.9 228.8 L368.9 228.9 L368.9 229.1 L368.9 229.2 L368.9 229.3 L368.9 229.5 L368.9 229.6 L368.9 229.7 L368.9 229.8 L368.9 230.0 L368.9 230.1 L368.9 230.2 L368.9 230.3 L368.9 230.5 L368.9 230.6 L368.9 230.7 L368.9 230.8 L368.9 231.0 L368.9 231.1 L368.9 231.2 L368.9 231.3 L368.9 231.5 L368.9 231.6 L368.9 231.7 L368.9 231.8 L368.9 231.9 L368.9 232.1 L368.9 232.2 L368.9 232.3 L368.9 232.4 L368.9 232.5 L368.9 232.6 L368.9 232.7 L368.9 232.8 L368.9 233.0 L368.9 233.1 L368.9 233.2 L368.9 233.3 L368.9 233.4 L368.9 233.5 L368.9 233.6 L368.9 233.7 L368.9 233.8 L368.9 233.9 L368.9 234.0 L368.9 234.1 L368.9 234.2 L368.9 234.3 L368.9 234.4 L368.9 234.5 L368.9 234.6 L368.9 234.7 L368.9 234.8 L368.9 234.8 L368.9 234.9 L368.9 235.0 L368.9 235.1 L368.9 235.2 L368.9 235.3 L368.9 235.3 L368.9 235.4 L368.9 235.5 L368.9 235.6 L368.9 235.7 L368.9 235.7 L368.9 235.8 L368.9 235.9 L368.9 235.9 L368.9 236.0 L368.9 236.1 L368.9 236.1 L368.9 236.2 L368.9 236.3 L368.9 236.3 L368.9 236.4 L368.9 236.4 L368.9 236.5" stroke="#1010ff" stroke-width="2.8" fill="none" stroke-linejoin="round"/><path d="M398.9 108.9h1.4v1.4h-1.4zM401.5 93.7h1.4v1.4h-1.4zM400.4 111.5h1.4v1.4h-1.4zM396.4 100.3h1.4v1.4h-1.4zM400.2 104.5h1.4v1.4h-1.4zM398.2 114.4h1.4v1.4h-1.4zM398.8 107.8h1.4v1.4h-1.4zM401.0 99.6h1.4v1.4h-1.4zM400.5 109.4h1.4v1.4h-1.4zM398.6 107.2h1.4v1.4h-1.4zM399.2 104.5h1.4v1.4h-1.4zM404.4 122.1h1.4v1.4h-1.4zM397.6 102.5h1.4v1.4h-1.4zM400.8 100.1h1.4v1.4h-1.4zM399.6 99.3h1.4v1.4h-1.4zM402.5 103.6h1.4v1.4h-1.4zM398.5 113.5h1.4v1.4h-1.4zM398.1 98.7h1.4v1.4h-1.4zM404.0 93.8h1.4v1.4h-1.4zM406.2 98.7h1.4v1.4h-1.4zM400.0 102.1h1.4v1.4h-1.4zM402.0 105.7h1.4v1.4h-1.4zM400.9 110.1h1.4v1.4h-1.4zM404.4 101.1h1.4v1.4h-1.4zM398.7 102.2h1.4v1.4h-1.4zM400.4 106.0h1.4v1.4h-1.4zM400.3 104.8h1.4v1.4h-1.4zM399.1 114.2h1.4v1.4h-1.4zM396.7 89.4h1.4v1.4h-1.4zM398.9 93.7h1.4v1.4h-1.4zM395.8 102.8h1.4v1.4h-1.4zM398.8 105.1h1.4v1.4h-1.4zM399.8 102.7h1.4v1.4h-1.4zM400.9 109.7h1.4v1.4h-1.4zM398.1 118.0h1.4v1.4h-1.4zM396.2 107.5h1.4v1.4h-1.4zM398.7 107.4h1.4v1.4h-1.4zM397.5 116.6h1.4v1.4h-1.4zM398.8 98.3h1.4v1.4h-1.4zM398.2 103.2h1.4v1.4h-1.4zM398.0 111.6h1.4v1.4h-1.4zM399.2 101.9h1.4v1.4h-1.4zM400.7 104.2h1.4v1.4h-1.4zM400.2 111.7h1.4v1.4h-1.4zM404.3 118.6h1.4v1.4h-1.4zM398.1 108.2h1.4v1.4h-1.4zM395.7 100.7h1.4v1.4h-1.4zM396.9 101.6h1.4v1.4h-1.4zM398.4 103.8h1.4v1.4h-1.4zM401.1 110.2h1.4v1.4h-1.4zM396.6 111.4h1.4v1.4h-1.4zM399.1 111.8h1.4v1.4h-1.4zM394.2 98.7h1.4v1.4h-1.4zM395.9 105.7h1.4v1.4h-1.4zM402.3 98.0h1.4v1.4h-1.4zM397.5 99.8h1.4v1.4h-1.4zM403.6 106.8h1.4v1.4h-1.4zM400.7 99.1h1.4v1.4h-1.4zM398.2 115.7h1.4v1.4h-1.4zM400.0 99.5h1.4v1.4h-1.4zM397.8 93.2h1.4v1.4h-1.4zM401.4 98.5h1.4v1.4h-1.4zM400.2 108.4h1.4v1.4h-1.4zM401.9 97.3h1.4v1.4h-1.4zM400.4 109.7h1.4v1.4h-1.4zM398.8 104.9h1.4v1.4h-1.4zM400.6 114.4h1.4v1.4h-1.4zM398.0 100.1h1.4v1.4h-1.4zM399.6 97.8h1.4v1.4h-1.4zM402.2 112.9h1.4v1.4h-1.4zM397.1 107.8h1.4v1.4h-1.4zM395.8 107.5h1.4v1.4h-1.4zM399.9 104.3h1.4v1.4h-1.4zM398.1 98.3h1.4v1.4h-1.4zM397.6 93.7h1.4v1.4h-1.4zM400.9 117.8h1.4v1.4h-1.4zM398.0 95.0h1.4v1.4h-1.4zM402.8 100.7h1.4v1.4h-1.4zM402.5 93.1h1.4v1.4h-1.4zM397.3 90.9h1.4v1.4h-1.4zM399.3 93.4h1.4v1.4h-1.4zM397.2 104.4h1.4v1.4h-1.4zM396.9 115.5h1.4v1.4h-1.4zM395.2 100.7h1.4v1.4h-1.4zM403.0 110.6h1.4v1.4h-1.4zM398.0 96.8h1.4v1.4h-1.4zM399.6 100.5h1.4v1.4h-1.4zM397.6 91.5h1.4v1.4h-1.4zM399.4 90.1h1.4v1.4h-1.4zM397.3 110.1h1.4v1.4h-1.4zM399.4 111.0h1.4v1.4h-1.4zM399.7 109.5h1.4v1.4h-1.4zM398.2 105.8h1.4v1.4h-1.4zM399.4 103.1h1.4v1.4h-1.4zM400.1 101.6h1.4v1.4h-1.4zM400.2 93.6h1.4v1.4h-1.4zM402.2 103.3h1.4v1.4h-1.4zM399.0 110.3h1.4v1.4h-1.4zM400.3 102.8h1.4v1.4h-1.4zM399.8 106.5h1.4v1.4h-1.4zM398.7 98.2h1.4v1.4h-1.4zM401.6 103.6h1.4v1.4h-1.4zM398.9 100.2h1.4v1.4h-1.4zM401.8 102.3h1.4v1.4h-1.4zM402.8 99.3h1.4v1.4h-1.4zM398.6 103.8h1.4v1.4h-1.4zM398.8 102.1h1.4v1.4h-1.4zM395.8 100.3h1.4v1.4h-1.4zM404.1 109.2h1.4v1.4h-1.4zM397.7 104.3h1.4v1.4h-1.4zM397.8 100.0h1.4v1.4h-1.4zM402.5 108.0h1.4v1.4h-1.4zM405.0 104.6h1.4v1.4h-1.4zM398.6 104.1h1.4v1.4h-1.4zM398.8 102.9h1.4v1.4h-1.4zM402.8 108.3h1.4v1.4h-1.4zM399.9 100.7h1.4v1.4h-1.4zM393.9 101.9h1.4v1.4h-1.4zM399.5 101.8h1.4v1.4h-1.4zM395.8 106.6h1.4v1.4h-1.4z" fill="#1cff1c"/><path d="M371.8 103.7 L371.9 103.7 L371.9 103.8 L372.0 103.8 L372.1 103.8 L372.2 103.9 L372.3 103.9 L372.4 104.0 L372.4 104.0 L372.5 104.1 L372.6 104.1 L372.7 104.1 L372.8 104.2 L372.9 104.2 L373.0 104.3 L373.1 104.3 L373.2 104.4 L373.3 104.4 L373.4 104.5 L373.6 104.5 L373.7 104.6 L373.8 104.6 L373.9 104.7 L374.0 104.7 L374.1 104.8 L374.2 104.9 L374.4 104.9 L374.5 105.0 L374.6 105.0 L374.7 105.1 L374.9 105.2 L375.0 105.2 L375.1 105.3 L375.3 105.3 L375.4 105.4 L375.5 105.5 L375.7 105.5 L375.8 105.6 L375.9 105.7 L376.1 105.7 L376.2 105.8 L376.4 105.9 L376.5 105.9 L376.7 106.0 L376.8 106.1 L377.0 106.1 L377.1 106.2 L377.3 106.3 L377.4 106.4 L377.6 106.4 L377.7 106.5 L377.9 106.6 L378.0 106.7 L378.2 106.7 L378.3 106.8 L378.5 106.9 L378.7 107.0 L378.8 107.0 L379.0 107.1 L379.1 107.2 L379.3 107.3 L379.5 107.3 L379.6 107.4 L379.8 107.5 L380.0 107.6 L380.1 107.7 L380.3 107.7 L380.5 107.8 L380.6 107.9 L380.8 108.0 L381.0 108.1 L381.2 108.1 L381.3 108.2 L381.5 108.3 L381.7 108.4 L381.9 108.5 L382.0 108.6 L382.2 108.6 L382.4 108.7 L382.6 108.8 L382.7 108.9 L382.9 109.0 L383.1 109.1 L383.3 109.1 L383.5 109.2 L383.6 109.3 L383.8 109.4 L384.0 109.5 L384.2 109.6 L384.4 109.7 L384.5 109.7 L384.7 109.8 L384.9 109.9 L385.1 110.0 L385.3 110.1 L385.4 110.2 L385.6 110.3 L385.8 110.3 L386.0 110.4 L386.2 110.5 L386.3 110.6 L386.5 110.7 L386.7 110.8 L386.9 110.9 L387.1 110.9 L387.3 111.0 L387.4 111.1 L387.6 111.2 L387.8 111.3 L388.0 111.4 L388.2 111.5 L388.3 111.5 L388.5 111.6 L388.7 111.7 L388.9 111.8 L389.1 111.9 L389.2 112.0 L389.4 112.1 L389.6 112.1 L389.8 112.2 L390.0 112.3 L390.1 112.4 L390.3 112.5 L390.5 112.6 L390.7 112.6 L390.8 112.7 L391.0 112.8 L391.2 112.9 L391.4 113.0 L391.5 113.1 L391.7 113.1 L391.9 113.2 L392.1 113.3 L392.2 113.4 L392.4 113.5 L392.6 113.5 L392.7 113.6 L392.9 113.7 L393.1 113.8 L393.2 113.9 L393.4 113.9 L393.6 114.0 L393.7 114.1 L393.9 114.2 L394.0 114.2 L394.2 114.3 L394.4 114.4 L394.5 114.5 L394.7 114.5 L394.8 114.6 L395.0 114.7 L395.1 114.8 L395.3 114.8 L395.4 114.9 L395.6 115.0 L395.7 115.1 L395.9 115.1 L396.0 115.2 L396.2 115.3 L396.3 115.3 L396.5 115.4 L396.6 115.5 L396.8 115.5 L396.9 115.6 L397.0 115.7 L397.2 115.7 L397.3 115.8 L397.4 115.9 L397.6 115.9 L397.7 116.0 L397.8 116.0 L398.0 116.1 L398.1 116.2 L398.2 116.2 L398.3 116.3 L398.5 116.3 L398.6 116.4 L398.7 116.5 L398.8 116.5 L398.9 116.6 L399.0 116.6 L399.1 116.7 L399.3 116.7 L399.4 116.8 L399.5 116.8 L399.6 116.9 L399.7 116.9 L399.8 117.0 L399.9 117.0 L400.0 117.1 L400.1 117.1 L400.2 117.1 L400.3 117.2 L400.3 117.2 L400.4 117.3 L400.5 117.3 L400.6 117.4 L400.7 117.4 L400.8 117.4 L400.8 117.5 L400.9 117.5" stroke="#ff1010" stroke-width="1.6" fill="none" stroke-linejoin="round"/><path d="M386.4 97.1 L386.4 97.1 L386.5 97.1 L386.5 97.1 L386.5 97.1 L386.5 97.2 L386.6 97.2 L386.6 97.2 L386.6 97.2 L386.7 97.2 L386.7 97.2 L386.7 97.2 L386.8 97.3 L386.8 97.3 L386.8 97.3 L386.9 97.3 L386.9 97.3 L386.9 97.3 L387.0 97.3 L387.0 97.4 L387.1 97.4 L387.1 97.4 L387.1 97.4 L387.2 97.4 L387.2 97.5 L387.3 97.5 L387.3 97.5 L387.3 97.5 L387.4 97.5 L387.4 97.5 L387.5 97.6 L387.5 97.6 L387.6 97.6 L387.6 97.6 L387.7 97.6 L387.7 97.7 L387.8 97.7 L387.8 97.7 L387.9 97.7 L387.9 97.7 L388.0 97.8 L388.0 97.8 L388.1 97.8 L388.1 97.8 L388.2 97.9 L388.2 97.9 L388.3 97.9 L388.3 97.9 L388.4 97.9 L388.4 98.0 L388.5 98.0 L388.5 98.0 L388.6 98.0 L388.6 98.1 L388.7 98.1 L388.7 98.1 L388.8 98.1 L388.9 98.2 L388.9 98.2 L389.0 98.2 L389.0 98.2 L389.1 98.3 L389.1 98.3 L389.2 98.3 L389.3 98.3 L389.3 98.4 L389.4 98.4 L389.4 98.4 L389.5 98.4 L389.6 98.5 L389.6 98.5 L389.7 98.5 L389.7 98.5 L389.8 98.6 L389.9 98.6 L389.9 98.6 L390.0 98.6 L390.0 98.7 L390.1 98.7 L390.2 98.7 L390.2 98.8 L390.3 98.8 L390.4 98.8 L390.4 98.8 L390.5 98.9 L390.5 98.9 L390.6 98.9 L390.7 98.9 L390.7 99.0 L390.8 99.0 L390.9 99.0 L390.9 99.1 L391.0 99.1 L391.1 99.1 L391.1 99.1 L391.2 99.2 L391.2 99.2 L391.3 99.2 L391.4 99.2 L391.4 99.3 L391.5 99.3 L391.6 99.3 L391.6 99.4 L391.7 99.4 L391.8 99.4 L391.8 99.4 L391.9 99.5 L391.9 99.5 L392.0 99.5 L392.1 99.5 L392.1 99.6 L392.2 99.6 L392.3 99.6 L392.3 99.7 L392.4 99.7 L392.5 99.7 L392.5 99.7 L392.6 99.8 L392.6 99.8 L392.7 99.8 L392.8 99.8 L392.8 99.9 L392.9 99.9 L393.0 99.9 L393.0 100.0 L393.1 100.0 L393.1 100.0 L393.2 100.0 L393.3 100.1 L393.3 100.1 L393.4 100.1 L393.4 100.1 L393.5 100.2 L393.6 100.2 L393.6 100.2 L393.7 100.2 L393.7 100.3 L393.8 100.3 L393.9 100.3 L393.9 100.3 L394.0 100.4 L394.0 100.4 L394.1 100.4 L394.1 100.4 L394.2 100.5 L394.3 100.5 L394.3 100.5 L394.4 100.5 L394.4 100.6 L394.5 100.6 L394.5 100.6 L394.6 100.6 L394.6 100.7 L394.7 100.7 L394.7 100.7 L394.8 100.7 L394.8 100.7 L394.9 100.8 L394.9 100.8 L395.0 100.8 L395.0 100.8 L395.1 100.9 L395.1 100.9 L395.2 100.9 L395.2 100.9 L395.3 100.9 L395.3 101.0 L395.4 101.0 L395.4 101.0 L395.5 101.0 L395.5 101.0 L395.6 101.1 L395.6 101.1 L395.7 101.1 L395.7 101.1 L395.7 101.1 L395.8 101.1 L395.8 101.2 L395.9 101.2 L395.9 101.2 L395.9 101.2 L396.0 101.2 L396.0 101.3 L396.1 101.3 L396.1 101.3 L396.1 101.3 L396.2 101.3 L396.2 101.3 L396.2 101.3 L396.3 101.4 L396.3 101.4 L396.3 101.4 L396.4 101.4 L396.4 101.4 L396.4 101.4 L396.5 101.4 L396.5 101.5 L396.5 101.5 L396.5 101.5 L396.6 101.5 L396.6 101.5" stroke="#ff1010" stroke-width="1.5" fill="none" stroke-linejoin="round"/><path d="M403.1 98.6 L403.1 98.6 L403.1 98.6 L403.1 98.6 L403.1 98.6 L403.1 98.7 L403.1 98.7 L403.1 98.7 L403.1 98.7 L403.0 98.7 L403.0 98.7 L403.0 98.7 L403.0 98.8 L403.0 98.8 L403.0 98.8 L403.0 98.8 L403.0 98.8 L403.0 98.8 L403.0 98.8 L403.0 98.9 L403.0 98.9 L403.0 98.9 L402.9 98.9 L402.9 98.9 L402.9 98.9 L402.9 99.0 L402.9 99.0 L402.9 99.0 L402.9 99.0 L402.9 99.0 L402.9 99.1 L402.9 99.1 L402.9 99.1 L402.9 99.1 L402.8 99.1 L402.8 99.2 L402.8 99.2 L402.8 99.2 L402.8 99.2 L402.8 99.2 L402.8 99.3 L402.8 99.3 L402.8 99.3 L402.7 99.3 L402.7 99.3 L402.7 99.4 L402.7 99.4 L402.7 99.4 L402.7 99.4 L402.7 99.5 L402.7 99.5 L402.7 99.5 L402.7 99.5 L402.6 99.5 L402.6 99.6 L402.6 99.6 L402.6 99.6 L402.6 99.6 L402.6 99.7 L402.6 99.7 L402.6 99.7 L402.5 99.7 L402.5 99.8 L402.5 99.8 L402.5 99.8 L402.5 99.8 L402.5 99.9 L402.5 99.9 L402.5 99.9 L402.4 99.9 L402.4 100.0 L402.4 100.0 L402.4 100.0 L402.4 100.0 L402.4 100.1 L402.4 100.1 L402.4 100.1 L402.3 100.1 L402.3 100.2 L402.3 100.2 L402.3 100.2 L402.3 100.2 L402.3 100.3 L402.3 100.3 L402.3 100.3 L402.2 100.3 L402.2 100.4 L402.2 100.4 L402.2 100.4 L402.2 100.5 L402.2 100.5 L402.2 100.5 L402.2 100.5 L402.1 100.6 L402.1 100.6 L402.1 100.6 L402.1 100.6 L402.1 100.7 L402.1 100.7 L402.1 100.7 L402.1 100.8 L402.0 100.8 L402.0 100.8 L402.0 100.8 L402.0 100.9 L402.0 100.9 L402.0 100.9 L402.0 100.9 L401.9 101.0 L401.9 101.0 L401.9 101.0 L401.9 101.0 L401.9 101.1 L401.9 101.1 L401.9 101.1 L401.9 101.2 L401.8 101.2 L401.8 101.2 L401.8 101.2 L401.8 101.3 L401.8 101.3 L401.8 101.3 L401.8 101.3 L401.8 101.4 L401.7 101.4 L401.7 101.4 L401.7 101.4 L401.7 101.5 L401.7 101.5 L401.7 101.5 L401.7 101.5 L401.7 101.6 L401.6 101.6 L401.6 101.6 L401.6 101.6 L401.6 101.7 L401.6 101.7 L401.6 101.7 L401.6 101.7 L401.6 101.8 L401.5 101.8 L401.5 101.8 L401.5 101.8 L401.5 101.9 L401.5 101.9 L401.5 101.9 L401.5 101.9 L401.5 102.0 L401.4 102.0 L401.4 102.0 L401.4 102.0 L401.4 102.0 L401.4 102.1 L401.4 102.1 L401.4 102.1 L401.4 102.1 L401.4 102.2 L401.4 102.2 L401.3 102.2 L401.3 102.2 L401.3 102.2 L401.3 102.3 L401.3 102.3 L401.3 102.3 L401.3 102.3 L401.3 102.3 L401.3 102.4 L401.2 102.4 L401.2 102.4 L401.2 102.4 L401.2 102.4 L401.2 102.5 L401.2 102.5 L401.2 102.5 L401.2 102.5 L401.2 102.5 L401.2 102.6 L401.2 102.6 L401.2 102.6 L401.1 102.6 L401.1 102.6 L401.1 102.6 L401.1 102.7 L401.1 102.7 L401.1 102.7 L401.1 102.7 L401.1 102.7 L401.1 102.7 L401.1 102.7 L401.1 102.8 L401.1 102.8 L401.1 102.8 L401.0 102.8 L401.0 102.8 L401.0 102.8 L401.0 102.8 L401.0 102.9 L401.0 102.9 L401.0 102.9 L401.0 102.9 L401.0 102.9" stroke="#1818ff" stroke-width="1.4" fill="none" stroke-linejoin="round"/><path d="M406.0 104.4 L406.0 104.4 L406.0 104.5 L406.0 104.5 L405.9 104.5 L405.9 104.5 L405.9 104.6 L405.9 104.6 L405.9 104.6 L405.9 104.7 L405.9 104.7 L405.8 104.7 L405.8 104.8 L405.8 104.8 L405.8 104.9 L405.8 104.9 L405.8 104.9 L405.7 105.0 L405.7 105.0 L405.7 105.1 L405.7 105.1 L405.7 105.1 L405.6 105.2 L405.6 105.2 L405.6 105.3 L405.6 105.3 L405.6 105.4 L405.5 105.4 L405.5 105.5 L405.5 105.5 L405.5 105.5 L405.5 105.6 L405.4 105.6 L405.4 105.7 L405.4 105.7 L405.4 105.8 L405.3 105.8 L405.3 105.9 L405.3 106.0 L405.3 106.0 L405.2 106.1 L405.2 106.1 L405.2 106.2 L405.2 106.2 L405.1 106.3 L405.1 106.3 L405.1 106.4 L405.1 106.4 L405.0 106.5 L405.0 106.6 L405.0 106.6 L405.0 106.7 L404.9 106.7 L404.9 106.8 L404.9 106.8 L404.8 106.9 L404.8 107.0 L404.8 107.0 L404.8 107.1 L404.7 107.2 L404.7 107.2 L404.7 107.3 L404.7 107.3 L404.6 107.4 L404.6 107.5 L404.6 107.5 L404.5 107.6 L404.5 107.7 L404.5 107.7 L404.5 107.8 L404.4 107.8 L404.4 107.9 L404.4 108.0 L404.3 108.0 L404.3 108.1 L404.3 108.2 L404.2 108.2 L404.2 108.3 L404.2 108.4 L404.2 108.4 L404.1 108.5 L404.1 108.6 L404.1 108.6 L404.0 108.7 L404.0 108.8 L404.0 108.8 L403.9 108.9 L403.9 109.0 L403.9 109.0 L403.8 109.1 L403.8 109.2 L403.8 109.2 L403.7 109.3 L403.7 109.4 L403.7 109.4 L403.7 109.5 L403.6 109.6 L403.6 109.6 L403.6 109.7 L403.5 109.8 L403.5 109.8 L403.5 109.9 L403.4 110.0 L403.4 110.1 L403.4 110.1 L403.3 110.2 L403.3 110.3 L403.3 110.3 L403.3 110.4 L403.2 110.5 L403.2 110.5 L403.2 110.6 L403.1 110.7 L403.1 110.7 L403.1 110.8 L403.0 110.9 L403.0 110.9 L403.0 111.0 L402.9 111.1 L402.9 111.1 L402.9 111.2 L402.8 111.3 L402.8 111.3 L402.8 111.4 L402.8 111.5 L402.7 111.5 L402.7 111.6 L402.7 111.7 L402.6 111.7 L402.6 111.8 L402.6 111.9 L402.5 111.9 L402.5 112.0 L402.5 112.0 L402.5 112.1 L402.4 112.2 L402.4 112.2 L402.4 112.3 L402.3 112.4 L402.3 112.4 L402.3 112.5 L402.3 112.5 L402.2 112.6 L402.2 112.7 L402.2 112.7 L402.2 112.8 L402.1 112.9 L402.1 112.9 L402.1 113.0 L402.0 113.0 L402.0 113.1 L402.0 113.1 L402.0 113.2 L401.9 113.3 L401.9 113.3 L401.9 113.4 L401.9 113.4 L401.8 113.5 L401.8 113.5 L401.8 113.6 L401.8 113.6 L401.7 113.7 L401.7 113.7 L401.7 113.8 L401.7 113.9 L401.6 113.9 L401.6 114.0 L401.6 114.0 L401.6 114.1 L401.5 114.1 L401.5 114.2 L401.5 114.2 L401.5 114.2 L401.5 114.3 L401.4 114.3 L401.4 114.4 L401.4 114.4 L401.4 114.5 L401.4 114.5 L401.3 114.6 L401.3 114.6 L401.3 114.6 L401.3 114.7 L401.3 114.7 L401.2 114.8 L401.2 114.8 L401.2 114.8 L401.2 114.9 L401.2 114.9 L401.2 115.0 L401.1 115.0 L401.1 115.0 L401.1 115.1 L401.1 115.1 L401.1 115.1 L401.1 115.2 L401.1 115.2 L401.0 115.2 L401.0 115.2 L401.0 115.3 L401.0 115.3" stroke="#1818ff" stroke-width="1.4" fill="none" stroke-linejoin="round"/><path d="M399.5 118.9 L399.5 119.0 L399.4 119.0 L399.4 119.1 L399.4 119.2 L399.3 119.3 L399.3 119.3 L399.2 119.4 L399.2 119.5 L399.2 119.6 L399.1 119.6 L399.1 119.7 L399.0 119.8 L399.0 119.9 L398.9 120.0 L398.9 120.1 L398.9 120.2 L398.8 120.3 L398.8 120.4 L398.7 120.5 L398.7 120.6 L398.6 120.7 L398.6 120.8 L398.5 120.9 L398.5 121.0 L398.4 121.1 L398.3 121.2 L398.3 121.3 L398.2 121.4 L398.2 121.5 L398.1 121.7 L398.1 121.8 L398.0 121.9 L397.9 122.0 L397.9 122.1 L397.8 122.3 L397.8 122.4 L397.7 122.5 L397.6 122.6 L397.6 122.8 L397.5 122.9 L397.4 123.0 L397.4 123.1 L397.3 123.3 L397.2 123.4 L397.2 123.5 L397.1 123.7 L397.0 123.8 L397.0 123.9 L396.9 124.1 L396.8 124.2 L396.8 124.4 L396.7 124.5 L396.6 124.6 L396.6 124.8 L396.5 124.9 L396.4 125.1 L396.3 125.2 L396.3 125.4 L396.2 125.5 L396.1 125.7 L396.0 125.8 L396.0 126.0 L395.9 126.1 L395.8 126.3 L395.7 126.4 L395.7 126.6 L395.6 126.7 L395.5 126.9 L395.4 127.0 L395.4 127.2 L395.3 127.3 L395.2 127.5 L395.1 127.6 L395.0 127.8 L395.0 128.0 L394.9 128.1 L394.8 128.3 L394.7 128.4 L394.7 128.6 L394.6 128.8 L394.5 128.9 L394.4 129.1 L394.3 129.2 L394.3 129.4 L394.2 129.6 L394.1 129.7 L394.0 129.9 L393.9 130.0 L393.8 130.2 L393.8 130.4 L393.7 130.5 L393.6 130.7 L393.5 130.9 L393.4 131.0 L393.4 131.2 L393.3 131.3 L393.2 131.5 L393.1 131.7 L393.0 131.8 L393.0 132.0 L392.9 132.2 L392.8 132.3 L392.7 132.5 L392.6 132.7 L392.5 132.8 L392.5 133.0 L392.4 133.1 L392.3 133.3 L392.2 133.5 L392.1 133.6 L392.1 133.8 L392.0 134.0 L391.9 134.1 L391.8 134.3 L391.7 134.4 L391.6 134.6 L391.6 134.8 L391.5 134.9 L391.4 135.1 L391.3 135.2 L391.2 135.4 L391.2 135.6 L391.1 135.7 L391.0 135.9 L390.9 136.0 L390.9 136.2 L390.8 136.4 L390.7 136.5 L390.6 136.7 L390.5 136.8 L390.5 137.0 L390.4 137.1 L390.3 137.3 L390.2 137.4 L390.2 137.6 L390.1 137.7 L390.0 137.9 L389.9 138.0 L389.9 138.2 L389.8 138.3 L389.7 138.5 L389.6 138.6 L389.6 138.8 L389.5 138.9 L389.4 139.1 L389.3 139.2 L389.3 139.4 L389.2 139.5 L389.1 139.6 L389.1 139.8 L389.0 139.9 L388.9 140.1 L388.9 140.2 L388.8 140.3 L388.7 140.5 L388.7 140.6 L388.6 140.7 L388.5 140.9 L388.5 141.0 L388.4 141.1 L388.3 141.2 L388.3 141.4 L388.2 141.5 L388.1 141.6 L388.1 141.7 L388.0 141.9 L388.0 142.0 L387.9 142.1 L387.8 142.2 L387.8 142.3 L387.7 142.5 L387.7 142.6 L387.6 142.7 L387.6 142.8 L387.5 142.9 L387.4 143.0 L387.4 143.1 L387.3 143.2 L387.3 143.3 L387.2 143.4 L387.2 143.5 L387.1 143.6 L387.1 143.7 L387.0 143.8 L387.0 143.9 L387.0 144.0 L386.9 144.1 L386.9 144.2 L386.8 144.3 L386.8 144.4 L386.7 144.4 L386.7 144.5 L386.7 144.6 L386.6 144.7 L386.6 144.7 L386.5 144.8 L386.5 144.9 L386.5 145.0 L386.4 145.0 L386.4 145.1" stroke="#22ee22" stroke-width="1.4" fill="none" stroke-linejoin="round"/><path d="M428.2 94.1h1.4v1.4h-1.4zM442.5 81.1h1.4v1.4h-1.4zM432.0 92.6h1.4v1.4h-1.4zM437.4 78.7h1.4v1.4h-1.4zM427.0 100.2h1.4v1.4h-1.4zM435.1 79.5h1.4v1.4h-1.4zM439.3 76.9h1.4v1.4h-1.4zM435.7 84.1h1.4v1.4h-1.4zM432.8 90.4h1.4v1.4h-1.4zM439.0 78.2h1.4v1.4h-1.4zM431.2 90.9h1.4v1.4h-1.4zM435.4 83.1h1.4v1.4h-1.4zM443.4 80.0h1.4v1.4h-1.4zM441.3 76.2h1.4v1.4h-1.4zM427.6 95.2h1.4v1.4h-1.4zM430.9 89.7h1.4v1.4h-1.4zM431.9 85.7h1.4v1.4h-1.4zM429.1 93.9h1.4v1.4h-1.4zM443.9 77.5h1.4v1.4h-1.4zM432.7 90.2h1.4v1.4h-1.4zM444.6 80.4h1.4v1.4h-1.4zM431.1 93.0h1.4v1.4h-1.4zM443.7 77.0h1.4v1.4h-1.4zM429.7 93.3h1.4v1.4h-1.4zM428.6 97.3h1.4v1.4h-1.4zM434.2 81.6h1.4v1.4h-1.4zM432.2 91.1h1.4v1.4h-1.4zM435.7 78.1h1.4v1.4h-1.4zM436.9 78.6h1.4v1.4h-1.4zM426.7 101.8h1.4v1.4h-1.4zM438.8 78.9h1.4v1.4h-1.4zM440.6 80.9h1.4v1.4h-1.4zM441.3 78.1h1.4v1.4h-1.4zM433.4 87.2h1.4v1.4h-1.4zM426.1 97.9h1.4v1.4h-1.4zM443.0 77.9h1.4v1.4h-1.4zM429.4 94.3h1.4v1.4h-1.4zM439.9 78.0h1.4v1.4h-1.4zM434.4 82.8h1.4v1.4h-1.4zM427.1 95.7h1.4v1.4h-1.4zM428.6 100.9h1.4v1.4h-1.4zM431.4 87.4h1.4v1.4h-1.4zM432.9 91.5h1.4v1.4h-1.4zM432.2 94.3h1.4v1.4h-1.4zM443.9 79.7h1.4v1.4h-1.4zM435.3 76.4h1.4v1.4h-1.4zM440.5 76.7h1.4v1.4h-1.4zM435.6 83.7h1.4v1.4h-1.4zM436.8 80.6h1.4v1.4h-1.4zM432.5 93.1h1.4v1.4h-1.4zM433.3 87.0h1.4v1.4h-1.4zM435.2 85.5h1.4v1.4h-1.4zM434.4 84.8h1.4v1.4h-1.4zM429.2 92.9h1.4v1.4h-1.4zM433.8 85.1h1.4v1.4h-1.4zM431.8 84.8h1.4v1.4h-1.4zM440.8 80.9h1.4v1.4h-1.4zM441.1 80.7h1.4v1.4h-1.4zM428.4 94.4h1.4v1.4h-1.4zM430.4 94.4h1.4v1.4h-1.4zM441.1 79.0h1.4v1.4h-1.4zM430.6 92.6h1.4v1.4h-1.4zM435.5 82.6h1.4v1.4h-1.4zM439.7 79.7h1.4v1.4h-1.4zM432.0 90.4h1.4v1.4h-1.4zM428.6 95.3h1.4v1.4h-1.4zM427.4 95.6h1.4v1.4h-1.4zM434.1 84.0h1.4v1.4h-1.4zM431.9 97.8h1.4v1.4h-1.4zM436.3 83.4h1.4v1.4h-1.4zM443.8 79.3h1.4v1.4h-1.4zM434.3 84.9h1.4v1.4h-1.4zM433.1 83.6h1.4v1.4h-1.4zM435.6 86.3h1.4v1.4h-1.4zM428.4 93.4h1.4v1.4h-1.4z" fill="#1cff1c"/><path d="M434.2 97.4h1.4v1.4h-1.4zM432.8 91.2h1.4v1.4h-1.4zM434.2 104.8h1.4v1.4h-1.4zM434.7 94.7h1.4v1.4h-1.4zM437.1 104.4h1.4v1.4h-1.4zM438.6 103.6h1.4v1.4h-1.4zM430.3 106.9h1.4v1.4h-1.4zM437.9 106.7h1.4v1.4h-1.4zM438.9 110.6h1.4v1.4h-1.4zM436.9 86.6h1.4v1.4h-1.4zM428.4 79.7h1.4v1.4h-1.4zM434.3 98.3h1.4v1.4h-1.4zM432.4 102.6h1.4v1.4h-1.4zM436.2 108.5h1.4v1.4h-1.4zM437.7 94.1h1.4v1.4h-1.4zM433.3 96.6h1.4v1.4h-1.4zM432.1 95.9h1.4v1.4h-1.4zM441.5 109.0h1.4v1.4h-1.4zM430.3 96.1h1.4v1.4h-1.4zM433.4 98.7h1.4v1.4h-1.4zM434.2 98.6h1.4v1.4h-1.4zM433.4 84.8h1.4v1.4h-1.4zM436.9 93.0h1.4v1.4h-1.4zM430.3 91.3h1.4v1.4h-1.4zM428.8 115.1h1.4v1.4h-1.4zM424.8 101.8h1.4v1.4h-1.4zM437.7 81.3h1.4v1.4h-1.4zM431.3 104.0h1.4v1.4h-1.4zM436.9 109.8h1.4v1.4h-1.4zM433.8 87.3h1.4v1.4h-1.4z" fill="#1cff1c"/><path d="M467.9 83.2h1.4v1.4h-1.4zM451.6 102.1h1.4v1.4h-1.4zM465.8 97.7h1.4v1.4h-1.4zM464.4 81.8h1.4v1.4h-1.4zM476.8 87.0h1.4v1.4h-1.4zM465.7 97.4h1.4v1.4h-1.4zM474.9 98.8h1.4v1.4h-1.4zM456.1 91.8h1.4v1.4h-1.4zM472.3 77.8h1.4v1.4h-1.4zM477.0 89.7h1.4v1.4h-1.4zM473.2 87.0h1.4v1.4h-1.4zM468.6 74.7h1.4v1.4h-1.4zM473.1 73.3h1.4v1.4h-1.4zM482.1 94.8h1.4v1.4h-1.4zM467.7 89.0h1.4v1.4h-1.4zM472.2 95.4h1.4v1.4h-1.4zM479.5 79.6h1.4v1.4h-1.4zM473.4 74.2h1.4v1.4h-1.4zM479.3 82.4h1.4v1.4h-1.4zM476.4 73.6h1.4v1.4h-1.4zM481.4 75.7h1.4v1.4h-1.4zM453.8 80.3h1.4v1.4h-1.4zM471.1 100.4h1.4v1.4h-1.4zM464.7 80.8h1.4v1.4h-1.4zM477.7 78.1h1.4v1.4h-1.4zM457.4 74.9h1.4v1.4h-1.4zM474.7 95.3h1.4v1.4h-1.4zM456.8 99.8h1.4v1.4h-1.4zM464.6 94.2h1.4v1.4h-1.4zM472.3 74.2h1.4v1.4h-1.4zM463.5 82.1h1.4v1.4h-1.4zM458.7 99.0h1.4v1.4h-1.4zM459.5 88.6h1.4v1.4h-1.4zM478.4 95.8h1.4v1.4h-1.4zM476.4 88.5h1.4v1.4h-1.4z" fill="#1cff1c"/><path d="M426.2 99.9h1.4v1.4h-1.4zM453.0 107.0h1.4v1.4h-1.4zM455.9 108.9h1.4v1.4h-1.4zM431.4 103.6h1.4v1.4h-1.4zM439.6 103.3h1.4v1.4h-1.4zM445.5 113.8h1.4v1.4h-1.4zM422.8 107.9h1.4v1.4h-1.4zM442.4 110.9h1.4v1.4h-1.4zM425.3 98.9h1.4v1.4h-1.4zM452.8 100.5h1.4v1.4h-1.4zM452.0 109.2h1.4v1.4h-1.4zM432.3 117.6h1.4v1.4h-1.4zM453.6 107.3h1.4v1.4h-1.4zM425.5 96.8h1.4v1.4h-1.4zM425.1 94.9h1.4v1.4h-1.4zM423.7 99.4h1.4v1.4h-1.4zM427.9 107.0h1.4v1.4h-1.4zM430.7 114.9h1.4v1.4h-1.4zM429.7 109.4h1.4v1.4h-1.4zM448.1 115.3h1.4v1.4h-1.4z" fill="#1cff1c"/><path d="M424.6 91.9h1.4v1.4h-1.4zM432.2 96.4h1.4v1.4h-1.4zM422.3 87.8h1.4v1.4h-1.4zM425.9 100.0h1.4v1.4h-1.4zM417.3 98.1h1.4v1.4h-1.4zM418.2 97.2h1.4v1.4h-1.4zM411.8 98.2h1.4v1.4h-1.4zM412.2 87.8h1.4v1.4h-1.4zM412.6 92.4h1.4v1.4h-1.4zM425.0 91.2h1.4v1.4h-1.4zM415.5 92.8h1.4v1.4h-1.4zM423.4 89.2h1.4v1.4h-1.4zM422.7 84.4h1.4v1.4h-1.4zM421.3 100.5h1.4v1.4h-1.4zM424.7 89.7h1.4v1.4h-1.4z" fill="#1cff1c"/><rect x="482.5" y="65.8" width="1.4" height="1.4" fill="#1cff1c"/></svg>
<div class="a" style="left:932.00px;top:67.20px;width:168.00px;height:481.00px;background:#f2f1f0"></div>
<div class="a" style="left:945.00px;top:67.40px;width:155.00px;height:11.40px;background:#c8c7c3"></div>
<svg class="a" style="left:946.70px;top:70.00px;" width="9.00" height="6.00" viewBox="0 0 9.00 6.00"><rect x="2.5" y="0.8" width="6" height="4.4" rx="1" fill="#3a3a3a"/><path d="M0 0.8 L2.8 3 L0 5.2 Z" fill="#3a3a3a"/></svg>
<div class="t" style="left:959.40px;top:69.58px;font-size:8.45px;color:#4a4a48;">Views</div>
<div class="a" style="left:1090.70px;top:69.00px;width:7.00px;height:7.80px;background:#fafafa;border-radius:1.5px;border:0.5px solid #bbb"></div>
<svg class="a" style="left:1092.10px;top:70.80px;" width="4.20" height="4.20" viewBox="0 0 4.20 4.20"><path d="M0.5 0.5 L3.7 3.7 M3.7 0.5 L0.5 3.7" stroke="#444" stroke-width="1.1"/></svg>
<div class="btn" style="left:1040px;top:84px;width:57.5px;height:13.6px"></div>
<div class="t" style="left:1073.00px;top:87.20px;font-size:8.4px;color:#444;">ero</div>
<div class="a" style="left:944.80px;top:102.90px;width:153.70px;height:425.30px;background:#fff;border:1px solid #cfcecb;border-radius:1.5px"></div>
<div class="a" style="left:946.00px;top:103.40px;width:152.00px;height:10.80px;background:#bcb1a6"></div>
<div class="a" style="left:1021.30px;top:114.20px;width:0.80px;height:413.00px;background:#ececec"></div>
<div class="t" style="left:1073.00px;top:127.65px;font-size:8.3px;color:#444;">e&gt;</div>
<div class="btn" style="left:946.3px;top:532.5px;width:47.3px;height:14.3px"></div>
<div class="t" style="left:960.60px;top:536.30px;font-size:8.2px;color:#444;">Save</div>
<div class="btn" style="left:998.5px;top:532.5px;width:47.3px;height:14.3px"></div>
<div class="t" style="left:1006.88px;top:536.30px;font-size:8.2px;color:#444;">Remove</div>
<div class="btn" style="left:1050.8px;top:532.5px;width:47.2px;height:14.3px"></div>
<div class="t" style="left:1058.90px;top:536.30px;font-size:8.2px;color:#444;">Rename</div>
<div class="a" style="left:0.00px;top:547.50px;width:1100.00px;height:4.90px;background:#f2f1f0"></div>
<div class="a" style="left:1.20px;top:552.40px;width:1098.80px;height:11.50px;background:#cbcac6"></div>
<svg class="a" style="left:2.60px;top:553.80px;" width="8.60" height="8.60" viewBox="0 0 8.60 8.60"><circle cx="4.3" cy="4.3" r="3.6" fill="#fff" stroke="#333" stroke-width="0.9"/><path d="M4.3 1.8 V4.3 H6.3" stroke="#333" stroke-width="0.8" fill="none"/></svg>
<div class="t" style="left:15.20px;top:554.70px;font-size:8.2px;color:#4a4a48;">Time</div>
<div class="a" style="left:1089.50px;top:554.50px;width:7.00px;height:7.00px;background:#fafafa;border-radius:1.5px;border:0.5px solid #bbb"></div>
<svg class="a" style="left:1090.90px;top:556.00px;" width="4.20" height="4.20" viewBox="0 0 4.20 4.20"><path d="M0.5 0.5 L3.7 3.7 M3.7 0.5 L0.5 3.7" stroke="#444" stroke-width="1.1"/></svg>
<div class="t" style="left:6.60px;top:572.33px;font-size:7.95px;color:#444;">ROS Time:</div>
<div class="t" style="left:126.90px;top:572.37px;font-size:7.86px;color:#444;">ROS Elapsed:</div>
<div class="t" style="left:258.00px;top:572.25px;font-size:8.1px;color:#444;">Wall Time:</div>
<div class="t" style="left:379.00px;top:572.30px;font-size:8.0px;color:#444;">Wall Elapsed:</div>
<div class="a" style="left:50.30px;top:568.30px;width:71.90px;height:14.00px;background:#fff;border:1px solid #b6b4b0;border-radius:1.5px"></div>
<div class="t" style="left:52.80px;top:572.03px;font-size:8.35px;color:#333;">1447300530.02</div>
<div class="a" style="left:181.10px;top:568.30px;width:72.20px;height:14.00px;background:#fff;border:1px solid #b6b4b0;border-radius:1.5px"></div>
<div class="t" style="left:183.60px;top:572.03px;font-size:8.35px;color:#333;">209.97</div>
<div class="a" style="left:302.50px;top:568.30px;width:71.50px;height:14.00px;background:#fff;border:1px solid #b6b4b0;border-radius:1.5px"></div>
<div class="t" style="left:305.00px;top:572.03px;font-size:8.35px;color:#333;">1447300530.05</div>
<div class="a" style="left:434.00px;top:568.30px;width:72.00px;height:14.00px;background:#fff;border:1px solid #b6b4b0;border-radius:1.5px"></div>
<div class="t" style="left:436.50px;top:572.03px;font-size:8.35px;color:#333;">209.97</div>
<div class="a" style="left:1026.50px;top:571.50px;width:8.50px;height:8.50px;background:#fff;border:0.8px solid #999;border-radius:1.5px"></div>
<div class="t" style="left:1039.00px;top:572.10px;font-size:8.4px;color:#444;">Experimental</div>
<div class="a" style="left:0.00px;top:587.00px;width:1100.00px;height:0.80px;background:#dedcd8"></div>
<div class="btn" style="left:2.5px;top:589.7px;width:27.7px;height:12.5px"></div>
<div class="t" style="left:5.40px;top:592.65px;font-size:8.1px;color:#444;">Reset</div>
<div class="t" style="left:1076.00px;top:591.90px;font-size:8.2px;color:#444;">30 fps</div>
<div class="a" style="left:0.00px;top:603.90px;width:1100.00px;height:14.10px;background:linear-gradient(#403f3b,#3a3935)"></div>
<svg class="a" style="left:4.00px;top:606.00px;" width="9.00" height="9.00" viewBox="0 0 9.00 9.00"><rect x="0.5" y="1" width="8" height="7" fill="#a03ca0"/><rect x="1.5" y="2" width="2.5" height="2" fill="#e9b0e9"/><rect x="5" y="2" width="2.5" height="2" fill="#e9b0e9"/><rect x="1.5" y="5" width="2.5" height="2" fill="#e9b0e9"/><rect x="5" y="5" width="2.5" height="2" fill="#e9b0e9"/></svg>
<svg class="a" style="left:30.00px;top:607.00px;" width="8.00" height="8.00" viewBox="0 0 8.00 8.00"><circle cx="4" cy="4" r="3.8" fill="#db4437"/><path d="M4 4 L7.3 2.1 A3.8 3.8 0 0 1 4 7.8 Z" fill="#f4c20d"/><path d="M4 4 L4 7.8 A3.8 3.8 0 0 1 0.7 2.1 Z" fill="#0f9d58"/><circle cx="4" cy="4" r="1.8" fill="#fff"/><circle cx="4" cy="4" r="1.3" fill="#4285f4"/></svg>
<div class="t" style="left:42.50px;top:607.15px;font-size:8.9px;color:#dfdbd2;">std_msgs/Float64 ...</div>
<svg class="a" style="left:136.00px;top:607.00px;" width="8.00" height="8.00" viewBox="0 0 8.00 8.00"><rect x="0.5" y="0.5" width="7" height="7" fill="#d9d3c8" stroke="#c0a080" stroke-width="0.5"/><rect x="1.5" y="2" width="5" height="1" fill="#c05030"/><rect x="1.5" y="4" width="5" height="2.5" fill="#aa9a88"/></svg>
<div class="t" style="left:150.00px;top:607.15px;font-size:8.9px;color:#dfdbd2;">ws</div>
<svg class="a" style="left:242.50px;top:607.50px;" width="8.00" height="7.00" viewBox="0 0 8.00 7.00"><rect x="0.3" y="0.3" width="7.4" height="6.4" fill="#2a2a2a" stroke="#9a9a9a" stroke-width="0.5"/><path d="M1.5 2 L3 3 L1.5 4" stroke="#ccc" stroke-width="0.5" fill="none"/></svg>
<div class="t" style="left:256.00px;top:606.95px;font-size:9.3px;color:#dfdbd2;">[src/tag_detector/...</div>
<svg class="a" style="left:350.00px;top:606.50px;" width="8.00" height="8.50" viewBox="0 0 8.00 8.50"><rect x="0.5" y="0.5" width="7" height="7.5" fill="#5a9a3a"/><path d="M2 2 L6 6 M6 2 L2 6" stroke="#dfe" stroke-width="0.9"/></svg>
<div class="t" style="left:363.50px;top:607.10px;font-size:9.0px;color:#dfdbd2;">tag_detector_nod...</div>
<svg class="a" style="left:456.00px;top:608.00px;" width="8.00" height="5.00" viewBox="0 0 8.00 5.00"><rect x="2" y="0.5" width="5.5" height="4" fill="#ddd"/><path d="M0 0.5 L2.3 2.5 L0 4.5 Z" fill="#ddd"/></svg>
<div class="t" style="left:470.00px;top:607.42px;font-size:8.36px;color:#dfdbd2;">environ.rviz - RViz</div>
<svg class="a" style="left:562.50px;top:607.00px;" width="10.00" height="8.00" viewBox="0 0 10.00 8.00"><rect x="0.5" y="0.5" width="9" height="7" fill="#eee"/><rect x="1.5" y="1.5" width="7" height="2" fill="#888"/></svg>
<div class="t" style="left:576.00px;top:607.00px;font-size:9.2px;color:#dfdbd2;">L7.pdf</div>
<svg class="a" style="left:670.00px;top:606.50px;" width="9.00" height="9.00" viewBox="0 0 9.00 9.00"><path d="M1 0.5 H6 L8.5 3 V8.5 H1 Z" fill="#f4f4f4"/></svg>
<div class="t" style="left:683.50px;top:607.07px;font-size:9.07px;color:#dfdbd2;">document.pdf</div>
<svg class="a" style="left:777.50px;top:607.00px;" width="8.50" height="8.00" viewBox="0 0 8.50 8.00"><rect x="0.3" y="0.3" width="8" height="7.4" fill="#333" stroke="#aaa" stroke-width="0.5"/><path d="M1 4.5 L3 4.5 L4 2.5 L5 5.5 L7.5 4" stroke="#7f7" stroke-width="0.5" fill="none"/></svg>
<div class="t" style="left:790.00px;top:607.05px;font-size:9.1px;color:#dfdbd2;">rqt_plot__Plot - rqt</div>
<svg class="a" style="left:884.00px;top:607.00px;" width="9.00" height="8.00" viewBox="0 0 9.00 8.00"><rect x="0.5" y="0.5" width="8" height="7" fill="#f0f0f0"/><rect x="0.5" y="0.5" width="8" height="2" fill="#4a7ac8"/></svg>
<div class="t" style="left:897.50px;top:607.10px;font-size:9.0px;color:#dfdbd2;">in</div>
<div class="a" style="left:986.00px;top:605.00px;width:22.00px;height:12.50px;background:#2f2e2b;border:0.6px solid #6a6964"></div>
<svg class="a" style="left:993.00px;top:607.30px;" width="8.00" height="8.00" viewBox="0 0 8.00 8.00"><circle cx="4" cy="4" r="3.8" fill="#db4437"/><path d="M4 4 L7.3 2.1 A3.8 3.8 0 0 1 4 7.8 Z" fill="#f4c20d"/><path d="M4 4 L4 7.8 A3.8 3.8 0 0 1 0.7 2.1 Z" fill="#0f9d58"/><circle cx="4" cy="4" r="1.8" fill="#fff"/><circle cx="4" cy="4" r="1.3" fill="#4285f4"/></svg>
<div class="a" style="left:1008.00px;top:605.00px;width:22.00px;height:12.50px;background:#2f2e2b;border:0.6px solid #6a6964"></div>
<svg class="a" style="left:1013.50px;top:606.80px;" width="11.00" height="9.00" viewBox="0 0 11.00 9.00"><rect x="0.5" y="0.5" width="10" height="6.5" fill="#2a2a2a" stroke="#ddd" stroke-width="0.8"/><rect x="4.5" y="7" width="2" height="1.5" fill="#ddd"/></svg>
<div class="a" style="left:1031.00px;top:605.00px;width:22.00px;height:12.50px;background:#2f2e2b;border:0.6px solid #6a6964"></div>
<svg class="a" style="left:1038.00px;top:607.30px;" width="8.00" height="8.00" viewBox="0 0 8.00 8.00"><circle cx="4" cy="4" r="3.8" fill="#db4437"/><path d="M4 4 L7.3 2.1 A3.8 3.8 0 0 1 4 7.8 Z" fill="#f4c20d"/><path d="M4 4 L4 7.8 A3.8 3.8 0 0 1 0.7 2.1 Z" fill="#0f9d58"/><circle cx="4" cy="4" r="1.8" fill="#fff"/><circle cx="4" cy="4" r="1.3" fill="#4285f4"/></svg>
<div class="a" style="left:1053.00px;top:605.00px;width:22.00px;height:12.50px;background:#2f2e2b;border:0.6px solid #6a6964"></div>
<svg class="a" style="left:1060.00px;top:607.30px;" width="8.00" height="8.00" viewBox="0 0 8.00 8.00"><circle cx="4" cy="4" r="3.8" fill="#db4437"/><path d="M4 4 L7.3 2.1 A3.8 3.8 0 0 1 4 7.8 Z" fill="#f4c20d"/><path d="M4 4 L4 7.8 A3.8 3.8 0 0 1 0.7 2.1 Z" fill="#0f9d58"/><circle cx="4" cy="4" r="1.8" fill="#fff"/><circle cx="4" cy="4" r="1.3" fill="#4285f4"/></svg>
<div class="a" style="left:1076.00px;top:605.00px;width:22.00px;height:12.50px;background:#2f2e2b;border:0.6px solid #6a6964"></div>
<svg class="a" style="left:1077.50px;top:606.00px;" width="19.00" height="10.50" viewBox="0 0 19.00 10.50"><rect x="0" y="0" width="19" height="10.5" fill="#e8703a"/><text x="3" y="8" font-size="6" fill="#fff" font-family="Liberation Sans">RViz</text></svg>
<div class="a" style="left:48.1px;top:84.4px;width:216.1px;height:181px;background:#f2f1f0;border-radius:3px 3px 0 0;box-shadow:0 0 2px rgba(0,0,0,0.45)"></div>
<div class="a" style="left:48.10px;top:84.40px;width:216.10px;height:15.60px;background:linear-gradient(#55534c,#413f3b);border-radius:3px 3px 0 0"></div>
<svg class="a" style="left:55.20px;top:87.90px;" width="9.00" height="9.00" viewBox="0 0 9.00 9.00"><circle cx="4.5" cy="4.5" r="4.3" fill="#e05a30" stroke="#a03a1a" stroke-width="0.4"/><path d="M3 3 L6 6 M6 3 L3 6" stroke="#5a1a08" stroke-width="0.8"/></svg>
<svg class="a" style="left:65.60px;top:88.00px;" width="8.80" height="8.80" viewBox="0 0 8.80 8.80"><circle cx="4.4" cy="4.4" r="4.2" fill="#6e6d68" stroke="#4a4944" stroke-width="0.4"/><rect x="2.4" y="4" width="4" height="0.9" fill="#3a3935"/></svg>
<div class="t" style="left:81.60px;top:88.50px;font-size:8.6px;color:#dfdbd2;font-weight:bold;">in</div>
<div class="a" style="left:48.10px;top:100.00px;width:216.10px;height:16.00px;background:#f2f1f0"></div>
<svg class="a" style="left:54.00px;top:102.50px;" width="13.00" height="12.00" viewBox="0 0 13.00 12.00"><path d="M0.5 5 L5.5 0.5 V3 H12 V7 H5.5 V9.5 Z" fill="#69a834" stroke="#3e7a18" stroke-width="0.6"/></svg>
<svg class="a" style="left:74.80px;top:102.50px;" width="13.00" height="12.00" viewBox="0 0 13.00 12.00"><path d="M12 5 L7 0.5 V3 H0.5 V7 H7 V9.5 Z" fill="#69a834" stroke="#3e7a18" stroke-width="0.6"/></svg>
<svg class="a" style="left:96.10px;top:102.50px;" width="13.00" height="12.00" viewBox="0 0 13.00 12.00"><path d="M5 0.5 L10 6 H7 V11 H3 V6 H0 Z" fill="#69a834" stroke="#3e7a18" stroke-width="0.6"/></svg>
<svg class="a" style="left:116.70px;top:102.50px;" width="13.00" height="12.00" viewBox="0 0 13.00 12.00"><path d="M5 11 L10 5 H7 V0.5 H3 V5 H0 Z" fill="#69a834" stroke="#3e7a18" stroke-width="0.6"/></svg>
<svg class="a" style="left:136.80px;top:102.50px;" width="13.00" height="12.00" viewBox="0 0 13.00 12.00"><rect x="0.5" y="0.8" width="12" height="9" rx="1" fill="#b85a1e" stroke="#7a3a10" stroke-width="0.5"/><rect x="2" y="2.3" width="9" height="6" fill="#6ab0e8"/><path d="M2 8.3 L5 5 L7.5 7 L11 4.5 V8.3 Z" fill="#5aa030"/></svg>
<svg class="a" style="left:157.60px;top:102.50px;" width="13.00" height="12.00" viewBox="0 0 13.00 12.00"><rect x="0.5" y="1" width="10" height="8" fill="#4aa0c8" stroke="#2a6a88" stroke-width="0.5"/><circle cx="6" cy="5.5" r="3" fill="#fff" stroke="#3a8a20" stroke-width="1"/><path d="M3.5 8 L1 10.5" stroke="#333" stroke-width="1.2"/></svg>
<svg class="a" style="left:178.20px;top:102.50px;" width="13.00" height="12.00" viewBox="0 0 13.00 12.00"><circle cx="6.5" cy="4.5" r="3.8" fill="#f4fff0" stroke="#3e8a18" stroke-width="1.2"/><path d="M6.5 3 V6 M5 4.5 H8" stroke="#3e8a18" stroke-width="0.8"/><path d="M3.8 7.2 L0.8 10.5" stroke="#333" stroke-width="1.5"/></svg>
<svg class="a" style="left:198.20px;top:102.50px;" width="13.00" height="12.00" viewBox="0 0 13.00 12.00"><circle cx="6.5" cy="4.5" r="3.8" fill="#f4fff0" stroke="#3e8a18" stroke-width="1.2"/><path d="M5 4.5 H8" stroke="#3e8a18" stroke-width="0.8"/><path d="M3.8 7.2 L0.8 10.5" stroke="#333" stroke-width="1.5"/></svg>
<svg class="a" style="left:219.60px;top:102.50px;" width="13.00" height="12.00" viewBox="0 0 13.00 12.00"><path d="M0.5 0.5 H9 L11 2.5 V11 H0.5 Z" fill="#4a9a1e"/><rect x="2.5" y="0.5" width="5.5" height="3.5" fill="#e8f4e0"/><rect x="2.5" y="6.5" width="6.5" height="4.5" fill="#e8f4e0"/></svg>
<svg class="a" style="left:239.60px;top:102.50px;" width="13.00" height="12.00" viewBox="0 0 13.00 12.00"><path d="M11.5 0.5 L6.5 5.5" stroke="#999" stroke-width="1.4"/><path d="M6.5 4.5 L0.5 10.5 L4 11.5 L8 7 Z" fill="#aaa"/></svg>
<svg class="a" style="left:48.70px;top:116.00px;overflow:hidden" width="215.50" height="137.20" viewBox="0 0 215.50 137.20"><defs><linearGradient id="ibg" x1="0" y1="0" x2="1" y2="0.5"><stop offset="0" stop-color="#a4a4a4"/><stop offset="0.5" stop-color="#929292"/><stop offset="1" stop-color="#7a7a7a"/></linearGradient><radialGradient id="ilight" cx="0.55" cy="0.2" r="0.45"><stop offset="0" stop-color="#bdbdbd" stop-opacity="0.8"/><stop offset="1" stop-color="#bdbdbd" stop-opacity="0"/></radialGradient></defs><rect x="0" y="0" width="215.5" height="137.2" fill="url(#ibg)"/><rect x="0" y="0" width="215.5" height="137.2" fill="url(#ilight)"/><polygon points="-0.7,20.0 9.3,12.0 26.3,8.5 142.8,6.5 85.3,100.0 -0.7,41.5" fill="#e6e6e6" /><polygon points="3.3,0.0 7.3,0.0 13.3,11.0 9.8,12.0" fill="#3a3a3a" /><path d="M-1.3,21.2 L2.0,20.9 L1.8,23.2 L-1.3,23.4ZM2.9,20.8 L7.4,20.4 L7.0,23.0 L2.7,23.2ZM8.6,20.2 L13.7,19.7 L13.0,22.7 L8.2,22.9ZM15.1,19.6 L20.6,19.0 L19.6,22.3 L14.3,22.6ZM22.1,18.9 L28.0,18.3 L26.6,22.0 L21.0,22.3ZM29.5,18.1 L35.7,17.5 L34.0,21.6 L28.1,21.9ZM37.3,17.3 L43.8,16.7 L41.8,21.2 L35.6,21.5ZM45.5,16.5 L52.2,15.8 L49.8,20.8 L43.3,21.2ZM53.9,15.7 L60.9,15.0 L58.0,20.4 L51.4,20.8ZM62.6,14.8 L69.8,14.1 L66.5,20.0 L59.7,20.4ZM71.6,13.9 L78.9,13.2 L75.3,19.6 L68.3,19.9ZM80.8,13.0 L88.3,12.2 L84.2,19.1 L77.0,19.5ZM90.2,12.0 L97.8,11.3 L93.3,18.7 L86.0,19.1ZM99.7,11.1 L107.5,10.3 L102.6,18.2 L95.1,18.6ZM109.5,10.1 L117.5,9.3 L112.1,17.8 L104.5,18.1ZM119.5,9.1 L127.5,8.3 L121.7,17.3 L114.0,17.7ZM-1.3,24.0 L1.8,23.9 L1.6,26.2 L-1.3,26.1ZM2.7,23.8 L6.9,23.7 L6.5,26.3 L2.5,26.2ZM8.0,23.7 L12.8,23.5 L12.1,26.4 L7.6,26.3ZM14.1,23.4 L19.3,23.3 L18.3,26.6 L13.3,26.5ZM20.7,23.2 L26.3,23.0 L24.9,26.7 L19.6,26.6ZM27.7,23.0 L33.6,22.8 L31.9,26.9 L26.3,26.8ZM35.1,22.7 L41.2,22.5 L39.1,27.1 L33.3,26.9ZM42.7,22.5 L49.1,22.3 L46.6,27.3 L40.6,27.1ZM50.7,22.2 L57.2,22.0 L54.4,27.4 L48.2,27.3ZM58.9,21.9 L65.6,21.7 L62.4,27.6 L56.0,27.5ZM67.3,21.6 L74.2,21.4 L70.6,27.8 L64.0,27.7ZM76.0,21.3 L83.0,21.1 L79.0,28.0 L72.2,27.9ZM84.8,21.0 L92.0,20.8 L87.5,28.2 L80.7,28.1ZM93.8,20.7 L101.2,20.5 L96.2,28.4 L89.2,28.3ZM103.0,20.4 L110.5,20.2 L105.1,28.7 L98.0,28.5ZM112.4,20.1 L120.0,19.8 L114.2,28.9 L106.9,28.7ZM-1.3,26.7 L1.5,26.8 L1.4,29.1 L-1.4,28.9ZM2.4,26.9 L6.4,27.0 L5.9,29.6 L2.2,29.2ZM7.4,27.1 L11.9,27.3 L11.2,30.2 L7.0,29.7ZM13.1,27.3 L18.0,27.5 L17.0,30.8 L12.4,30.3ZM19.3,27.6 L24.5,27.8 L23.2,31.5 L18.2,31.0ZM25.9,27.8 L31.4,28.1 L29.7,32.2 L24.5,31.6ZM32.8,28.1 L38.5,28.4 L36.5,32.9 L31.0,32.3ZM40.0,28.4 L45.9,28.7 L43.5,33.7 L37.9,33.1ZM47.5,28.7 L53.6,29.0 L50.8,34.4 L44.9,33.8ZM55.2,29.0 L61.5,29.3 L58.2,35.2 L52.2,34.6ZM63.1,29.4 L69.5,29.6 L65.9,36.1 L59.7,35.4ZM71.2,29.7 L77.8,30.0 L73.7,36.9 L67.4,36.2ZM79.5,30.1 L86.2,30.3 L81.7,37.8 L75.3,37.1ZM87.9,30.4 L94.8,30.7 L89.9,38.6 L83.3,37.9ZM96.6,30.8 L103.6,31.0 L98.2,39.5 L91.5,38.8ZM105.4,31.1 L112.5,31.4 L106.6,40.4 L99.9,39.7ZM-1.4,29.5 L1.3,29.8 L1.2,32.1 L-1.4,31.6ZM2.1,29.9 L5.8,30.4 L5.4,33.0 L1.9,32.3ZM6.8,30.5 L11.0,31.0 L10.3,34.0 L6.4,33.2ZM12.1,31.2 L16.7,31.8 L15.7,35.1 L11.4,34.2ZM17.9,31.9 L22.8,32.5 L21.5,36.2 L16.8,35.3ZM24.1,32.7 L29.2,33.3 L27.5,37.5 L22.7,36.5ZM30.5,33.5 L35.9,34.2 L33.8,38.7 L28.8,37.7ZM37.3,34.4 L42.8,35.1 L40.4,40.1 L35.1,39.0ZM44.2,35.3 L50.0,36.0 L47.1,41.4 L41.7,40.3ZM51.4,36.2 L57.3,36.9 L54.1,42.9 L48.5,41.7ZM58.8,37.1 L64.9,37.9 L61.2,44.3 L55.5,43.1ZM66.4,38.1 L72.6,38.9 L68.5,45.8 L62.6,44.6ZM74.1,39.1 L80.5,39.9 L75.9,47.3 L70.0,46.1ZM82.1,40.1 L88.5,40.9 L83.5,48.8 L77.5,47.6ZM90.1,41.1 L96.7,41.9 L91.3,50.4 L85.1,49.2ZM98.3,42.1 L105.0,43.0 L99.1,52.0 L92.8,50.7ZM-1.4,32.2 L1.1,32.8 L0.9,35.1 L-1.4,34.3ZM1.9,32.9 L5.3,33.7 L4.9,36.3 L1.6,35.3ZM6.2,33.9 L10.1,34.8 L9.4,37.7 L5.8,36.6ZM11.2,35.0 L15.4,36.0 L14.4,39.3 L10.4,38.1ZM16.5,36.3 L21.1,37.3 L19.7,41.0 L15.5,39.6ZM22.3,37.5 L27.0,38.6 L25.3,42.7 L20.8,41.3ZM28.3,38.9 L33.2,40.0 L31.2,44.6 L26.5,43.1ZM34.5,40.3 L39.7,41.5 L37.2,46.5 L32.4,45.0ZM41.0,41.8 L46.3,43.0 L43.5,48.5 L38.5,46.9ZM47.7,43.3 L53.2,44.5 L49.9,50.5 L44.8,48.9ZM54.6,44.9 L60.2,46.1 L56.5,52.6 L51.2,50.9ZM61.6,46.4 L67.3,47.7 L63.3,54.7 L57.9,53.0ZM68.8,48.1 L74.7,49.4 L70.2,56.8 L64.6,55.1ZM76.2,49.7 L82.1,51.1 L77.2,59.0 L71.6,57.3ZM83.7,51.4 L89.7,52.8 L84.3,61.3 L78.6,59.5ZM91.3,53.2 L97.5,54.6 L91.6,63.6 L85.8,61.8ZM-1.4,34.9 L0.9,35.7 L0.7,38.0 L-1.4,37.1ZM1.6,36.0 L4.8,37.1 L4.4,39.7 L1.4,38.3ZM5.6,37.3 L9.2,38.6 L8.5,41.5 L5.2,40.0ZM10.2,38.9 L14.1,40.2 L13.1,43.6 L9.4,41.9ZM15.2,40.6 L19.4,42.0 L18.0,45.7 L14.1,44.0ZM20.4,42.4 L24.9,43.9 L23.2,48.0 L19.0,46.2ZM26.0,44.3 L30.6,45.9 L28.5,50.4 L24.2,48.5ZM31.8,46.3 L36.5,47.9 L34.1,52.9 L29.6,50.9ZM37.8,48.3 L42.7,50.0 L39.9,55.5 L35.2,53.4ZM43.9,50.4 L49.0,52.2 L45.8,58.1 L41.0,56.0ZM50.3,52.6 L55.5,54.4 L51.8,60.8 L47.0,58.6ZM56.8,54.8 L62.1,56.6 L58.0,63.6 L53.1,61.3ZM63.5,57.1 L68.9,58.9 L64.4,66.4 L59.3,64.1ZM70.3,59.4 L75.8,61.3 L70.8,69.3 L65.7,66.9ZM77.2,61.8 L82.8,63.7 L77.4,72.2 L72.1,69.8ZM84.2,64.2 L90.0,66.1 L84.1,75.2 L78.7,72.8ZM-1.4,37.7 L0.7,38.7 L0.5,41.0 L-1.5,39.8ZM1.3,39.0 L4.2,40.4 L3.8,43.0 L1.1,41.4ZM5.0,40.8 L8.3,42.4 L7.6,45.3 L4.6,43.4ZM9.2,42.8 L12.8,44.5 L11.8,47.8 L8.5,45.8ZM13.8,44.9 L17.6,46.8 L16.3,50.5 L12.7,48.3ZM18.6,47.3 L22.7,49.2 L21.0,53.3 L17.2,51.0ZM23.7,49.7 L27.9,51.7 L25.9,56.3 L21.9,53.9ZM29.0,52.2 L33.4,54.3 L31.0,59.3 L26.9,56.9ZM34.5,54.8 L39.1,57.0 L36.2,62.5 L32.0,59.9ZM40.2,57.5 L44.9,59.8 L41.6,65.7 L37.3,63.1ZM46.0,60.3 L50.8,62.6 L47.1,69.0 L42.7,66.4ZM52.0,63.2 L56.9,65.5 L52.8,72.4 L48.3,69.7ZM58.1,66.1 L63.1,68.5 L58.6,75.9 L54.0,73.1ZM64.4,69.1 L69.4,71.5 L64.5,79.5 L59.8,76.6ZM70.7,72.1 L75.9,74.6 L70.5,83.1 L65.7,80.2ZM77.2,75.2 L82.5,77.7 L76.6,86.7 L71.7,83.8Z" fill="#202020"/><path d="M0.7,22.5 L1.4,22.4 L1.4,22.9 L0.7,23.0ZM-0.7,22.4 L-0.0,22.4 L-0.1,22.8 L-0.7,22.9ZM-0.5,22.3 L0.2,22.3 L0.1,22.8 L-0.5,22.8ZM0.1,22.5 L0.7,22.5 L0.7,23.0 L0.0,23.0ZM0.1,21.5 L0.7,21.4 L0.7,21.9 L0.0,22.0ZM0.2,22.1 L0.9,22.1 L0.8,22.6 L0.2,22.6ZM5.5,22.2 L6.4,22.1 L6.3,22.7 L5.4,22.7ZM4.3,22.0 L5.2,21.9 L5.2,22.5 L4.3,22.5ZM3.6,21.8 L4.5,21.7 L4.5,22.2 L3.6,22.3ZM4.4,21.2 L5.4,21.1 L5.3,21.6 L4.4,21.7ZM4.7,21.8 L5.6,21.7 L5.6,22.3 L4.6,22.3ZM5.6,22.0 L6.5,22.0 L6.4,22.5 L5.5,22.6ZM10.4,21.6 L11.4,21.6 L11.3,22.2 L10.3,22.2ZM10.6,20.7 L11.7,20.6 L11.5,21.2 L10.5,21.3ZM9.6,20.8 L10.7,20.7 L10.6,21.3 L9.5,21.4ZM10.6,20.9 L11.7,20.8 L11.6,21.4 L10.5,21.5ZM9.5,21.2 L10.6,21.1 L10.4,21.7 L9.4,21.8ZM11.2,21.1 L12.3,21.0 L12.2,21.6 L11.1,21.7ZM16.1,21.1 L17.3,21.0 L17.1,21.7 L15.9,21.8ZM15.9,20.2 L17.0,20.1 L16.8,20.8 L15.7,20.9ZM18.2,20.8 L19.4,20.7 L19.1,21.5 L18.0,21.5ZM15.5,21.3 L16.7,21.2 L16.5,21.9 L15.3,22.0ZM16.7,20.8 L17.9,20.7 L17.7,21.4 L16.5,21.4ZM16.1,21.0 L17.3,20.9 L17.1,21.6 L15.9,21.7ZM24.0,19.4 L25.3,19.3 L25.0,20.0 L23.8,20.1ZM24.3,19.4 L25.6,19.2 L25.3,20.0 L24.1,20.1ZM24.8,20.7 L26.1,20.6 L25.8,21.4 L24.6,21.5ZM23.0,20.8 L24.3,20.8 L24.0,21.5 L22.8,21.6ZM24.2,20.2 L25.4,20.1 L25.1,20.9 L23.9,21.0ZM25.1,19.5 L26.4,19.4 L26.1,20.2 L24.9,20.3ZM32.8,19.1 L34.1,19.0 L33.7,19.9 L32.4,20.0ZM29.9,20.0 L31.2,19.9 L30.9,20.7 L29.6,20.8ZM30.6,19.3 L31.9,19.2 L31.6,20.1 L30.3,20.2ZM30.9,19.7 L32.2,19.6 L31.9,20.5 L30.6,20.6ZM29.9,20.1 L31.1,20.0 L30.8,20.9 L29.5,21.0ZM30.8,19.6 L32.0,19.5 L31.7,20.3 L30.4,20.4ZM39.9,18.2 L41.2,18.1 L40.8,19.0 L39.4,19.1ZM38.4,19.3 L39.8,19.2 L39.3,20.1 L38.0,20.2ZM38.2,18.6 L39.5,18.5 L39.1,19.4 L37.8,19.5ZM40.5,18.8 L41.8,18.7 L41.4,19.7 L40.0,19.8ZM40.2,18.2 L41.5,18.0 L41.1,19.0 L39.7,19.1ZM38.6,18.8 L40.0,18.7 L39.6,19.7 L38.2,19.8ZM47.7,17.5 L49.1,17.4 L48.6,18.4 L47.2,18.5ZM46.3,18.4 L47.7,18.3 L47.2,19.3 L45.8,19.4ZM46.0,19.2 L47.4,19.1 L46.9,20.2 L45.5,20.2ZM48.2,18.7 L49.6,18.6 L49.0,19.6 L47.7,19.7ZM46.5,18.0 L47.9,17.9 L47.4,19.0 L46.0,19.1ZM47.8,18.5 L49.2,18.4 L48.7,19.5 L47.3,19.6ZM56.3,16.4 L57.7,16.2 L57.2,17.4 L55.7,17.5ZM56.4,16.6 L57.8,16.5 L57.2,17.7 L55.8,17.8ZM54.6,16.8 L56.1,16.7 L55.5,17.8 L54.0,17.9ZM54.7,18.8 L56.1,18.7 L55.5,19.9 L54.1,19.9ZM57.2,17.6 L58.6,17.5 L58.0,18.7 L56.6,18.8ZM56.7,18.4 L58.1,18.3 L57.5,19.5 L56.1,19.6ZM64.8,17.8 L66.3,17.7 L65.6,19.0 L64.1,19.1ZM63.9,17.5 L65.4,17.4 L64.7,18.7 L63.3,18.8ZM66.3,15.9 L67.8,15.7 L67.1,17.0 L65.6,17.1ZM63.1,17.0 L64.6,16.9 L63.9,18.1 L62.4,18.2ZM63.9,17.3 L65.4,17.1 L64.7,18.4 L63.2,18.5ZM65.3,17.4 L66.8,17.2 L66.1,18.5 L64.7,18.6ZM72.2,14.9 L73.8,14.7 L73.0,16.1 L71.5,16.2ZM71.5,16.1 L73.0,16.0 L72.3,17.3 L70.8,17.4ZM72.3,16.3 L73.9,16.2 L73.1,17.5 L71.6,17.6ZM74.2,15.5 L75.7,15.3 L74.9,16.7 L73.4,16.8ZM71.9,17.5 L73.4,17.4 L72.7,18.8 L71.2,18.9ZM73.4,17.2 L74.9,17.1 L74.1,18.5 L72.6,18.6ZM80.8,16.2 L82.4,16.1 L81.5,17.6 L80.0,17.7ZM80.2,17.0 L81.7,16.9 L80.9,18.3 L79.3,18.4ZM82.3,14.6 L83.9,14.4 L83.0,15.9 L81.5,16.0ZM79.9,16.6 L81.4,16.5 L80.6,17.9 L79.0,18.0ZM81.9,17.0 L83.4,16.9 L82.6,18.4 L81.0,18.5ZM81.4,15.7 L82.9,15.6 L82.1,17.1 L80.5,17.2ZM91.6,15.1 L93.2,15.0 L92.2,16.6 L90.6,16.7ZM93.3,13.2 L94.9,13.0 L94.0,14.6 L92.4,14.7ZM93.7,13.0 L95.3,12.8 L94.3,14.4 L92.7,14.5ZM91.3,13.6 L92.9,13.5 L92.0,15.0 L90.4,15.2ZM92.3,15.0 L93.8,14.8 L92.9,16.4 L91.3,16.5ZM90.5,15.8 L92.1,15.7 L91.2,17.3 L89.6,17.4ZM100.5,12.5 L102.2,12.3 L101.1,14.0 L99.5,14.1ZM102.2,12.5 L103.8,12.4 L102.8,14.1 L101.1,14.2ZM101.2,15.6 L102.8,15.5 L101.7,17.2 L100.1,17.3ZM102.8,12.2 L104.4,12.0 L103.3,13.7 L101.7,13.8ZM101.6,12.2 L103.3,12.1 L102.2,13.8 L100.6,13.9ZM102.3,13.0 L104.0,12.9 L102.9,14.6 L101.3,14.7ZM108.2,14.6 L109.8,14.5 L108.7,16.3 L107.1,16.4ZM112.1,12.4 L113.8,12.2 L112.6,14.1 L111.0,14.2ZM110.2,11.3 L111.9,11.1 L110.7,12.9 L109.1,13.1ZM111.0,11.5 L112.7,11.3 L111.5,13.1 L109.9,13.3ZM109.5,13.2 L111.2,13.1 L110.1,14.9 L108.4,15.0ZM112.4,11.9 L114.0,11.7 L112.9,13.6 L111.2,13.7ZM120.0,10.9 L121.7,10.7 L120.4,12.7 L118.8,12.8ZM121.1,12.7 L122.8,12.5 L121.5,14.5 L119.8,14.6ZM120.4,13.9 L122.1,13.8 L120.8,15.7 L119.2,15.8ZM119.3,12.5 L121.0,12.4 L119.8,14.3 L118.1,14.4ZM119.9,12.2 L121.6,12.0 L120.4,14.0 L118.7,14.1ZM121.1,13.9 L122.8,13.8 L121.5,15.7 L119.8,15.8ZM0.2,25.2 L0.8,25.2 L0.8,25.7 L0.2,25.7ZM0.3,24.8 L0.9,24.8 L0.9,25.3 L0.2,25.3ZM-0.2,24.6 L0.5,24.6 L0.4,25.0 L-0.2,25.0ZM-0.2,24.4 L0.5,24.4 L0.4,24.9 L-0.2,24.9ZM0.6,24.5 L1.2,24.5 L1.2,25.0 L0.6,25.0ZM0.2,25.2 L0.9,25.2 L0.8,25.7 L0.2,25.7ZM3.4,24.4 L4.3,24.4 L4.3,24.9 L3.4,25.0ZM5.1,24.2 L6.0,24.1 L5.9,24.7 L5.0,24.7ZM3.4,25.4 L4.3,25.4 L4.2,25.9 L3.3,25.9ZM3.4,25.1 L4.3,25.1 L4.2,25.6 L3.3,25.6ZM4.1,25.4 L5.0,25.4 L4.9,25.9 L4.1,25.9ZM4.7,24.4 L5.6,24.4 L5.5,25.0 L4.6,25.0ZM10.5,24.2 L11.5,24.2 L11.3,24.8 L10.3,24.8ZM9.5,24.7 L10.5,24.7 L10.4,25.3 L9.4,25.3ZM10.5,25.0 L11.5,25.0 L11.4,25.6 L10.4,25.6ZM10.2,25.0 L11.2,25.0 L11.0,25.6 L10.1,25.6ZM8.6,24.5 L9.7,24.5 L9.5,25.1 L8.5,25.1ZM10.4,24.9 L11.4,24.9 L11.3,25.5 L10.3,25.5ZM16.2,25.3 L17.3,25.3 L17.1,26.0 L16.0,26.0ZM15.3,24.2 L16.4,24.2 L16.2,24.9 L15.2,24.9ZM14.7,25.3 L15.8,25.3 L15.6,25.9 L14.6,25.9ZM15.7,25.2 L16.8,25.2 L16.6,25.9 L15.5,25.9ZM16.3,24.7 L17.4,24.7 L17.2,25.4 L16.1,25.4ZM14.7,25.0 L15.8,25.0 L15.6,25.7 L14.5,25.7ZM23.6,24.8 L24.7,24.8 L24.5,25.6 L23.3,25.6ZM21.7,25.2 L22.8,25.2 L22.6,25.9 L21.4,25.9ZM22.5,24.8 L23.7,24.8 L23.4,25.5 L22.3,25.5ZM22.0,25.3 L23.1,25.3 L22.8,26.1 L21.7,26.1ZM22.0,24.2 L23.1,24.2 L22.9,24.9 L21.7,24.9ZM21.8,24.6 L23.0,24.6 L22.7,25.4 L21.5,25.4ZM28.6,25.5 L29.8,25.5 L29.5,26.3 L28.3,26.3ZM29.9,25.2 L31.1,25.2 L30.8,26.1 L29.6,26.1ZM29.0,23.5 L30.2,23.5 L29.9,24.4 L28.6,24.4ZM29.5,25.4 L30.7,25.4 L30.4,26.2 L29.2,26.2ZM29.4,25.4 L30.6,25.4 L30.3,26.3 L29.1,26.3ZM28.2,24.7 L29.4,24.7 L29.1,25.5 L27.9,25.5ZM37.0,24.6 L38.3,24.6 L37.9,25.5 L36.6,25.5ZM37.3,24.9 L38.6,24.9 L38.1,25.9 L36.9,25.9ZM37.5,24.6 L38.8,24.6 L38.4,25.6 L37.1,25.5ZM35.6,25.5 L36.9,25.5 L36.5,26.4 L35.2,26.4ZM36.7,23.4 L38.0,23.4 L37.6,24.4 L36.3,24.4ZM37.6,23.7 L38.8,23.6 L38.4,24.6 L37.1,24.6ZM44.1,24.7 L45.4,24.7 L44.9,25.8 L43.6,25.8ZM42.9,25.3 L44.2,25.3 L43.7,26.4 L42.4,26.4ZM43.5,24.5 L44.8,24.5 L44.3,25.6 L43.0,25.6ZM42.7,25.4 L44.0,25.4 L43.5,26.4 L42.2,26.4ZM43.6,24.8 L44.9,24.8 L44.4,25.8 L43.1,25.8ZM45.9,24.2 L47.2,24.2 L46.7,25.3 L45.4,25.3ZM51.9,23.5 L53.2,23.5 L52.7,24.6 L51.3,24.6ZM53.0,25.3 L54.4,25.3 L53.8,26.4 L52.4,26.4ZM52.0,24.1 L53.4,24.0 L52.8,25.2 L51.5,25.2ZM52.1,23.9 L53.5,23.9 L52.9,25.1 L51.5,25.1ZM51.5,25.0 L52.9,25.0 L52.3,26.2 L51.0,26.2ZM53.0,23.6 L54.4,23.6 L53.8,24.7 L52.4,24.7ZM61.3,23.4 L62.7,23.3 L62.0,24.6 L60.6,24.6ZM59.6,24.8 L61.0,24.8 L60.3,26.0 L58.9,26.0ZM61.5,24.2 L62.9,24.1 L62.3,25.4 L60.9,25.4ZM62.4,23.0 L63.8,23.0 L63.1,24.2 L61.7,24.3ZM61.2,25.3 L62.6,25.3 L61.9,26.6 L60.5,26.5ZM58.1,25.5 L59.5,25.5 L58.8,26.8 L57.4,26.7ZM69.7,23.0 L71.1,22.9 L70.4,24.3 L68.9,24.3ZM67.4,23.5 L68.9,23.4 L68.1,24.8 L66.7,24.8ZM68.6,24.3 L70.0,24.3 L69.2,25.6 L67.8,25.6ZM70.4,22.6 L71.9,22.6 L71.1,24.0 L69.7,24.0ZM67.8,25.7 L69.2,25.7 L68.4,27.0 L67.0,27.0ZM70.4,22.9 L71.9,22.9 L71.1,24.2 L69.6,24.3ZM77.4,23.3 L78.9,23.3 L78.0,24.8 L76.5,24.8ZM78.3,24.8 L79.8,24.8 L78.9,26.3 L77.5,26.3ZM78.6,23.6 L80.1,23.6 L79.2,25.1 L77.8,25.1ZM77.8,24.1 L79.2,24.1 L78.4,25.5 L76.9,25.5ZM78.0,23.0 L79.5,23.0 L78.7,24.5 L77.2,24.5ZM77.3,23.5 L78.8,23.5 L77.9,25.0 L76.5,25.0ZM87.5,23.1 L89.0,23.1 L88.0,24.7 L86.5,24.7ZM88.5,22.2 L90.0,22.2 L89.0,23.8 L87.5,23.8ZM86.9,22.7 L88.4,22.6 L87.5,24.2 L86.0,24.2ZM84.1,25.1 L85.6,25.1 L84.6,26.7 L83.2,26.6ZM88.2,23.1 L89.7,23.0 L88.7,24.6 L87.2,24.6ZM85.0,22.7 L86.5,22.6 L85.5,24.2 L84.0,24.2ZM94.1,22.7 L95.6,22.7 L94.6,24.4 L93.1,24.4ZM96.0,23.4 L97.6,23.4 L96.5,25.1 L95.0,25.1ZM96.3,23.3 L97.8,23.3 L96.8,25.0 L95.3,25.0ZM94.8,24.6 L96.3,24.6 L95.3,26.3 L93.8,26.3ZM95.3,25.4 L96.8,25.4 L95.7,27.2 L94.2,27.1ZM93.4,25.4 L94.9,25.4 L93.9,27.1 L92.4,27.1ZM105.0,24.2 L106.6,24.2 L105.4,26.1 L103.9,26.0ZM104.2,24.2 L105.8,24.2 L104.6,26.0 L103.1,26.0ZM105.0,22.5 L106.6,22.4 L105.4,24.2 L103.8,24.2ZM105.7,22.1 L107.3,22.1 L106.1,23.9 L104.6,23.9ZM103.5,25.3 L105.0,25.3 L103.8,27.1 L102.3,27.1ZM104.6,25.3 L106.2,25.3 L105.0,27.1 L103.5,27.1ZM113.7,21.8 L115.3,21.8 L114.1,23.7 L112.5,23.7ZM114.6,23.6 L116.2,23.6 L115.0,25.6 L113.4,25.6ZM112.5,25.4 L114.0,25.4 L112.8,27.4 L111.2,27.4ZM112.7,24.8 L114.2,24.8 L113.0,26.7 L111.4,26.7ZM112.2,24.4 L113.8,24.4 L112.6,26.3 L111.0,26.3ZM113.3,22.7 L114.9,22.7 L113.6,24.6 L112.0,24.6ZM0.1,27.8 L0.7,27.8 L0.6,28.3 L0.1,28.3ZM-0.5,27.7 L0.1,27.7 L0.0,28.2 L-0.6,28.1ZM-0.1,27.9 L0.5,28.0 L0.5,28.5 L-0.1,28.4ZM-0.9,27.8 L-0.3,27.8 L-0.3,28.3 L-0.9,28.2ZM-0.1,27.2 L0.5,27.2 L0.5,27.7 L-0.1,27.7ZM-0.4,27.8 L0.2,27.8 L0.2,28.3 L-0.4,28.2ZM4.5,27.9 L5.3,27.9 L5.2,28.5 L4.4,28.4ZM3.7,28.4 L4.5,28.4 L4.4,29.0 L3.6,28.9ZM3.0,28.5 L3.9,28.6 L3.8,29.1 L3.0,29.0ZM4.4,27.4 L5.3,27.5 L5.2,28.0 L4.4,27.9ZM3.9,27.3 L4.7,27.4 L4.7,27.9 L3.8,27.9ZM3.3,27.9 L4.1,28.0 L4.0,28.5 L3.2,28.4ZM9.0,28.0 L9.9,28.1 L9.8,28.7 L8.8,28.6ZM9.0,27.7 L9.9,27.7 L9.8,28.3 L8.9,28.3ZM7.9,28.2 L8.8,28.3 L8.7,28.9 L7.8,28.8ZM9.3,28.0 L10.2,28.0 L10.1,28.6 L9.2,28.6ZM8.6,28.9 L9.6,29.0 L9.4,29.6 L8.5,29.5ZM7.9,28.2 L8.9,28.3 L8.7,28.9 L7.8,28.8ZM15.9,28.5 L16.9,28.5 L16.7,29.2 L15.7,29.2ZM15.7,28.1 L16.8,28.2 L16.6,28.9 L15.5,28.8ZM14.6,28.8 L15.6,28.9 L15.4,29.6 L14.4,29.5ZM14.4,29.3 L15.5,29.4 L15.3,30.1 L14.3,30.0ZM14.5,28.4 L15.5,28.5 L15.3,29.1 L14.3,29.1ZM14.4,28.7 L15.4,28.8 L15.2,29.5 L14.2,29.4ZM20.2,28.6 L21.3,28.6 L21.1,29.4 L20.0,29.3ZM20.0,29.8 L21.1,29.9 L20.8,30.6 L19.8,30.5ZM21.8,28.6 L22.9,28.6 L22.6,29.4 L21.5,29.3ZM21.5,29.1 L22.6,29.1 L22.3,29.9 L21.3,29.8ZM20.5,29.5 L21.6,29.6 L21.3,30.4 L20.3,30.3ZM21.9,29.0 L23.0,29.1 L22.7,29.9 L21.6,29.8ZM26.8,28.5 L27.9,28.6 L27.6,29.4 L26.4,29.3ZM28.4,29.9 L29.5,30.0 L29.2,30.9 L28.0,30.8ZM26.9,28.5 L28.0,28.5 L27.7,29.4 L26.5,29.3ZM27.2,28.8 L28.4,28.9 L28.0,29.7 L26.9,29.7ZM27.4,28.5 L28.5,28.6 L28.2,29.4 L27.0,29.4ZM26.8,29.6 L28.0,29.7 L27.6,30.6 L26.5,30.5ZM34.1,30.7 L35.3,30.8 L34.9,31.8 L33.7,31.6ZM34.5,31.0 L35.7,31.1 L35.3,32.1 L34.1,31.9ZM33.4,31.0 L34.6,31.1 L34.2,32.1 L33.0,32.0ZM33.6,30.8 L34.8,30.9 L34.3,31.9 L33.2,31.8ZM33.2,30.6 L34.4,30.7 L34.0,31.7 L32.8,31.6ZM34.9,30.9 L36.1,30.9 L35.7,31.9 L34.5,31.8ZM41.4,31.7 L42.6,31.8 L42.1,32.9 L40.9,32.8ZM41.3,30.4 L42.6,30.5 L42.1,31.6 L40.8,31.5ZM41.0,29.4 L42.2,29.4 L41.7,30.5 L40.5,30.4ZM42.0,29.4 L43.3,29.4 L42.8,30.5 L41.5,30.4ZM41.1,30.0 L42.3,30.1 L41.8,31.1 L40.6,31.0ZM42.4,30.5 L43.6,30.6 L43.1,31.7 L41.9,31.6ZM47.4,31.5 L48.6,31.6 L48.0,32.8 L46.8,32.7ZM48.8,31.9 L50.0,32.0 L49.4,33.1 L48.2,33.0ZM48.6,29.7 L49.9,29.8 L49.3,30.9 L48.0,30.8ZM47.3,31.6 L48.6,31.7 L48.0,32.8 L46.7,32.7ZM50.8,30.0 L52.1,30.1 L51.5,31.3 L50.2,31.2ZM48.0,29.7 L49.3,29.8 L48.7,30.9 L47.5,30.8ZM55.1,32.4 L56.4,32.5 L55.7,33.7 L54.4,33.6ZM57.7,30.6 L59.1,30.6 L58.4,31.9 L57.1,31.8ZM54.9,32.5 L56.2,32.6 L55.5,33.9 L54.2,33.8ZM56.6,30.3 L57.9,30.3 L57.3,31.6 L56.0,31.5ZM56.1,30.9 L57.5,31.0 L56.8,32.2 L55.5,32.1ZM58.0,30.5 L59.4,30.6 L58.7,31.9 L57.4,31.8ZM63.0,33.5 L64.3,33.6 L63.5,34.9 L62.2,34.8ZM64.0,30.6 L65.3,30.7 L64.6,32.0 L63.2,31.9ZM65.8,31.8 L67.2,31.9 L66.4,33.3 L65.0,33.2ZM62.5,32.5 L63.8,32.6 L63.0,34.0 L61.7,33.8ZM64.4,30.9 L65.8,30.9 L65.0,32.3 L63.7,32.2ZM63.2,33.0 L64.6,33.1 L63.8,34.4 L62.5,34.3ZM73.4,31.7 L74.7,31.7 L73.9,33.2 L72.5,33.1ZM70.7,33.1 L72.1,33.2 L71.3,34.7 L69.9,34.5ZM70.4,34.0 L71.7,34.2 L70.9,35.6 L69.5,35.5ZM72.9,32.9 L74.3,32.9 L73.4,34.4 L72.1,34.3ZM73.2,32.1 L74.6,32.2 L73.7,33.7 L72.3,33.5ZM72.2,32.1 L73.6,32.1 L72.7,33.6 L71.4,33.5ZM79.4,34.8 L80.8,34.9 L79.8,36.5 L78.4,36.4ZM79.3,33.0 L80.8,33.1 L79.8,34.7 L78.4,34.6ZM78.7,34.0 L80.1,34.1 L79.2,35.7 L77.8,35.6ZM82.3,32.5 L83.7,32.5 L82.7,34.2 L81.3,34.0ZM80.3,33.2 L81.7,33.3 L80.8,34.9 L79.4,34.8ZM81.1,34.1 L82.5,34.2 L81.6,35.8 L80.2,35.7ZM89.6,33.3 L91.1,33.4 L90.0,35.1 L88.6,35.0ZM90.0,33.2 L91.5,33.3 L90.4,35.0 L89.0,34.9ZM89.1,31.9 L90.6,31.9 L89.5,33.6 L88.1,33.5ZM90.1,33.1 L91.6,33.2 L90.5,34.9 L89.1,34.8ZM90.3,32.6 L91.7,32.7 L90.6,34.4 L89.2,34.3ZM87.7,35.5 L89.1,35.6 L88.0,37.3 L86.6,37.2ZM97.4,35.8 L98.8,35.9 L97.7,37.7 L96.3,37.6ZM97.8,35.4 L99.3,35.5 L98.1,37.4 L96.7,37.2ZM95.0,35.7 L96.4,35.8 L95.3,37.6 L93.8,37.4ZM97.9,35.7 L99.3,35.8 L98.1,37.6 L96.7,37.5ZM98.4,34.3 L99.9,34.4 L98.7,36.3 L97.3,36.2ZM96.3,34.4 L97.7,34.5 L96.6,36.3 L95.2,36.2ZM108.0,34.4 L109.4,34.5 L108.2,36.4 L106.7,36.3ZM105.1,35.1 L106.6,35.2 L105.3,37.1 L103.9,37.0ZM106.9,35.6 L108.4,35.7 L107.1,37.7 L105.7,37.5ZM108.2,32.8 L109.7,32.9 L108.5,34.8 L107.0,34.7ZM107.8,34.0 L109.3,34.1 L108.1,36.1 L106.6,36.0ZM105.9,36.2 L107.4,36.4 L106.2,38.3 L104.7,38.2ZM0.1,30.1 L0.6,30.2 L0.6,30.7 L0.0,30.6ZM0.1,30.0 L0.7,30.1 L0.7,30.6 L0.1,30.5ZM0.2,30.2 L0.7,30.2 L0.7,30.7 L0.1,30.6ZM0.1,30.5 L0.6,30.5 L0.6,31.0 L0.1,30.9ZM-0.8,30.4 L-0.2,30.5 L-0.2,31.0 L-0.8,30.9ZM0.2,30.5 L0.8,30.5 L0.8,31.0 L0.2,30.9ZM3.5,31.5 L4.2,31.7 L4.2,32.2 L3.4,32.1ZM4.4,31.2 L5.1,31.3 L5.1,31.9 L4.3,31.7ZM3.4,31.2 L4.2,31.4 L4.1,31.9 L3.4,31.8ZM3.3,31.0 L4.1,31.1 L4.0,31.7 L3.3,31.6ZM3.9,30.6 L4.7,30.8 L4.6,31.3 L3.8,31.2ZM3.0,31.0 L3.8,31.1 L3.7,31.6 L3.0,31.5ZM8.5,31.2 L9.4,31.3 L9.3,31.9 L8.4,31.8ZM8.2,32.4 L9.1,32.5 L9.0,33.2 L8.1,33.0ZM9.0,31.3 L9.9,31.4 L9.8,32.0 L8.9,31.9ZM7.7,32.4 L8.5,32.6 L8.4,33.2 L7.6,33.0ZM9.2,31.6 L10.1,31.7 L10.0,32.4 L9.1,32.2ZM8.0,32.0 L8.8,32.2 L8.7,32.8 L7.9,32.6ZM13.0,33.2 L14.0,33.4 L13.8,34.0 L12.8,33.9ZM13.5,32.9 L14.4,33.0 L14.2,33.7 L13.3,33.6ZM14.7,32.0 L15.7,32.2 L15.5,32.9 L14.5,32.7ZM13.6,32.3 L14.6,32.4 L14.4,33.1 L13.5,33.0ZM13.8,33.2 L14.8,33.3 L14.6,34.0 L13.7,33.9ZM14.1,32.0 L15.0,32.1 L14.8,32.8 L13.9,32.7ZM19.2,32.7 L20.2,32.9 L20.0,33.7 L19.0,33.5ZM18.2,33.6 L19.2,33.8 L18.9,34.6 L17.9,34.4ZM19.7,34.4 L20.7,34.6 L20.4,35.4 L19.4,35.2ZM18.3,34.3 L19.3,34.5 L19.0,35.3 L18.0,35.1ZM20.3,34.3 L21.3,34.4 L21.0,35.2 L20.0,35.0ZM20.2,33.6 L21.2,33.7 L20.9,34.5 L19.9,34.3ZM26.6,35.0 L27.6,35.1 L27.3,36.0 L26.2,35.8ZM25.2,33.9 L26.2,34.1 L25.9,34.9 L24.8,34.8ZM25.6,35.6 L26.7,35.8 L26.4,36.7 L25.3,36.5ZM26.2,34.2 L27.3,34.4 L27.0,35.3 L25.9,35.1ZM25.4,34.5 L26.5,34.6 L26.1,35.5 L25.1,35.3ZM24.4,34.7 L25.4,34.9 L25.1,35.7 L24.0,35.5ZM31.8,35.7 L32.9,35.9 L32.5,36.8 L31.4,36.6ZM32.7,36.9 L33.8,37.1 L33.3,38.1 L32.2,37.9ZM32.0,34.9 L33.1,35.1 L32.7,36.0 L31.6,35.8ZM31.7,34.5 L32.8,34.6 L32.4,35.6 L31.3,35.4ZM31.3,36.2 L32.4,36.4 L32.0,37.3 L30.9,37.1ZM31.3,36.6 L32.4,36.8 L32.0,37.8 L30.9,37.6ZM39.7,35.7 L40.8,35.9 L40.3,36.9 L39.2,36.7ZM38.5,36.2 L39.6,36.4 L39.1,37.5 L38.0,37.3ZM38.1,37.2 L39.2,37.3 L38.7,38.4 L37.6,38.2ZM38.2,36.7 L39.4,36.9 L38.9,38.0 L37.7,37.8ZM39.0,37.3 L40.2,37.5 L39.7,38.6 L38.5,38.4ZM37.6,36.0 L38.8,36.2 L38.3,37.2 L37.1,37.0ZM43.8,38.5 L45.0,38.7 L44.4,39.8 L43.2,39.6ZM45.6,36.3 L46.8,36.5 L46.2,37.6 L45.0,37.4ZM45.1,38.3 L46.3,38.5 L45.7,39.7 L44.5,39.5ZM44.6,37.3 L45.8,37.5 L45.2,38.6 L44.0,38.4ZM43.8,38.1 L45.0,38.3 L44.4,39.4 L43.3,39.2ZM45.4,37.0 L46.6,37.2 L46.0,38.4 L44.8,38.2ZM52.3,38.4 L53.5,38.6 L52.9,39.8 L51.6,39.6ZM54.4,37.6 L55.6,37.8 L54.9,39.0 L53.7,38.8ZM53.2,39.2 L54.4,39.4 L53.7,40.7 L52.5,40.5ZM52.2,38.1 L53.4,38.3 L52.8,39.5 L51.5,39.3ZM53.1,40.4 L54.4,40.6 L53.7,41.9 L52.5,41.7ZM53.4,38.7 L54.7,38.9 L54.0,40.2 L52.8,39.9ZM58.0,41.2 L59.3,41.4 L58.5,42.8 L57.3,42.5ZM61.3,38.5 L62.6,38.7 L61.8,40.0 L60.5,39.8ZM60.9,40.9 L62.1,41.1 L61.3,42.5 L60.1,42.2ZM61.1,39.1 L62.4,39.3 L61.6,40.6 L60.4,40.4ZM61.0,39.0 L62.2,39.2 L61.4,40.5 L60.2,40.3ZM59.6,41.2 L60.9,41.4 L60.1,42.8 L58.9,42.5ZM67.5,41.0 L68.8,41.2 L68.0,42.7 L66.7,42.5ZM66.3,42.8 L67.6,43.1 L66.7,44.5 L65.5,44.3ZM68.2,40.1 L69.5,40.3 L68.6,41.8 L67.3,41.6ZM68.3,41.8 L69.6,42.0 L68.7,43.5 L67.4,43.3ZM66.3,42.8 L67.5,43.0 L66.7,44.5 L65.4,44.2ZM67.3,42.2 L68.6,42.5 L67.7,43.9 L66.4,43.7ZM73.6,44.0 L74.9,44.2 L73.9,45.8 L72.7,45.5ZM76.0,41.5 L77.3,41.7 L76.3,43.3 L75.0,43.1ZM74.8,44.0 L76.1,44.2 L75.1,45.8 L73.8,45.6ZM75.3,41.1 L76.6,41.3 L75.7,42.9 L74.4,42.7ZM73.8,41.7 L75.1,41.9 L74.2,43.5 L72.9,43.3ZM74.4,41.3 L75.7,41.5 L74.8,43.0 L73.5,42.8ZM83.5,44.7 L84.8,44.9 L83.8,46.6 L82.4,46.4ZM81.1,45.2 L82.4,45.5 L81.4,47.2 L80.1,46.9ZM83.8,43.9 L85.1,44.1 L84.0,45.8 L82.7,45.6ZM84.2,42.0 L85.5,42.2 L84.5,43.9 L83.1,43.7ZM84.2,42.9 L85.5,43.1 L84.5,44.9 L83.1,44.6ZM82.0,43.6 L83.4,43.9 L82.3,45.6 L81.0,45.3ZM90.7,47.1 L92.0,47.3 L90.9,49.1 L89.5,48.9ZM90.9,46.6 L92.3,46.9 L91.1,48.7 L89.8,48.4ZM89.5,46.4 L90.8,46.6 L89.7,48.4 L88.3,48.2ZM89.9,43.5 L91.2,43.7 L90.1,45.5 L88.8,45.2ZM90.5,44.4 L91.9,44.6 L90.8,46.5 L89.4,46.2ZM92.6,43.4 L94.0,43.6 L92.9,45.4 L91.5,45.2ZM98.4,43.9 L99.8,44.1 L98.6,46.0 L97.2,45.8ZM97.8,46.2 L99.1,46.4 L97.9,48.3 L96.5,48.1ZM98.6,44.2 L100.0,44.4 L98.7,46.3 L97.3,46.1ZM99.4,47.5 L100.8,47.7 L99.5,49.7 L98.1,49.4ZM99.9,45.1 L101.3,45.3 L100.1,47.2 L98.7,47.0ZM99.3,46.6 L100.7,46.8 L99.4,48.7 L98.1,48.5ZM-0.1,33.7 L0.4,33.8 L0.3,34.3 L-0.2,34.2ZM-0.9,33.5 L-0.3,33.6 L-0.4,34.1 L-0.9,34.0ZM-1.0,33.6 L-0.4,33.7 L-0.5,34.2 L-1.0,34.0ZM0.2,33.8 L0.7,33.9 L0.6,34.4 L0.1,34.3ZM-0.3,33.1 L0.2,33.3 L0.2,33.7 L-0.3,33.6ZM-0.5,33.0 L-0.0,33.2 L-0.0,33.6 L-0.5,33.5ZM3.2,34.7 L3.9,34.9 L3.8,35.5 L3.1,35.2ZM3.3,33.8 L4.0,34.0 L4.0,34.6 L3.2,34.4ZM3.3,34.8 L4.0,35.0 L3.9,35.5 L3.2,35.3ZM2.4,34.1 L3.1,34.3 L3.1,34.8 L2.4,34.6ZM3.9,34.3 L4.6,34.5 L4.5,35.0 L3.8,34.8ZM2.6,34.0 L3.3,34.2 L3.2,34.8 L2.5,34.6ZM6.7,35.2 L7.5,35.4 L7.4,36.0 L6.6,35.8ZM7.7,36.0 L8.5,36.2 L8.4,36.8 L7.6,36.6ZM7.6,35.1 L8.4,35.3 L8.2,35.9 L7.4,35.7ZM8.2,36.1 L9.1,36.3 L8.9,36.9 L8.1,36.7ZM6.8,35.2 L7.6,35.4 L7.5,36.0 L6.7,35.8ZM7.5,35.4 L8.3,35.6 L8.1,36.2 L7.3,36.0ZM11.9,36.8 L12.7,37.0 L12.6,37.7 L11.7,37.4ZM11.6,37.0 L12.5,37.2 L12.3,37.9 L11.4,37.6ZM13.5,36.9 L14.3,37.2 L14.1,37.9 L13.3,37.6ZM12.6,36.7 L13.5,36.9 L13.3,37.6 L12.4,37.4ZM11.9,36.5 L12.8,36.7 L12.6,37.4 L11.8,37.2ZM12.1,36.1 L12.9,36.3 L12.8,37.0 L11.9,36.8ZM17.0,38.6 L17.9,38.9 L17.7,39.7 L16.8,39.4ZM17.3,37.2 L18.2,37.4 L18.0,38.2 L17.0,37.9ZM17.2,38.4 L18.1,38.7 L17.8,39.4 L16.9,39.2ZM17.9,39.1 L18.8,39.3 L18.5,40.1 L17.6,39.8ZM17.1,38.3 L18.1,38.6 L17.8,39.3 L16.9,39.1ZM17.2,38.8 L18.1,39.0 L17.8,39.8 L16.9,39.5ZM22.1,40.0 L23.1,40.3 L22.8,41.1 L21.8,40.8ZM23.9,39.7 L24.9,39.9 L24.5,40.8 L23.6,40.5ZM24.2,38.8 L25.2,39.0 L24.8,39.9 L23.8,39.6ZM22.5,39.8 L23.5,40.0 L23.1,40.9 L22.2,40.6ZM23.2,38.6 L24.2,38.8 L23.9,39.7 L22.9,39.4ZM23.3,39.7 L24.3,39.9 L24.0,40.8 L23.0,40.5ZM29.3,40.6 L30.3,40.9 L29.9,41.8 L28.9,41.6ZM30.5,41.7 L31.5,41.9 L31.1,42.9 L30.1,42.6ZM29.6,41.2 L30.6,41.4 L30.2,42.4 L29.2,42.1ZM29.8,40.1 L30.8,40.3 L30.4,41.3 L29.3,41.0ZM28.5,40.8 L29.5,41.0 L29.1,42.0 L28.1,41.7ZM29.3,40.6 L30.3,40.8 L29.9,41.8 L28.9,41.5ZM37.0,42.0 L38.1,42.2 L37.5,43.3 L36.5,43.0ZM34.8,43.2 L35.9,43.4 L35.4,44.5 L34.3,44.2ZM35.9,44.1 L36.9,44.4 L36.4,45.5 L35.4,45.1ZM36.2,42.0 L37.3,42.3 L36.7,43.4 L35.7,43.1ZM36.8,42.3 L37.8,42.6 L37.3,43.6 L36.3,43.4ZM34.8,43.7 L35.9,44.0 L35.4,45.1 L34.3,44.8ZM41.5,44.8 L42.6,45.1 L42.0,46.3 L40.9,46.0ZM42.5,43.4 L43.6,43.7 L43.0,44.8 L41.9,44.5ZM41.6,44.3 L42.7,44.6 L42.2,45.7 L41.1,45.4ZM41.7,44.3 L42.8,44.6 L42.3,45.7 L41.2,45.4ZM42.1,44.0 L43.3,44.3 L42.7,45.4 L41.6,45.1ZM42.4,43.3 L43.5,43.6 L42.9,44.8 L41.8,44.5ZM49.5,45.8 L50.6,46.1 L49.9,47.4 L48.8,47.0ZM49.0,45.5 L50.2,45.8 L49.5,47.0 L48.3,46.7ZM49.0,46.9 L50.1,47.2 L49.5,48.5 L48.3,48.2ZM49.3,45.8 L50.5,46.1 L49.8,47.4 L48.7,47.1ZM48.1,45.0 L49.3,45.3 L48.6,46.5 L47.5,46.2ZM50.6,45.1 L51.8,45.4 L51.1,46.7 L49.9,46.4ZM55.4,48.0 L56.6,48.3 L55.8,49.6 L54.7,49.3ZM54.8,47.9 L55.9,48.2 L55.2,49.5 L54.0,49.2ZM53.8,48.5 L54.9,48.8 L54.2,50.2 L53.0,49.8ZM55.1,46.1 L56.3,46.4 L55.6,47.7 L54.4,47.4ZM55.3,48.3 L56.4,48.6 L55.7,50.0 L54.5,49.7ZM56.5,48.7 L57.6,49.0 L56.8,50.4 L55.7,50.0ZM63.0,51.1 L64.2,51.4 L63.3,52.9 L62.1,52.6ZM62.8,48.7 L64.0,49.0 L63.1,50.4 L61.9,50.1ZM62.9,48.3 L64.1,48.6 L63.2,50.1 L62.0,49.8ZM61.8,48.8 L63.0,49.1 L62.1,50.6 L60.9,50.3ZM63.2,48.1 L64.4,48.4 L63.5,49.9 L62.3,49.5ZM63.2,49.6 L64.4,49.9 L63.6,51.4 L62.4,51.0ZM69.6,50.3 L70.9,50.6 L69.9,52.1 L68.7,51.8ZM68.9,51.6 L70.1,52.0 L69.2,53.5 L68.0,53.2ZM69.4,51.4 L70.6,51.7 L69.6,53.3 L68.4,53.0ZM69.1,51.4 L70.3,51.7 L69.4,53.3 L68.2,53.0ZM68.2,53.3 L69.4,53.7 L68.4,55.3 L67.3,54.9ZM69.1,52.2 L70.3,52.5 L69.4,54.1 L68.2,53.7ZM77.5,53.6 L78.7,53.9 L77.7,55.6 L76.4,55.3ZM76.5,54.2 L77.7,54.6 L76.7,56.3 L75.5,55.9ZM78.2,51.7 L79.5,52.0 L78.4,53.7 L77.2,53.4ZM77.4,54.2 L78.7,54.5 L77.6,56.2 L76.4,55.9ZM75.2,53.5 L76.4,53.8 L75.4,55.5 L74.1,55.1ZM77.7,52.9 L78.9,53.2 L77.9,54.9 L76.6,54.6ZM85.3,53.7 L86.6,54.0 L85.4,55.8 L84.1,55.5ZM85.3,55.2 L86.6,55.5 L85.4,57.3 L84.2,57.0ZM83.4,55.1 L84.7,55.4 L83.5,57.2 L82.3,56.9ZM84.5,53.9 L85.8,54.2 L84.6,56.0 L83.4,55.7ZM83.2,54.9 L84.5,55.2 L83.4,57.0 L82.1,56.7ZM83.2,55.2 L84.5,55.5 L83.3,57.3 L82.1,57.0ZM90.9,58.2 L92.2,58.5 L90.9,60.4 L89.7,60.1ZM93.3,56.0 L94.6,56.4 L93.4,58.3 L92.1,58.0ZM91.8,58.7 L93.1,59.1 L91.8,61.0 L90.6,60.7ZM90.8,57.9 L92.1,58.2 L90.9,60.2 L89.6,59.8ZM93.5,55.8 L94.8,56.1 L93.6,58.1 L92.3,57.7ZM92.5,55.9 L93.8,56.2 L92.6,58.1 L91.3,57.8ZM-1.0,36.4 L-0.6,36.6 L-0.6,37.1 L-1.0,36.9ZM-0.0,35.9 L0.4,36.1 L0.4,36.6 L-0.1,36.4ZM-0.8,36.3 L-0.4,36.5 L-0.4,37.0 L-0.9,36.8ZM-0.2,36.0 L0.3,36.2 L0.3,36.7 L-0.2,36.5ZM-0.5,36.2 L-0.0,36.4 L-0.1,36.9 L-0.5,36.7ZM-0.5,35.8 L-0.0,36.0 L-0.1,36.5 L-0.5,36.3ZM3.4,38.3 L4.0,38.5 L3.9,39.1 L3.3,38.8ZM2.3,37.9 L3.0,38.1 L2.9,38.7 L2.3,38.4ZM2.4,36.9 L3.0,37.2 L3.0,37.7 L2.3,37.4ZM2.8,37.1 L3.5,37.3 L3.4,37.9 L2.7,37.6ZM2.4,36.7 L3.1,37.0 L3.0,37.5 L2.3,37.3ZM3.4,38.0 L4.0,38.2 L3.9,38.8 L3.3,38.5ZM7.7,39.2 L8.4,39.5 L8.3,40.1 L7.5,39.8ZM7.4,39.6 L8.1,39.9 L8.0,40.5 L7.2,40.2ZM7.5,38.7 L8.3,39.0 L8.2,39.6 L7.4,39.3ZM6.7,39.1 L7.4,39.3 L7.3,40.0 L6.6,39.7ZM6.2,38.5 L6.9,38.7 L6.8,39.3 L6.1,39.1ZM6.7,38.3 L7.4,38.6 L7.3,39.2 L6.6,38.9ZM11.2,40.7 L12.0,41.0 L11.8,41.7 L11.0,41.4ZM11.5,40.8 L12.3,41.1 L12.1,41.8 L11.3,41.5ZM12.1,40.5 L12.9,40.8 L12.7,41.6 L11.9,41.2ZM11.9,41.5 L12.7,41.9 L12.4,42.6 L11.7,42.2ZM11.7,40.3 L12.5,40.6 L12.3,41.3 L11.5,41.0ZM12.2,41.7 L13.0,42.0 L12.8,42.7 L12.0,42.4ZM17.3,42.4 L18.2,42.7 L17.9,43.5 L17.1,43.1ZM16.3,41.8 L17.1,42.1 L16.9,42.9 L16.0,42.6ZM16.0,42.1 L16.9,42.4 L16.6,43.2 L15.8,42.9ZM15.7,42.4 L16.5,42.7 L16.3,43.5 L15.4,43.1ZM17.0,42.3 L17.8,42.6 L17.6,43.4 L16.7,43.1ZM16.6,42.3 L17.5,42.6 L17.2,43.4 L16.3,43.0ZM21.9,43.8 L22.8,44.1 L22.5,45.0 L21.6,44.6ZM22.2,45.8 L23.1,46.1 L22.7,47.0 L21.8,46.6ZM22.4,44.6 L23.3,45.0 L23.0,45.8 L22.1,45.5ZM21.2,44.9 L22.1,45.3 L21.8,46.1 L20.9,45.8ZM21.6,45.2 L22.5,45.6 L22.2,46.5 L21.3,46.1ZM21.3,44.1 L22.2,44.4 L21.9,45.3 L21.0,44.9ZM26.1,46.0 L27.1,46.4 L26.7,47.4 L25.8,47.0ZM26.3,45.5 L27.3,45.8 L26.9,46.8 L25.9,46.4ZM27.5,48.1 L28.4,48.5 L28.0,49.5 L27.0,49.1ZM26.2,46.3 L27.1,46.6 L26.7,47.6 L25.8,47.2ZM28.2,46.1 L29.2,46.4 L28.8,47.4 L27.8,47.0ZM28.0,47.4 L29.0,47.7 L28.5,48.7 L27.6,48.3ZM33.2,48.8 L34.2,49.2 L33.7,50.2 L32.7,49.9ZM33.8,48.8 L34.8,49.2 L34.2,50.2 L33.3,49.9ZM34.0,48.5 L35.0,48.9 L34.5,49.9 L33.5,49.6ZM33.9,48.4 L34.9,48.8 L34.4,49.9 L33.4,49.5ZM32.3,48.2 L33.3,48.6 L32.8,49.6 L31.9,49.3ZM32.3,49.5 L33.3,49.8 L32.8,50.9 L31.8,50.5ZM38.4,50.2 L39.4,50.5 L38.8,51.7 L37.8,51.3ZM38.1,50.9 L39.1,51.3 L38.5,52.5 L37.5,52.1ZM37.9,50.7 L38.9,51.0 L38.3,52.2 L37.3,51.8ZM38.0,51.8 L39.0,52.2 L38.4,53.3 L37.4,52.9ZM40.0,50.1 L41.0,50.5 L40.4,51.6 L39.4,51.2ZM36.9,52.0 L37.9,52.4 L37.4,53.6 L36.4,53.1ZM43.7,53.8 L44.7,54.2 L44.1,55.4 L43.0,55.0ZM45.0,54.8 L46.0,55.2 L45.3,56.5 L44.3,56.1ZM46.2,52.3 L47.2,52.6 L46.5,53.9 L45.5,53.5ZM45.6,53.6 L46.7,54.0 L46.0,55.3 L44.9,54.8ZM46.4,52.5 L47.4,52.8 L46.7,54.1 L45.7,53.7ZM46.6,52.7 L47.6,53.1 L46.9,54.4 L45.9,54.0ZM51.8,55.5 L52.9,55.9 L52.1,57.3 L51.0,56.9ZM50.1,56.5 L51.2,57.0 L50.4,58.3 L49.4,57.9ZM51.8,56.5 L52.9,56.9 L52.1,58.3 L51.0,57.9ZM51.8,54.5 L52.9,54.9 L52.1,56.2 L51.0,55.8ZM52.3,54.9 L53.4,55.3 L52.6,56.7 L51.5,56.2ZM50.4,55.3 L51.5,55.7 L50.7,57.0 L49.7,56.6ZM58.0,59.3 L59.1,59.7 L58.2,61.2 L57.2,60.8ZM57.3,57.2 L58.5,57.6 L57.6,59.1 L56.5,58.7ZM56.1,59.1 L57.1,59.6 L56.3,61.0 L55.2,60.6ZM57.9,57.2 L59.0,57.6 L58.1,59.0 L57.0,58.6ZM57.1,56.9 L58.2,57.3 L57.4,58.8 L56.3,58.4ZM55.5,59.5 L56.6,60.0 L55.7,61.4 L54.7,61.0ZM63.7,58.5 L64.8,58.9 L63.9,60.5 L62.7,60.1ZM63.6,59.7 L64.7,60.1 L63.7,61.7 L62.6,61.2ZM64.6,60.5 L65.8,60.9 L64.8,62.5 L63.7,62.1ZM64.5,60.1 L65.6,60.5 L64.7,62.1 L63.6,61.7ZM63.0,62.0 L64.1,62.5 L63.1,64.1 L62.0,63.6ZM64.7,61.1 L65.8,61.5 L64.8,63.1 L63.7,62.7ZM69.6,63.0 L70.7,63.5 L69.7,65.2 L68.6,64.7ZM70.1,62.5 L71.2,63.0 L70.2,64.6 L69.1,64.2ZM69.0,64.4 L70.1,64.8 L69.1,66.5 L68.0,66.0ZM69.0,64.9 L70.1,65.4 L69.0,67.1 L67.9,66.6ZM69.8,64.4 L71.0,64.9 L69.9,66.6 L68.8,66.1ZM71.5,63.9 L72.6,64.4 L71.5,66.1 L70.4,65.6ZM77.7,65.1 L78.9,65.5 L77.7,67.3 L76.6,66.9ZM79.3,64.2 L80.5,64.7 L79.3,66.5 L78.1,66.0ZM74.9,67.4 L76.0,67.8 L74.9,69.6 L73.7,69.1ZM78.6,64.2 L79.8,64.6 L78.7,66.4 L77.5,66.0ZM78.0,64.1 L79.2,64.5 L78.0,66.3 L76.9,65.8ZM80.0,64.3 L81.1,64.7 L80.0,66.5 L78.8,66.1ZM85.5,66.6 L86.7,67.1 L85.5,69.0 L84.3,68.6ZM84.0,67.8 L85.2,68.2 L84.0,70.2 L82.8,69.7ZM82.9,69.6 L84.1,70.1 L82.8,72.0 L81.7,71.6ZM82.6,69.0 L83.8,69.4 L82.6,71.3 L81.4,70.9ZM82.4,70.6 L83.6,71.1 L82.4,73.0 L81.2,72.5ZM84.5,68.9 L85.7,69.4 L84.4,71.3 L83.3,70.8ZM-0.3,39.2 L0.1,39.4 L0.1,39.9 L-0.3,39.7ZM-0.3,38.9 L0.1,39.2 L0.1,39.7 L-0.4,39.4ZM-0.2,39.0 L0.3,39.3 L0.2,39.8 L-0.2,39.5ZM-0.2,39.3 L0.3,39.6 L0.2,40.1 L-0.2,39.8ZM-1.0,38.3 L-0.6,38.5 L-0.6,39.0 L-1.0,38.8ZM-0.9,38.6 L-0.4,38.8 L-0.4,39.3 L-0.9,39.0ZM1.8,40.2 L2.4,40.5 L2.4,41.1 L1.8,40.7ZM2.1,40.1 L2.7,40.5 L2.6,41.0 L2.0,40.7ZM1.9,40.5 L2.5,40.8 L2.4,41.3 L1.8,41.0ZM2.0,40.2 L2.6,40.5 L2.5,41.0 L1.9,40.7ZM1.7,39.8 L2.3,40.1 L2.3,40.6 L1.7,40.3ZM1.9,40.1 L2.5,40.4 L2.5,40.9 L1.9,40.6ZM6.9,42.9 L7.6,43.2 L7.5,43.9 L6.8,43.5ZM6.3,42.0 L7.0,42.4 L6.9,43.0 L6.2,42.6ZM5.9,43.0 L6.6,43.4 L6.4,44.0 L5.8,43.6ZM5.8,42.5 L6.5,42.8 L6.4,43.4 L5.7,43.1ZM6.5,42.0 L7.2,42.4 L7.0,43.0 L6.3,42.6ZM6.3,42.3 L7.0,42.7 L6.9,43.3 L6.2,42.9ZM9.8,43.7 L10.6,44.1 L10.4,44.7 L9.7,44.4ZM9.6,44.7 L10.4,45.1 L10.2,45.8 L9.4,45.4ZM11.1,45.3 L11.9,45.7 L11.7,46.4 L10.9,46.0ZM10.4,44.9 L11.2,45.3 L11.0,46.0 L10.2,45.6ZM10.0,45.0 L10.7,45.4 L10.6,46.1 L9.8,45.7ZM11.0,44.9 L11.8,45.3 L11.6,46.0 L10.8,45.6ZM14.3,47.0 L15.0,47.4 L14.8,48.2 L14.0,47.7ZM14.0,46.6 L14.8,47.0 L14.5,47.7 L13.7,47.3ZM15.0,47.0 L15.8,47.4 L15.5,48.2 L14.8,47.8ZM13.9,47.1 L14.7,47.5 L14.4,48.3 L13.7,47.8ZM14.7,47.4 L15.5,47.8 L15.2,48.6 L14.4,48.1ZM14.3,46.6 L15.1,47.0 L14.8,47.8 L14.1,47.3ZM18.8,48.9 L19.6,49.3 L19.3,50.2 L18.4,49.7ZM19.6,49.3 L20.5,49.7 L20.1,50.6 L19.3,50.1ZM19.4,50.0 L20.3,50.5 L19.9,51.4 L19.1,50.9ZM19.2,48.9 L20.0,49.3 L19.7,50.2 L18.9,49.7ZM19.9,48.9 L20.8,49.3 L20.4,50.1 L19.6,49.7ZM19.3,48.6 L20.2,49.0 L19.8,49.9 L19.0,49.4ZM25.2,53.0 L26.1,53.4 L25.7,54.4 L24.8,53.9ZM23.9,51.9 L24.8,52.4 L24.3,53.3 L23.5,52.8ZM24.1,51.5 L25.0,51.9 L24.5,52.9 L23.7,52.4ZM25.2,53.2 L26.1,53.7 L25.7,54.6 L24.8,54.2ZM23.5,52.5 L24.3,53.0 L23.9,53.9 L23.1,53.4ZM24.3,52.5 L25.2,53.0 L24.7,54.0 L23.9,53.5ZM29.1,54.9 L30.0,55.4 L29.5,56.5 L28.7,56.0ZM30.9,55.2 L31.8,55.7 L31.3,56.7 L30.4,56.3ZM29.2,56.0 L30.1,56.5 L29.6,57.5 L28.8,57.0ZM28.7,55.6 L29.6,56.1 L29.1,57.1 L28.2,56.6ZM30.9,55.4 L31.8,55.9 L31.3,56.9 L30.4,56.4ZM30.2,54.5 L31.1,54.9 L30.6,56.0 L29.7,55.5ZM35.7,59.5 L36.6,60.0 L36.0,61.2 L35.1,60.7ZM35.1,57.9 L36.1,58.4 L35.5,59.6 L34.5,59.1ZM35.8,56.8 L36.7,57.2 L36.1,58.4 L35.2,57.9ZM36.1,56.9 L37.0,57.4 L36.4,58.6 L35.5,58.1ZM36.6,57.4 L37.5,57.9 L36.9,59.1 L36.0,58.6ZM34.4,56.9 L35.4,57.4 L34.8,58.6 L33.9,58.1ZM40.3,59.1 L41.3,59.6 L40.7,60.9 L39.7,60.3ZM40.8,60.8 L41.8,61.3 L41.1,62.6 L40.1,62.1ZM39.2,61.6 L40.1,62.1 L39.5,63.3 L38.5,62.8ZM39.7,62.0 L40.6,62.5 L39.9,63.8 L39.0,63.2ZM39.9,59.8 L40.9,60.3 L40.2,61.6 L39.3,61.1ZM41.7,61.3 L42.6,61.8 L41.9,63.0 L41.0,62.5ZM47.0,65.3 L48.0,65.8 L47.2,67.2 L46.2,66.7ZM46.1,62.4 L47.1,62.9 L46.3,64.2 L45.4,63.7ZM47.1,63.1 L48.1,63.6 L47.3,65.0 L46.3,64.5ZM46.2,64.8 L47.2,65.3 L46.4,66.7 L45.5,66.2ZM46.5,63.0 L47.5,63.5 L46.7,64.8 L45.7,64.3ZM46.9,65.4 L47.9,66.0 L47.1,67.4 L46.1,66.8ZM52.6,65.0 L53.6,65.5 L52.8,66.9 L51.8,66.4ZM51.5,67.6 L52.5,68.2 L51.7,69.6 L50.7,69.1ZM53.5,66.6 L54.5,67.2 L53.6,68.6 L52.6,68.1ZM52.5,65.5 L53.6,66.0 L52.7,67.5 L51.7,67.0ZM51.4,67.1 L52.4,67.6 L51.5,69.1 L50.5,68.6ZM53.0,67.0 L54.0,67.5 L53.1,69.0 L52.1,68.5ZM58.4,68.3 L59.4,68.8 L58.5,70.4 L57.5,69.9ZM60.2,69.0 L61.3,69.5 L60.3,71.1 L59.3,70.6ZM60.0,69.5 L61.1,70.0 L60.1,71.6 L59.1,71.1ZM58.5,69.9 L59.5,70.4 L58.6,72.0 L57.6,71.4ZM58.2,71.7 L59.2,72.3 L58.2,73.9 L57.2,73.3ZM57.8,69.7 L58.8,70.3 L57.8,71.8 L56.8,71.3ZM63.9,74.3 L65.0,74.9 L63.9,76.6 L62.9,76.0ZM64.7,71.8 L65.7,72.3 L64.7,74.0 L63.6,73.5ZM63.8,73.0 L64.9,73.6 L63.8,75.3 L62.8,74.7ZM65.9,72.7 L67.0,73.3 L65.9,75.0 L64.9,74.4ZM64.9,72.0 L65.9,72.5 L64.9,74.2 L63.9,73.7ZM64.6,71.1 L65.6,71.6 L64.6,73.3 L63.5,72.7ZM69.3,77.8 L70.4,78.4 L69.3,80.2 L68.2,79.6ZM69.9,78.1 L71.0,78.6 L69.8,80.5 L68.8,79.9ZM68.4,77.6 L69.5,78.1 L68.3,79.9 L67.3,79.3ZM70.3,77.2 L71.3,77.8 L70.2,79.6 L69.1,79.0ZM68.7,77.5 L69.7,78.0 L68.6,79.8 L67.5,79.2ZM70.9,78.0 L71.9,78.6 L70.8,80.4 L69.7,79.8ZM77.0,78.8 L78.1,79.4 L76.9,81.3 L75.8,80.7ZM77.0,79.7 L78.1,80.3 L76.9,82.2 L75.8,81.7ZM77.6,78.2 L78.7,78.8 L77.5,80.7 L76.4,80.1ZM77.2,80.0 L78.3,80.5 L77.1,82.5 L76.0,81.9ZM78.0,78.4 L79.1,79.0 L77.8,80.9 L76.7,80.3ZM77.4,80.3 L78.5,80.9 L77.3,82.8 L76.2,82.2Z" fill="#d0d0d0"/><polygon points="63.3,138.0 101.3,118.0 136.3,95.0 165.3,70.0 182.3,44.0 190.3,21.0 193.3,0.0 201.3,0.0 203.3,19.0 202.3,39.0 199.3,64.0 191.3,90.0 176.3,116.0 151.3,138.0" fill="#2c2c2c" /><path d="M76.3,130.0 L101.3,117.0 L136.3,94.0 L165.3,69.0" stroke="#6e6e6e" stroke-width="4.5" fill="none"/><path d="M167.3,66.0 L182.3,43.0 L191.3,20.0" stroke="#d8d8d8" stroke-width="3.5" fill="none"/><path d="M85.3,138.0 L120.0,117.5 L150.1,93.8 L173.8,68.5 L187.3,42.8 L193.6,20.5 L195.3,0.0" stroke="#4a4a4a" stroke-width="1.0" fill="none"/><path d="M107.3,138.0 L138.8,117.0 L163.8,92.5 L182.3,67.0 L192.3,41.5 L196.8,20.0 L197.3,0.0" stroke="#4a4a4a" stroke-width="1.0" fill="none"/><path d="M129.3,138.0 L157.6,116.5 L177.6,91.2 L190.8,65.5 L197.3,40.2 L200.1,19.5 L199.3,0.0" stroke="#4a4a4a" stroke-width="1.0" fill="none"/><polygon points="146.3,138.0 186.3,120.0 216.3,96.0 216.3,138.0" fill="#303030" /><polygon points="185.3,0.0 199.3,0.0 198.3,18.0 188.3,15.0" fill="#262626" /></svg>
<div class="a" style="left:48.10px;top:253.20px;width:216.10px;height:12.20px;background:#efeeec"></div>
<div class="a" style="left:48.90px;top:254.50px;width:6.60px;height:9.00px;background:#f4f4f2;border:0.6px solid #c8c8c8"></div>
<div class="a" style="left:857px;top:76.8px;width:215.4px;height:428.2px;background:#f2f1f0;border-radius:3px 3px 0 0;box-shadow:0 0 2.5px rgba(0,0,0,0.55)"></div>
<div class="a" style="left:857.00px;top:76.80px;width:215.40px;height:15.60px;background:linear-gradient(#4a4944,#3c3b37);border-radius:4px 4px 0 0"></div>
<svg class="a" style="left:864.30px;top:81.10px;" width="8.00" height="8.00" viewBox="0 0 8.00 8.00"><circle cx="4" cy="4" r="3.8" fill="#4b4a45" stroke="#57564f" stroke-width="0.6"/><path d="M2.6 2.6 L5.4 5.4 M5.4 2.6 L2.6 5.4" stroke="#34332f" stroke-width="0.8"/></svg>
<svg class="a" style="left:874.60px;top:81.10px;" width="8.00" height="8.00" viewBox="0 0 8.00 8.00"><circle cx="4" cy="4" r="3.8" fill="#4b4a45" stroke="#57564f" stroke-width="0.6"/><rect x="2.4" y="3.7" width="3.2" height="0.8" fill="#34332f"/></svg>
<svg class="a" style="left:885.00px;top:81.10px;" width="8.00" height="8.00" viewBox="0 0 8.00 8.00"><circle cx="4" cy="4" r="3.8" fill="#4b4a45" stroke="#57564f" stroke-width="0.6"/><rect x="2.6" y="2.6" width="2.8" height="2.8" fill="none" stroke="#34332f" stroke-width="0.7"/></svg>
<div class="t" style="left:900.70px;top:81.10px;font-size:8.8px;color:#85837c;font-weight:bold;">rqt_plot__Plot - rqt</div>
<div class="a" style="left:857.00px;top:92.40px;width:215.40px;height:412.60px;background:#f2f1f0"></div>
<svg class="a" style="left:858.40px;top:96.50px;" width="7.60" height="7.00" viewBox="0 0 7.60 7.00"><rect x="0" y="0" width="7.6" height="7" fill="#222"/><path d="M0.5 4 H2.5 L3.5 2 L4.5 5 L5.5 3.5 H7" stroke="#9f9" stroke-width="0.5" fill="none"/></svg>
<div class="t" style="left:866.70px;top:96.10px;font-size:9.0px;color:#444;">MatPlot</div>
<div class="t" style="left:1022.60px;top:96.25px;font-size:8.5px;color:#555;">D</div>
<svg class="a" style="left:1030.00px;top:95.50px;" width="9.00" height="9.00" viewBox="0 0 9.00 9.00"><circle cx="4.5" cy="4.5" r="4" fill="#d4d4d4"/><circle cx="4.5" cy="4.5" r="2" fill="#eee"/></svg>
<svg class="a" style="left:1039.50px;top:95.20px;" width="9.50" height="9.50" viewBox="0 0 9.50 9.50"><circle cx="4.75" cy="4.75" r="4.5" fill="#3a7ac0"/><text x="2.4" y="7.8" font-size="7.5" font-weight="bold" fill="#fff" font-family="Liberation Sans">?</text></svg>
<div class="t" style="left:1056.80px;top:96.35px;font-size:8.5px;color:#444;">-</div>
<div class="t" style="left:1064.60px;top:96.35px;font-size:8.5px;color:#444;">O</div>
<div class="t" style="left:861.40px;top:111.90px;font-size:8.2px;color:#444;">Topic</div>
<div class="a" style="left:882.30px;top:108.40px;width:31.70px;height:13.80px;background:#fff;border:0.8px solid #b6b4b0;border-radius:2px"></div>
<div class="t" style="left:882.80px;top:111.87px;font-size:8.06px;color:#333;">reErrGT</div>
<div class="btn" style="left:916px;top:108.5px;width:19.5px;height:13.8px"></div>
<svg class="a" style="left:921.00px;top:110.60px;" width="9.50" height="9.50" viewBox="0 0 9.50 9.50"><path d="M3.2 0.5 H6.3 V3.2 H9 V6.3 H6.3 V9 H3.2 V6.3 H0.5 V3.2 H3.2 Z" fill="#8ccc4c" stroke="#6aa830" stroke-width="0.4"/></svg>
<div class="btn" style="left:937.4px;top:108.5px;width:32px;height:13.8px"></div>
<div class="a" style="left:948.50px;top:114.00px;width:9.50px;height:2.60px;background:#e05a3a;border-radius:1px"></div>
<svg class="a" style="left:961.50px;top:114.00px;" width="4.50" height="3.00" viewBox="0 0 4.50 3.00"><path d="M0 0 H4.5 L2.25 3 Z" fill="#888"/></svg>
<svg class="a" style="left:971.60px;top:111.00px;" width="8.80" height="8.80" viewBox="0 0 8.80 8.80"><rect x="0.4" y="0.4" width="8" height="8" rx="1" fill="#e8653a" stroke="#c85a30" stroke-width="0.6"/><path d="M1.8 4.2 L3.8 6.4 L7.2 1.6" fill="none" stroke="#fff3ee" stroke-width="1.1"/></svg>
<div class="t" style="left:984.50px;top:111.38px;font-size:8.85px;color:#444;">autoscroll</div>
<div class="btn" style="left:1026.8px;top:108.8px;width:19.9px;height:13px"></div>
<div class="a" style="left:1033.50px;top:111.80px;width:2.40px;height:7.00px;background:#bbb;border:0.4px solid #888"></div>
<div class="a" style="left:1037.30px;top:111.80px;width:2.40px;height:7.00px;background:#bbb;border:0.4px solid #888"></div>
<div class="btn" style="left:1048.8px;top:108.8px;width:19.9px;height:13px"></div>
<svg class="a" style="left:1053.50px;top:112.50px;" width="10.00" height="6.00" viewBox="0 0 10.00 6.00"><path d="M0.5 3 L2.5 0.5 H9.5 V5.5 H2.5 Z" fill="none" stroke="#666" stroke-width="0.7"/><path d="M4.5 1.5 L7.5 4.5 M7.5 1.5 L4.5 4.5" stroke="#444" stroke-width="0.7"/></svg>
<svg class="a" style="left:872.60px;top:141.00px;" width="13.10" height="13.00" viewBox="0 0 13.10 13.00"><path d="M0.5 6.5 L6.5 0.8 L12.5 6.5" fill="none" stroke="#b02a1a" stroke-width="1.5"/><path d="M2.5 6 V12.5 H10.5 V6 L6.5 2.5 Z" fill="#f0d8a0" stroke="#a08050" stroke-width="0.5"/><rect x="5" y="8" width="3" height="4.5" fill="#e8a030"/></svg>
<svg class="a" style="left:893.70px;top:141.50px;" width="12.30" height="12.30" viewBox="0 0 12.30 12.30"><circle cx="6.15" cy="6.15" r="6" fill="#2a88b8"/><circle cx="6.15" cy="6.15" r="4.5" fill="#3aa0d0"/><path d="M8.5 6.15 H4 M6 4 L3.8 6.15 L6 8.3" stroke="#e8f4fa" stroke-width="1.3" fill="none"/></svg>
<svg class="a" style="left:914.50px;top:141.50px;" width="12.30" height="12.30" viewBox="0 0 12.30 12.30"><circle cx="6.15" cy="6.15" r="6" fill="#2a88b8"/><circle cx="6.15" cy="6.15" r="4.5" fill="#3aa0d0"/><path d="M3.8 6.15 H8.3 M6.3 4 L8.5 6.15 L6.3 8.3" stroke="#e8f4fa" stroke-width="1.3" fill="none"/></svg>
<div class="a" style="left:933.50px;top:140.00px;width:0.70px;height:15.00px;background:#d6d4d0"></div>
<div class="btn" style="left:938.1px;top:138.3px;width:19.2px;height:18.9px;background:linear-gradient(#eeedeb,#dddbd8);border-color:#b4b2ae"></div>
<svg class="a" style="left:941.50px;top:141.50px;" width="12.50" height="12.50" viewBox="0 0 12.50 12.50"><path d="M6.25 0.5 V12 M0.5 6.25 H12" stroke="#1a5a8a" stroke-width="1.5"/><path d="M6.25 0 L4.2 2.5 H8.3 Z M6.25 12.5 L4.2 10 H8.3 Z M0 6.25 L2.5 4.2 V8.3 Z M12.5 6.25 L10 4.2 V8.3 Z" fill="#1a5a8a"/></svg>
<svg class="a" style="left:961.80px;top:141.00px;" width="13.40" height="13.00" viewBox="0 0 13.40 13.00"><rect x="3" y="4" width="9" height="8.5" fill="#f4f8fc" stroke="#a8c8e0" stroke-width="0.6"/><circle cx="5.5" cy="7.5" r="4" fill="#b8d8f0" opacity="0.85"/><path d="M8 6 L12.5 1" stroke="#e8a030" stroke-width="1.6"/></svg>
<div class="a" style="left:981.80px;top:140.00px;width:0.70px;height:15.00px;background:#d6d4d0"></div>
<svg class="a" style="left:989.70px;top:141.00px;" width="11.70" height="12.50" viewBox="0 0 11.70 12.50"><rect x="1" y="2" width="9.7" height="9" fill="#dde4ea" stroke="#333" stroke-width="0.9"/><rect x="2.5" y="3.5" width="6.7" height="3.5" fill="#fff" stroke="#555" stroke-width="0.5"/><g fill="#2a9a2a"><circle cx="1" cy="6.5" r="1"/><circle cx="10.7" cy="6.5" r="1"/><circle cx="5.85" cy="1.5" r="1"/><circle cx="5.85" cy="11.5" r="1"/></g></svg>
<svg class="a" style="left:1009.20px;top:140.80px;" width="12.90" height="13.00" viewBox="0 0 12.90 13.00"><path d="M0.5 0.5 H11 L12.4 2 V12.5 H0.5 Z" fill="#2a5a88"/><rect x="3" y="0.5" width="7" height="4" fill="#c8d8e8"/><rect x="2.5" y="7.5" width="8" height="5" fill="#e8eef4"/><rect x="6" y="8.5" width="2" height="3" fill="#2a5a88"/></svg>
<svg class="a" style="left:1029.30px;top:141.30px;" width="13.50" height="12.50" viewBox="0 0 13.50 12.50"><rect x="2" y="3.5" width="8" height="8" fill="#fafafa" stroke="#999" stroke-width="0.6"/><path d="M1.5 7 L5 11 L12.5 1" fill="none" stroke="#10c010" stroke-width="2.2"/></svg>
<div class="t" style="left:1055.50px;top:143.95px;font-size:8.5px;color:#555;">»</div>
<div class="a" style="left:0;top:0;width:1100px;height:618px;clip-path:inset(0 38.2px 0 0)">
<div class="a" style="left:868.00px;top:162.40px;width:204.40px;height:319.20px;background:#bfbfbf"></div>
<div class="a" style="left:1061.80px;top:162.40px;width:10.60px;height:330.00px;background:#f2f1f0"></div>
<div class="a" style="left:868.00px;top:162.40px;width:193.80px;height:319.20px;background:#bfbfbf"></div>
<div class="a" style="left:887.00px;top:170.00px;width:161.80px;height:294.30px;background:#fff;border:0.85px solid #222"></div>
<svg class="a" style="left:887.00px;top:170.00px;overflow:hidden" width="161.80" height="294.30" viewBox="0 0 161.80 294.30"><path d="M22.70 0 V294.30" stroke="#c4c4c4" stroke-width="0.5" stroke-dasharray="1 1.5"/><path d="M22.70 0 V3 M22.70 291.30 V294.30" stroke="#111" stroke-width="0.6"/><path d="M64.67 0 V294.30" stroke="#c4c4c4" stroke-width="0.5" stroke-dasharray="1 1.5"/><path d="M64.67 0 V3 M64.67 291.30 V294.30" stroke="#111" stroke-width="0.6"/><path d="M106.63 0 V294.30" stroke="#c4c4c4" stroke-width="0.5" stroke-dasharray="1 1.5"/><path d="M106.63 0 V3 M106.63 291.30 V294.30" stroke="#111" stroke-width="0.6"/><path d="M148.60 0 V294.30" stroke="#c4c4c4" stroke-width="0.5" stroke-dasharray="1 1.5"/><path d="M148.60 0 V3 M148.60 291.30 V294.30" stroke="#111" stroke-width="0.6"/><path d="M0 11.80 H161.80" stroke="#c4c4c4" stroke-width="0.5" stroke-dasharray="1 1.5"/><path d="M0 11.80 H3 M158.80 11.80 H161.80" stroke="#111" stroke-width="0.6"/><path d="M0 56.68 H161.80" stroke="#c4c4c4" stroke-width="0.5" stroke-dasharray="1 1.5"/><path d="M0 56.68 H3 M158.80 56.68 H161.80" stroke="#111" stroke-width="0.6"/><path d="M0 101.55 H161.80" stroke="#c4c4c4" stroke-width="0.5" stroke-dasharray="1 1.5"/><path d="M0 101.55 H3 M158.80 101.55 H161.80" stroke="#111" stroke-width="0.6"/><path d="M0 146.43 H161.80" stroke="#c4c4c4" stroke-width="0.5" stroke-dasharray="1 1.5"/><path d="M0 146.43 H3 M158.80 146.43 H161.80" stroke="#111" stroke-width="0.6"/><path d="M0 191.30 H161.80" stroke="#c4c4c4" stroke-width="0.5" stroke-dasharray="1 1.5"/><path d="M0 191.30 H3 M158.80 191.30 H161.80" stroke="#111" stroke-width="0.6"/><path d="M0 236.18 H161.80" stroke="#c4c4c4" stroke-width="0.5" stroke-dasharray="1 1.5"/><path d="M0 236.18 H3 M158.80 236.18 H161.80" stroke="#111" stroke-width="0.6"/><path d="M0 281.05 H161.80" stroke="#c4c4c4" stroke-width="0.5" stroke-dasharray="1 1.5"/><path d="M0 281.05 H3 M158.80 281.05 H161.80" stroke="#111" stroke-width="0.6"/><path d="M0.29 156.13 L0.63 163.07 L0.98 148.81 L1.32 169.37 L1.66 154.85 L2.01 179.65 L2.35 150.99 L2.69 175.98 L3.03 155.67 L3.38 182.05 L3.72 154.85 L4.06 174.22 L4.41 156.61 L4.75 170.96 L5.09 160.85 L5.43 175.55 L5.78 153.61 L6.12 184.12 L6.46 151.26 L6.81 184.12 L7.15 155.64 L7.49 175.23 L7.84 142.64 L8.18 167.33 L8.52 151.63 L8.86 171.68 L9.21 149.05 L9.55 184.12 L9.89 162.69 L10.24 176.59 L10.58 152.51 L10.92 180.63 L11.26 164.21 L11.61 177.67 L11.95 151.44 L12.29 182.88 L12.64 155.29 L12.98 173.51 L13.32 151.55 L13.67 171.53 L14.01 157.36 L14.35 179.72 L14.69 161.07 L15.04 178.26 L15.38 150.72 L15.72 162.12 L16.07 142.75 L16.41 163.19 L16.75 139.08 L17.09 157.42 L17.44 139.65 L17.78 147.03 L18.12 136.77 L18.47 141.59 L18.81 133.18 L19.15 148.72 L19.49 99.75 L19.84 83.60 L20.18 115.91 L20.52 141.30 L20.87 117.79 L21.21 146.11 L21.55 123.77 L21.90 132.33 L22.24 118.95 L22.58 143.42 L22.92 129.19 L23.27 137.76 L23.61 110.60 L23.95 147.27 L24.30 117.28 L24.64 139.50 L24.98 120.46 L25.32 103.57 L25.67 88.09 L26.01 119.05 L26.35 114.59 L26.70 144.09 L27.04 118.97 L27.38 146.92 L27.73 128.51 L28.07 144.90 L28.41 126.22 L28.75 152.04 L29.10 137.26 L29.44 145.23 L29.78 131.18 L30.13 149.16 L30.47 143.84 L30.81 151.30 L31.15 140.62 L31.50 160.26 L31.84 141.57 L32.18 163.65 L32.53 152.32 L32.87 158.92 L33.21 142.51 L33.56 165.89 L33.90 140.22 L34.24 173.55 L34.58 142.08 L34.93 159.72 L35.27 147.41 L35.61 170.36 L35.96 143.37 L36.30 171.80 L36.64 147.59 L36.98 162.81 L37.33 132.59 L37.67 163.70 L38.01 144.03 L38.36 151.75 L38.70 141.96 L39.04 153.28 L39.38 136.85 L39.73 160.61 L40.07 139.75 L40.41 147.74 L40.76 123.66 L41.10 155.81 L41.44 130.10 L41.79 139.35 L42.13 123.19 L42.47 142.61 L42.81 125.65 L43.16 139.01 L43.50 124.43 L43.84 136.70 L44.19 122.83 L44.53 133.04 L44.87 106.53 L45.21 139.51 L45.56 110.95 L45.90 125.17 L46.24 106.52 L46.59 122.30 L46.93 96.46 L47.27 109.47 L47.62 95.27 L47.96 109.30 L48.30 87.51 L48.64 90.60 L48.99 72.83 L49.33 108.37 L49.67 92.53 L50.02 114.55 L50.36 109.46 L50.70 142.46 L51.04 113.36 L51.39 134.80 L51.73 132.53 L52.07 149.53 L52.42 139.62 L52.76 166.43 L53.10 143.39 L53.45 169.55 L53.79 151.80 L54.13 166.68 L54.47 140.60 L54.82 164.42 L55.16 137.76 L55.50 152.29 L55.85 135.19 L56.19 147.63 L56.53 117.31 L56.87 133.30 L57.22 112.07 L57.56 132.33 L57.90 106.83 L58.25 121.47 L58.59 97.64 L58.93 106.60 L59.27 82.30 L59.62 109.68 L59.96 94.41 L60.30 77.32 L60.65 111.51 L60.99 108.76 L61.33 87.80 L61.68 104.73 L62.02 101.22 L62.36 110.97 L62.70 85.56 L63.05 105.60 L63.39 92.86 L63.73 103.87 L64.08 90.83 L64.42 122.10 L64.76 94.51 L65.10 128.73 L65.45 110.14 L65.79 128.19 L66.13 116.92 L66.48 130.55 L66.82 113.18 L67.16 128.11 L67.51 121.14 L67.85 137.88 L68.19 127.10 L68.53 118.83 L68.88 106.04 L69.22 131.62 L69.56 132.15 L69.91 135.82 L70.25 112.83 L70.59 136.92 L70.93 131.14 L71.28 142.28 L71.62 126.70 L71.96 148.34 L72.31 126.54 L72.65 147.81 L72.99 121.89 L73.34 143.09 L73.68 127.46 L74.02 142.78 L74.36 125.72 L74.71 153.12 L75.05 126.37 L75.39 154.92 L75.74 134.97 L76.08 140.99 L76.42 125.19 L76.76 154.74 L77.11 134.02 L77.45 153.29 L77.79 136.37 L78.14 126.68 L78.48 146.07 L78.82 147.27 L79.16 135.49 L79.51 161.02 L79.85 133.96 L80.19 150.23 L80.54 142.10 L80.88 158.63 L81.22 137.84 L81.57 145.40 L81.91 129.89 L82.25 154.80 L82.59 136.42 L82.94 153.05 L83.28 130.69 L83.62 160.98 L83.97 136.99 L84.31 151.83 L84.65 137.43 L84.99 149.15 L85.34 136.57 L85.68 161.71 L86.02 147.44 L86.37 156.19 L86.71 144.43 L87.05 163.37 L87.40 144.00 L87.74 155.88 L88.08 128.72 L88.42 176.26 L88.77 134.22 L89.11 166.45 L89.45 135.29 L89.80 170.80 L90.14 152.85 L90.48 169.83 L90.82 148.78 L91.17 164.22 L91.51 151.08 L91.85 163.77 L92.20 158.27 L92.54 184.12 L92.88 166.88 L93.23 175.52 L93.57 164.55 L93.91 182.62 L94.25 170.74 L94.60 182.50 L94.94 163.91 L95.28 175.46 L95.63 154.95 L95.97 167.47 L96.31 150.06 L96.65 164.02 L97.00 152.04 L97.34 164.66 L97.68 142.70 L98.03 167.38 L98.37 156.52 L98.71 164.41 L99.05 160.68 L99.40 172.65 L99.74 143.35 L100.08 170.72 L100.43 157.78 L100.77 176.33 L101.11 147.48 L101.46 165.34 L101.80 155.39 L102.14 162.77 L102.48 157.11 L102.83 163.86 L103.17 138.89 L103.51 159.85 L103.86 145.98 L104.20 163.44 L104.54 147.18 L104.88 165.31 L105.23 150.63 L105.57 166.94 L105.91 151.47 L106.26 165.70 L106.60 148.48 L106.94 170.26 L107.29 155.93 L107.63 161.33 L107.97 140.36 L108.31 163.19 L108.66 148.68 L109.00 162.47 L109.34 147.35 L109.69 168.35 L110.03 165.60 L110.37 155.48 L110.71 161.53 L111.06 156.87 L111.40 144.37 L111.74 172.53 L112.09 151.02 L112.43 169.59 L112.77 157.57 L113.12 167.43 L113.46 164.42 L113.80 171.43 L114.14 148.31 L114.49 161.58 L114.83 152.73 L115.17 174.05 L115.52 151.25 L115.86 170.49 L116.20 150.73 L116.54 164.69 L116.89 159.61 L117.23 169.01 L117.57 154.02 L117.92 154.42 L118.26 155.87 L118.60 169.03 L118.94 163.93 L119.29 172.40 L119.63 149.55 L119.97 171.07 L120.32 161.22 L120.66 159.55 L121.00 159.84 L121.35 165.70 L121.69 158.81 L122.03 171.84 L122.37 157.99 L122.72 163.48 L123.06 157.55 L123.40 174.05 L123.75 149.55 L124.09 178.36 L124.43 156.29 L124.77 178.13 L125.12 156.28 L125.46 172.70 L125.80 159.41 L126.15 173.25 L126.49 161.57 L126.83 172.97 L127.18 150.57 L127.52 174.24 L127.86 165.85 L128.20 174.56 L128.55 165.47 L128.89 175.75 L129.23 144.97 L129.58 171.06 L129.92 167.81 L130.26 168.39 L130.60 158.10 L130.95 176.37 L131.29 159.40 L131.63 178.80 L131.98 153.97 L132.32 168.86 L132.66 151.42 L133.01 160.42 L133.35 156.91 L133.69 169.30 L134.03 152.60 L134.38 172.42 L134.72 159.53 L135.06 161.62 L135.41 160.26 L135.75 170.81 L136.09 152.30 L136.43 166.04 L136.78 157.30 L137.12 175.54 L137.46 157.83 L137.81 161.01 L138.15 161.69 L138.49 158.37 L138.83 160.38 L139.18 180.06 L139.52 167.50 L139.86 176.41 L140.21 155.41 L140.55 173.26 L140.89 151.55 L141.24 181.90 L141.58 154.96 L141.92 173.60 L142.26 159.53 L142.61 167.83 L142.95 163.10 L143.29 168.71 L143.64 163.67 L143.98 177.42" stroke="#0000ff" stroke-width="0.85" fill="none"/><path d="M0.29 190.21 L0.63 189.79 L0.98 190.28 L1.32 190.19 L1.66 191.59 L2.01 190.69 L2.35 189.96 L2.69 190.88 L3.03 190.56 L3.38 190.28 L3.72 190.48 L4.06 189.94 L4.41 190.15 L4.75 190.50 L5.09 189.82 L5.43 190.60 L5.78 190.79 L6.12 190.18 L6.46 189.92 L6.81 190.24 L7.15 190.65 L7.49 190.26 L7.84 189.77 L8.18 189.43 L8.52 188.76 L8.86 189.70 L9.21 189.64 L9.55 190.59 L9.89 188.66 L10.24 188.76 L10.58 189.15 L10.92 189.45 L11.26 190.38 L11.61 188.49 L11.95 189.21 L12.29 187.89 L12.64 188.20 L12.98 187.89 L13.32 188.62 L13.67 187.88 L14.01 189.24 L14.35 187.67 L14.69 188.44 L15.04 189.03 L15.38 188.58 L15.72 188.86 L16.07 188.16 L16.41 188.66 L16.75 188.93 L17.09 188.41 L17.44 188.31 L17.78 188.04 L18.12 187.75 L18.47 187.41 L18.81 187.84 L19.15 187.15 L19.49 189.33 L19.84 188.01 L20.18 187.43 L20.52 188.61 L20.87 187.99 L21.21 187.73 L21.55 188.65 L21.90 188.09 L22.24 187.43 L22.58 187.89 L22.92 186.88 L23.27 186.42 L23.61 187.71 L23.95 188.28 L24.30 187.66 L24.64 187.93 L24.98 188.38 L25.32 187.82 L25.67 187.84 L26.01 187.76 L26.35 187.06 L26.70 186.97 L27.04 187.30 L27.38 187.70 L27.73 187.27 L28.07 187.47 L28.41 187.35 L28.75 187.97 L29.10 189.09 L29.44 186.95 L29.78 187.73 L30.13 187.66 L30.47 187.39 L30.81 187.40 L31.15 187.51 L31.50 186.52 L31.84 187.25 L32.18 187.18 L32.53 187.77 L32.87 187.33 L33.21 187.02 L33.56 187.29 L33.90 187.06 L34.24 187.72 L34.58 187.00 L34.93 187.74 L35.27 187.41 L35.61 187.57 L35.96 187.05 L36.30 186.54 L36.64 186.96 L36.98 187.57 L37.33 187.01 L37.67 186.52 L38.01 186.67 L38.36 186.77 L38.70 187.63 L39.04 187.31 L39.38 187.36 L39.73 187.24 L40.07 186.84 L40.41 186.93 L40.76 187.13 L41.10 186.62 L41.44 187.29 L41.79 187.07 L42.13 186.82 L42.47 187.59 L42.81 187.31 L43.16 187.58 L43.50 187.38 L43.84 186.82 L44.19 186.67 L44.53 186.27 L44.87 186.13 L45.21 186.77 L45.56 185.01 L45.90 185.14 L46.24 186.37 L46.59 185.94 L46.93 185.68 L47.27 185.17 L47.62 184.80 L47.96 185.08 L48.30 186.71 L48.64 184.06 L48.99 185.39 L49.33 185.66 L49.67 186.76 L50.02 186.57 L50.36 186.38 L50.70 187.38 L51.04 186.78 L51.39 187.60 L51.73 187.06 L52.07 188.13 L52.42 187.40 L52.76 189.09 L53.10 187.50 L53.45 188.07 L53.79 188.55 L54.13 187.81 L54.47 188.56 L54.82 188.02 L55.16 187.98 L55.50 187.97 L55.85 187.38 L56.19 187.86 L56.53 187.38 L56.87 188.49 L57.22 188.93 L57.56 188.95 L57.90 189.33 L58.25 190.11 L58.59 189.52 L58.93 190.38 L59.27 190.04 L59.62 190.20 L59.96 190.48 L60.30 190.90 L60.65 190.34 L60.99 190.42 L61.33 189.67 L61.68 190.07 L62.02 189.90 L62.36 190.66 L62.70 190.58 L63.05 191.08 L63.39 190.88 L63.73 190.03 L64.08 190.51 L64.42 190.49 L64.76 190.71 L65.10 189.58 L65.45 190.44 L65.79 189.81 L66.13 190.44 L66.48 189.91 L66.82 190.94 L67.16 191.14 L67.51 189.83 L67.85 190.58 L68.19 190.28 L68.53 189.95 L68.88 190.05 L69.22 190.28 L69.56 191.06 L69.91 190.80 L70.25 190.41 L70.59 190.08 L70.93 190.15 L71.28 190.23 L71.62 190.84 L71.96 190.43 L72.31 189.91 L72.65 190.89 L72.99 190.74 L73.34 189.95 L73.68 189.58 L74.02 190.21 L74.36 190.43 L74.71 190.94 L75.05 190.50 L75.39 190.86 L75.74 190.36 L76.08 190.06 L76.42 190.20 L76.76 189.74 L77.11 190.98 L77.45 191.12 L77.79 189.71 L78.14 189.88 L78.48 190.96 L78.82 190.37 L79.16 191.02 L79.51 190.45 L79.85 190.28 L80.19 189.93 L80.54 190.96 L80.88 191.12 L81.22 190.14 L81.57 190.63 L81.91 189.70 L82.25 191.06 L82.59 190.80 L82.94 191.91 L83.28 189.85 L83.62 189.74 L83.97 190.23 L84.31 190.62 L84.65 191.54 L84.99 191.19 L85.34 190.74 L85.68 189.44 L86.02 189.98 L86.37 190.78 L86.71 190.23 L87.05 190.16 L87.40 190.19 L87.74 190.96 L88.08 190.70 L88.42 189.93 L88.77 190.09 L89.11 190.64 L89.45 189.16 L89.80 190.31 L90.14 190.68 L90.48 189.98 L90.82 190.03 L91.17 190.53 L91.51 189.50 L91.85 189.89 L92.20 190.46 L92.54 190.09 L92.88 190.11 L93.23 190.62 L93.57 190.08 L93.91 190.76 L94.25 190.60 L94.60 190.12 L94.94 191.14 L95.28 190.66 L95.63 190.99 L95.97 190.10 L96.31 190.78 L96.65 189.50 L97.00 189.66 L97.34 190.84 L97.68 190.39 L98.03 190.67 L98.37 190.48 L98.71 190.12 L99.05 189.69 L99.40 189.32 L99.74 189.50 L100.08 191.16 L100.43 190.74 L100.77 190.58 L101.11 190.65 L101.46 190.41 L101.80 190.14 L102.14 190.73 L102.48 190.80 L102.83 189.23 L103.17 190.12 L103.51 189.33 L103.86 190.79 L104.20 189.76 L104.54 189.59 L104.88 189.78 L105.23 190.90 L105.57 190.20 L105.91 190.91 L106.26 191.10 L106.60 190.50 L106.94 190.22 L107.29 190.61 L107.63 190.56 L107.97 190.16 L108.31 190.86 L108.66 190.27 L109.00 190.09 L109.34 190.15 L109.69 190.20 L110.03 191.04 L110.37 190.66 L110.71 190.74 L111.06 190.13 L111.40 191.44 L111.74 190.43 L112.09 191.36 L112.43 190.16 L112.77 190.79 L113.12 190.49 L113.46 190.01 L113.80 189.60 L114.14 191.04 L114.49 190.45 L114.83 191.56 L115.17 190.62 L115.52 190.88 L115.86 190.16 L116.20 190.57 L116.54 190.46 L116.89 191.11 L117.23 190.69 L117.57 191.11 L117.92 190.51 L118.26 191.37 L118.60 190.38 L118.94 189.93 L119.29 189.13 L119.63 189.72 L119.97 189.82 L120.32 190.10 L120.66 189.68 L121.00 190.55 L121.35 190.32 L121.69 191.53 L122.03 190.79 L122.37 189.91 L122.72 191.45 L123.06 190.36 L123.40 190.56 L123.75 190.72 L124.09 190.36 L124.43 190.52 L124.77 191.13 L125.12 190.58 L125.46 191.50 L125.80 189.73 L126.15 190.55 L126.49 190.06 L126.83 191.02 L127.18 189.55 L127.52 190.00 L127.86 190.35 L128.20 190.42 L128.55 190.34 L128.89 190.93 L129.23 190.62 L129.58 190.66 L129.92 190.34 L130.26 189.72 L130.60 189.93 L130.95 190.40 L131.29 190.21 L131.63 190.70 L131.98 190.80 L132.32 191.41 L132.66 191.23 L133.01 191.19 L133.35 190.59 L133.69 190.65 L134.03 190.32 L134.38 189.94 L134.72 190.19 L135.06 190.63 L135.41 190.80 L135.75 190.71 L136.09 190.23 L136.43 191.04 L136.78 191.36 L137.12 190.68 L137.46 190.00 L137.81 189.91 L138.15 190.24 L138.49 191.58 L138.83 190.65 L139.18 190.18 L139.52 189.98 L139.86 189.58 L140.21 191.07 L140.55 190.37 L140.89 191.40 L141.24 190.68 L141.58 190.78 L141.92 190.13 L142.26 190.48 L142.61 191.51 L142.95 190.64 L143.29 190.38 L143.64 189.80 L143.98 190.96" stroke="#ff0000" stroke-width="0.8" fill="none"/></svg>
<div class="a" style="left:892.20px;top:175.30px;width:180.00px;height:30.90px;background:#fff;border:0.8px solid #222"></div>
<div class="a" style="left:897.90px;top:182.80px;width:13.70px;height:0.80px;background:#5050ff"></div>
<div class="a" style="left:897.90px;top:196.50px;width:13.70px;height:0.80px;background:#ff5050"></div>
<div class="t" style="left:921.20px;top:178.05px;font-size:10.5px;color:#111;-webkit-text-stroke:0;">/tage_detector/tag/reErr/data</div>
<div class="t" style="left:921.20px;top:191.75px;font-size:10.5px;color:#111;-webkit-text-stroke:0;">/tage_detector/tag/reErrGT/data</div>
<div class="t" style="right:215.40px;top:179.10px;font-size:8.2px;color:#222">20</div>
<div class="t" style="right:215.40px;top:223.98px;font-size:8.2px;color:#222">15</div>
<div class="t" style="right:215.40px;top:268.85px;font-size:8.2px;color:#222">10</div>
<div class="t" style="right:215.40px;top:313.73px;font-size:8.2px;color:#222">5</div>
<div class="t" style="right:215.40px;top:358.60px;font-size:8.2px;color:#222">0</div>
<div class="t" style="right:215.40px;top:403.48px;font-size:8.2px;color:#222">&#8722;5</div>
<div class="t" style="right:215.40px;top:448.35px;font-size:8.2px;color:#222">&#8722;10</div>
<div class="t" style="left:900.30px;top:466.20px;font-size:8.4px;color:#222;">1505</div>
<div class="t" style="left:942.27px;top:466.20px;font-size:8.4px;color:#222;">1510</div>
<div class="t" style="left:984.23px;top:466.20px;font-size:8.4px;color:#222;">1515</div>
<div class="t" style="left:1026.19px;top:466.20px;font-size:8.4px;color:#222;">1520</div>
</div>
<div class="a" style="left:857.00px;top:492.00px;width:215.40px;height:0.70px;background:#dcdad6"></div>
<div class="a" style="left:1072.40px;top:67.00px;width:0.10px;height:0.10px;"></div>
</body></html>
